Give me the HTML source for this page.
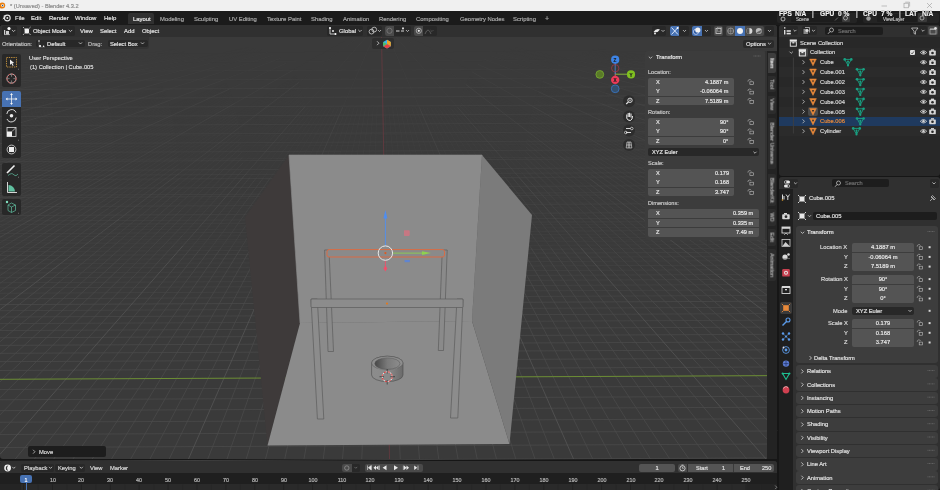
<!DOCTYPE html><html><head><meta charset="utf-8"><style>
html,body{margin:0;padding:0;width:940px;height:490px;overflow:hidden;background:#161616;font-family:"Liberation Sans",sans-serif;}
.t{position:absolute;white-space:nowrap;line-height:1.2;will-change:transform;-webkit-text-stroke:0.18px currentColor;}
.b{position:absolute;}
svg{position:absolute;left:0;top:0;}
</style></head><body>
<div class="b" style="left:0px;top:0px;width:940px;height:11px;background:#f0f0f0;border-radius:0px;"></div>
<svg width="12" height="11" style="left:0;top:0"><circle cx="2.2" cy="5.6" r="3" fill="#e87d0d"/><circle cx="2.6" cy="5.6" r="1.4" fill="#fff"/><circle cx="2.6" cy="5.6" r="0.8" fill="#265787"/></svg>
<div class="t" style="left:9.60px;top:3.39px;font-size:5.66px;color:#8a8a8a;">* (Unsaved) - Blender 4.3.2</div>
<svg width="60" height="11" style="left:880px;top:0"><line x1="1.5" y1="6" x2="7" y2="6" stroke="#9a9a9a" stroke-width="0.6"/><rect x="24" y="3.2" width="4.6" height="4.6" fill="none" stroke="#9a9a9a" stroke-width="0.6"/><path d="M25.2,2.2 H29.6 V6.6" fill="none" stroke="#9a9a9a" stroke-width="0.6"/><path d="M47,3 L52,8 M52,3 L47,8" stroke="#9a9a9a" stroke-width="0.6"/></svg>
<div class="b" style="left:0px;top:11px;width:940px;height:14px;background:#1b1b1b;border-radius:0px;"></div>
<svg width="10" height="10" style="left:2px;top:13px"><circle cx="5.3" cy="5" r="2.9" fill="none" stroke="#e0e0e0" stroke-width="1.1"/><circle cx="5.3" cy="5" r="1" fill="#e0e0e0"/><path d="M0.8,6.2 L3.2,3.6 M1.5,3.2 L4.2,2.4 M1.2,5 L3.4,4.4" stroke="#e0e0e0" stroke-width="0.9"/></svg>
<div class="t" style="left:14.50px;top:14.98px;font-size:6.0px;color:#e0e0e0;">File</div>
<div class="t" style="left:31.00px;top:14.98px;font-size:6.0px;color:#e0e0e0;">Edit</div>
<div class="t" style="left:49.00px;top:14.98px;font-size:6.0px;color:#e0e0e0;">Render</div>
<div class="t" style="left:75.00px;top:14.98px;font-size:6.0px;color:#e0e0e0;">Window</div>
<div class="t" style="left:104.00px;top:14.98px;font-size:6.0px;color:#e0e0e0;">Help</div>
<div class="b" style="left:128px;top:13px;width:26px;height:11px;background:#303030;border-radius:0px;border-radius:2px 2px 0 0;"></div>
<div class="t" style="left:133.00px;top:15.64px;font-size:5.9px;color:#e8e8e8;">Layout</div>
<div class="t" style="left:160.00px;top:15.64px;font-size:5.9px;color:#a8a8a8;">Modeling</div>
<div class="t" style="left:194.40px;top:15.64px;font-size:5.9px;color:#a8a8a8;">Sculpting</div>
<div class="t" style="left:228.80px;top:15.64px;font-size:5.9px;color:#a8a8a8;">UV Editing</div>
<div class="t" style="left:267.00px;top:15.64px;font-size:5.9px;color:#a8a8a8;">Texture Paint</div>
<div class="t" style="left:311.00px;top:15.64px;font-size:5.9px;color:#a8a8a8;">Shading</div>
<div class="t" style="left:342.50px;top:15.64px;font-size:5.9px;color:#a8a8a8;">Animation</div>
<div class="t" style="left:379.00px;top:15.64px;font-size:5.9px;color:#a8a8a8;">Rendering</div>
<div class="t" style="left:415.70px;top:15.64px;font-size:5.9px;color:#a8a8a8;">Compositing</div>
<div class="t" style="left:460.00px;top:15.64px;font-size:5.9px;color:#a8a8a8;">Geometry Nodes</div>
<div class="t" style="left:512.80px;top:15.64px;font-size:5.9px;color:#a8a8a8;">Scripting</div>
<div class="t" style="left:544.50px;top:14.66px;font-size:7px;color:#a8a8a8;">+</div>
<div class="b" style="left:0px;top:25px;width:777px;height:434px;background:#3a3a3a;border-radius:3px;"></div>
<svg width="940" height="490"><line x1="0" y1="461.39" x2="777" y2="457.89" stroke="#4a4a4a" stroke-opacity="1.00" stroke-width="0.8"/><line x1="0" y1="447.51" x2="777" y2="444.01" stroke="#4a4a4a" stroke-opacity="1.00" stroke-width="0.8"/><line x1="0" y1="434.48" x2="777" y2="430.98" stroke="#4a4a4a" stroke-opacity="1.00" stroke-width="0.8"/><line x1="0" y1="422.23" x2="777" y2="418.73" stroke="#4a4a4a" stroke-opacity="1.00" stroke-width="0.8"/><line x1="0" y1="410.68" x2="777" y2="407.18" stroke="#4a4a4a" stroke-opacity="1.00" stroke-width="0.8"/><line x1="0" y1="399.78" x2="777" y2="396.28" stroke="#4a4a4a" stroke-opacity="1.00" stroke-width="0.8"/><line x1="0" y1="389.47" x2="777" y2="385.98" stroke="#4a4a4a" stroke-opacity="1.00" stroke-width="0.8"/><line x1="0" y1="370.46" x2="777" y2="366.96" stroke="#4a4a4a" stroke-opacity="1.00" stroke-width="0.8"/><line x1="0" y1="361.67" x2="777" y2="358.18" stroke="#4a4a4a" stroke-opacity="1.00" stroke-width="0.8"/><line x1="0" y1="353.32" x2="777" y2="349.82" stroke="#4a4a4a" stroke-opacity="1.00" stroke-width="0.8"/><line x1="0" y1="345.36" x2="777" y2="341.86" stroke="#4a4a4a" stroke-opacity="1.00" stroke-width="0.8"/><line x1="0" y1="337.78" x2="777" y2="334.28" stroke="#4a4a4a" stroke-opacity="0.97" stroke-width="0.8"/><line x1="0" y1="330.54" x2="777" y2="327.05" stroke="#4a4a4a" stroke-opacity="0.91" stroke-width="0.8"/><line x1="0" y1="323.63" x2="777" y2="320.14" stroke="#4a4a4a" stroke-opacity="0.86" stroke-width="0.8"/><line x1="0" y1="317.02" x2="777" y2="313.53" stroke="#4a4a4a" stroke-opacity="0.81" stroke-width="0.8"/><line x1="0" y1="310.70" x2="777" y2="307.20" stroke="#4a4a4a" stroke-opacity="0.77" stroke-width="0.8"/><line x1="0" y1="304.64" x2="777" y2="301.14" stroke="#505050" stroke-opacity="0.72" stroke-width="0.8"/><line x1="0" y1="298.83" x2="777" y2="295.33" stroke="#4a4a4a" stroke-opacity="0.68" stroke-width="0.8"/><line x1="0" y1="293.25" x2="777" y2="289.75" stroke="#4a4a4a" stroke-opacity="0.64" stroke-width="0.8"/><line x1="0" y1="287.89" x2="777" y2="284.39" stroke="#4a4a4a" stroke-opacity="0.61" stroke-width="0.8"/><line x1="0" y1="282.74" x2="777" y2="279.24" stroke="#4a4a4a" stroke-opacity="0.58" stroke-width="0.8"/><line x1="0" y1="277.79" x2="777" y2="274.29" stroke="#4a4a4a" stroke-opacity="0.54" stroke-width="0.8"/><line x1="0" y1="273.02" x2="777" y2="269.52" stroke="#4a4a4a" stroke-opacity="0.51" stroke-width="0.8"/><line x1="0" y1="268.42" x2="777" y2="264.92" stroke="#4a4a4a" stroke-opacity="0.49" stroke-width="0.8"/><line x1="0" y1="263.99" x2="777" y2="260.49" stroke="#4a4a4a" stroke-opacity="0.46" stroke-width="0.8"/><line x1="0" y1="259.72" x2="777" y2="256.22" stroke="#4a4a4a" stroke-opacity="0.43" stroke-width="0.8"/><line x1="0" y1="255.59" x2="777" y2="252.09" stroke="#505050" stroke-opacity="0.41" stroke-width="0.8"/><line x1="0" y1="251.61" x2="777" y2="248.11" stroke="#4a4a4a" stroke-opacity="0.39" stroke-width="0.8"/><line x1="0" y1="247.75" x2="777" y2="244.26" stroke="#4a4a4a" stroke-opacity="0.36" stroke-width="0.8"/><line x1="0" y1="244.03" x2="777" y2="240.53" stroke="#4a4a4a" stroke-opacity="0.34" stroke-width="0.8"/><line x1="0" y1="240.42" x2="777" y2="236.93" stroke="#4a4a4a" stroke-opacity="0.32" stroke-width="0.8"/><line x1="0" y1="236.94" x2="777" y2="233.44" stroke="#4a4a4a" stroke-opacity="0.31" stroke-width="0.8"/><line x1="0" y1="233.56" x2="777" y2="230.06" stroke="#4a4a4a" stroke-opacity="0.29" stroke-width="0.8"/><line x1="0" y1="230.28" x2="777" y2="226.78" stroke="#4a4a4a" stroke-opacity="0.27" stroke-width="0.8"/><line x1="0" y1="227.11" x2="777" y2="223.61" stroke="#4a4a4a" stroke-opacity="0.25" stroke-width="0.8"/><line x1="0" y1="224.03" x2="777" y2="220.53" stroke="#4a4a4a" stroke-opacity="0.24" stroke-width="0.8"/><line x1="0" y1="221.04" x2="777" y2="217.54" stroke="#505050" stroke-opacity="0.40" stroke-width="0.8"/><line x1="0" y1="218.13" x2="777" y2="214.64" stroke="#4a4a4a" stroke-opacity="0.21" stroke-width="0.8"/><line x1="0" y1="215.32" x2="777" y2="211.82" stroke="#4a4a4a" stroke-opacity="0.20" stroke-width="0.8"/><line x1="0" y1="212.58" x2="777" y2="209.08" stroke="#4a4a4a" stroke-opacity="0.18" stroke-width="0.8"/><line x1="0" y1="209.91" x2="777" y2="206.42" stroke="#4a4a4a" stroke-opacity="0.17" stroke-width="0.8"/><line x1="0" y1="207.32" x2="777" y2="203.83" stroke="#4a4a4a" stroke-opacity="0.16" stroke-width="0.8"/><line x1="0" y1="204.81" x2="777" y2="201.31" stroke="#4a4a4a" stroke-opacity="0.15" stroke-width="0.8"/><line x1="0" y1="202.35" x2="777" y2="198.86" stroke="#4a4a4a" stroke-opacity="0.14" stroke-width="0.8"/><line x1="0" y1="199.97" x2="777" y2="196.47" stroke="#4a4a4a" stroke-opacity="0.13" stroke-width="0.8"/><line x1="0" y1="197.64" x2="777" y2="194.15" stroke="#4a4a4a" stroke-opacity="0.12" stroke-width="0.8"/><line x1="0" y1="195.38" x2="777" y2="191.88" stroke="#505050" stroke-opacity="0.40" stroke-width="0.8"/><line x1="0" y1="193.17" x2="777" y2="189.67" stroke="#4a4a4a" stroke-opacity="0.10" stroke-width="0.8"/><line x1="0" y1="191.02" x2="777" y2="187.52" stroke="#4a4a4a" stroke-opacity="0.09" stroke-width="0.8"/><line x1="0" y1="188.92" x2="777" y2="185.42" stroke="#4a4a4a" stroke-opacity="0.08" stroke-width="0.8"/><line x1="0" y1="186.87" x2="777" y2="183.38" stroke="#4a4a4a" stroke-opacity="0.07" stroke-width="0.8"/><line x1="0" y1="184.88" x2="777" y2="181.38" stroke="#4a4a4a" stroke-opacity="0.06" stroke-width="0.8"/><line x1="0" y1="182.93" x2="777" y2="179.43" stroke="#4a4a4a" stroke-opacity="0.05" stroke-width="0.8"/><line x1="0" y1="181.02" x2="777" y2="177.53" stroke="#4a4a4a" stroke-opacity="0.05" stroke-width="0.8"/><line x1="0" y1="179.16" x2="777" y2="175.67" stroke="#4a4a4a" stroke-opacity="0.04" stroke-width="0.8"/><line x1="0" y1="177.35" x2="777" y2="173.85" stroke="#4a4a4a" stroke-opacity="0.03" stroke-width="0.8"/><line x1="0" y1="175.57" x2="777" y2="172.08" stroke="#505050" stroke-opacity="0.33" stroke-width="0.8"/><line x1="0" y1="159.82" x2="777" y2="156.33" stroke="#505050" stroke-opacity="0.23" stroke-width="0.8"/><line x1="0" y1="147.00" x2="777" y2="143.50" stroke="#505050" stroke-opacity="0.16" stroke-width="0.8"/><line x1="0" y1="136.35" x2="777" y2="132.85" stroke="#505050" stroke-opacity="0.11" stroke-width="0.8"/><line x1="0" y1="127.37" x2="777" y2="123.88" stroke="#505050" stroke-opacity="0.07" stroke-width="0.8"/><line x1="0" y1="119.70" x2="777" y2="116.20" stroke="#505050" stroke-opacity="0.03" stroke-width="0.8"/><line x1="115.95" y1="50.22" x2="77.30" y2="54.63" stroke="#555555" stroke-opacity="0.02" stroke-width="0.8"/><line x1="77.30" y1="54.63" x2="38.65" y2="59.03" stroke="#555555" stroke-opacity="0.05" stroke-width="0.8"/><line x1="38.65" y1="59.03" x2="0.00" y2="63.44" stroke="#555555" stroke-opacity="0.08" stroke-width="0.8"/><line x1="119.67" y1="51.36" x2="79.78" y2="56.15" stroke="#555555" stroke-opacity="0.03" stroke-width="0.8"/><line x1="79.78" y1="56.15" x2="39.89" y2="60.94" stroke="#555555" stroke-opacity="0.06" stroke-width="0.8"/><line x1="39.89" y1="60.94" x2="0.00" y2="65.73" stroke="#555555" stroke-opacity="0.09" stroke-width="0.8"/><line x1="123.40" y1="52.63" x2="82.27" y2="57.84" stroke="#555555" stroke-opacity="0.04" stroke-width="0.8"/><line x1="82.27" y1="57.84" x2="41.13" y2="63.05" stroke="#555555" stroke-opacity="0.07" stroke-width="0.8"/><line x1="41.13" y1="63.05" x2="0.00" y2="68.27" stroke="#555555" stroke-opacity="0.11" stroke-width="0.8"/><line x1="127.13" y1="54.05" x2="84.75" y2="59.74" stroke="#555555" stroke-opacity="0.05" stroke-width="0.8"/><line x1="84.75" y1="59.74" x2="42.38" y2="65.42" stroke="#555555" stroke-opacity="0.09" stroke-width="0.8"/><line x1="42.38" y1="65.42" x2="0.00" y2="71.10" stroke="#555555" stroke-opacity="0.13" stroke-width="0.8"/><line x1="174.48" y1="49.43" x2="130.86" y2="55.65" stroke="#555555" stroke-opacity="0.02" stroke-width="0.8"/><line x1="130.86" y1="55.65" x2="87.24" y2="61.87" stroke="#555555" stroke-opacity="0.06" stroke-width="0.8"/><line x1="87.24" y1="61.87" x2="43.62" y2="68.08" stroke="#555555" stroke-opacity="0.11" stroke-width="0.8"/><line x1="43.62" y1="68.08" x2="0.00" y2="74.30" stroke="#555555" stroke-opacity="0.14" stroke-width="0.8"/><line x1="179.45" y1="50.64" x2="134.59" y2="57.46" stroke="#555555" stroke-opacity="0.03" stroke-width="0.8"/><line x1="134.59" y1="57.46" x2="89.72" y2="64.28" stroke="#555555" stroke-opacity="0.07" stroke-width="0.8"/><line x1="89.72" y1="64.28" x2="44.86" y2="71.10" stroke="#555555" stroke-opacity="0.12" stroke-width="0.8"/><line x1="44.86" y1="71.10" x2="0.00" y2="77.92" stroke="#555555" stroke-opacity="0.16" stroke-width="0.8"/><line x1="184.42" y1="52.02" x2="138.31" y2="59.53" stroke="#555555" stroke-opacity="0.04" stroke-width="0.8"/><line x1="138.31" y1="59.53" x2="92.21" y2="67.04" stroke="#555555" stroke-opacity="0.09" stroke-width="0.8"/><line x1="92.21" y1="67.04" x2="46.10" y2="74.55" stroke="#555555" stroke-opacity="0.14" stroke-width="0.8"/><line x1="46.10" y1="74.55" x2="0.00" y2="82.06" stroke="#555555" stroke-opacity="0.18" stroke-width="0.8"/><line x1="189.39" y1="53.61" x2="142.04" y2="61.91" stroke="#555555" stroke-opacity="0.05" stroke-width="0.8"/><line x1="142.04" y1="61.91" x2="94.69" y2="70.22" stroke="#555555" stroke-opacity="0.11" stroke-width="0.8"/><line x1="94.69" y1="70.22" x2="47.35" y2="78.52" stroke="#555555" stroke-opacity="0.16" stroke-width="0.8"/><line x1="47.35" y1="78.52" x2="0.00" y2="86.83" stroke="#555555" stroke-opacity="0.20" stroke-width="0.8"/><line x1="194.36" y1="55.47" x2="145.77" y2="64.70" stroke="#555555" stroke-opacity="0.07" stroke-width="0.8"/><line x1="145.77" y1="64.70" x2="97.18" y2="73.93" stroke="#555555" stroke-opacity="0.13" stroke-width="0.8"/><line x1="97.18" y1="73.93" x2="48.59" y2="83.17" stroke="#555555" stroke-opacity="0.18" stroke-width="0.8"/><line x1="48.59" y1="83.17" x2="-0.00" y2="92.40" stroke="#555555" stroke-opacity="0.23" stroke-width="0.8"/><line x1="249.16" y1="47.33" x2="199.33" y2="57.66" stroke="#555555" stroke-opacity="0.02" stroke-width="0.8"/><line x1="199.33" y1="57.66" x2="149.50" y2="67.99" stroke="#555555" stroke-opacity="0.09" stroke-width="0.8"/><line x1="149.50" y1="67.99" x2="99.66" y2="78.32" stroke="#555555" stroke-opacity="0.15" stroke-width="0.8"/><line x1="99.66" y1="78.32" x2="49.83" y2="88.65" stroke="#555555" stroke-opacity="0.21" stroke-width="0.8"/><line x1="49.83" y1="88.65" x2="0.00" y2="98.98" stroke="#555555" stroke-opacity="0.26" stroke-width="0.8"/><line x1="49.96" y1="89.25" x2="0.00" y2="99.70" stroke="#4a4a4a" stroke-opacity="0.02" stroke-width="0.8"/><line x1="50.08" y1="89.87" x2="0.00" y2="100.44" stroke="#4a4a4a" stroke-opacity="0.02" stroke-width="0.8"/><line x1="50.20" y1="90.50" x2="0.00" y2="101.19" stroke="#4a4a4a" stroke-opacity="0.03" stroke-width="0.8"/><line x1="50.33" y1="91.13" x2="0.00" y2="101.96" stroke="#4a4a4a" stroke-opacity="0.03" stroke-width="0.8"/><line x1="50.45" y1="91.78" x2="0.00" y2="102.74" stroke="#4a4a4a" stroke-opacity="0.03" stroke-width="0.8"/><line x1="50.58" y1="92.45" x2="0.00" y2="103.54" stroke="#4a4a4a" stroke-opacity="0.04" stroke-width="0.8"/><line x1="50.70" y1="93.12" x2="0.00" y2="104.35" stroke="#4a4a4a" stroke-opacity="0.04" stroke-width="0.8"/><line x1="50.83" y1="93.81" x2="0.00" y2="105.17" stroke="#4a4a4a" stroke-opacity="0.04" stroke-width="0.8"/><line x1="50.95" y1="94.51" x2="0.00" y2="106.02" stroke="#4a4a4a" stroke-opacity="0.05" stroke-width="0.8"/><line x1="255.37" y1="48.65" x2="204.30" y2="60.29" stroke="#555555" stroke-opacity="0.03" stroke-width="0.8"/><line x1="204.30" y1="60.29" x2="153.22" y2="71.94" stroke="#555555" stroke-opacity="0.11" stroke-width="0.8"/><line x1="153.22" y1="71.94" x2="102.15" y2="83.59" stroke="#555555" stroke-opacity="0.18" stroke-width="0.8"/><line x1="102.15" y1="83.59" x2="51.07" y2="95.23" stroke="#555555" stroke-opacity="0.24" stroke-width="0.8"/><line x1="51.07" y1="95.23" x2="0.00" y2="106.88" stroke="#555555" stroke-opacity="0.30" stroke-width="0.8"/><line x1="51.20" y1="95.96" x2="0.00" y2="107.76" stroke="#4a4a4a" stroke-opacity="0.05" stroke-width="0.8"/><line x1="51.32" y1="96.71" x2="0.00" y2="108.65" stroke="#4a4a4a" stroke-opacity="0.06" stroke-width="0.8"/><line x1="51.45" y1="97.47" x2="0.00" y2="109.56" stroke="#4a4a4a" stroke-opacity="0.06" stroke-width="0.8"/><line x1="51.57" y1="98.25" x2="0.00" y2="110.50" stroke="#4a4a4a" stroke-opacity="0.07" stroke-width="0.8"/><line x1="51.70" y1="99.04" x2="0.00" y2="111.45" stroke="#4a4a4a" stroke-opacity="0.07" stroke-width="0.8"/><line x1="51.82" y1="99.85" x2="0.00" y2="112.42" stroke="#4a4a4a" stroke-opacity="0.08" stroke-width="0.8"/><line x1="103.89" y1="87.94" x2="51.94" y2="100.68" stroke="#4a4a4a" stroke-opacity="0.02" stroke-width="0.8"/><line x1="51.94" y1="100.68" x2="0.00" y2="113.42" stroke="#4a4a4a" stroke-opacity="0.08" stroke-width="0.8"/><line x1="104.14" y1="88.62" x2="52.07" y2="101.53" stroke="#4a4a4a" stroke-opacity="0.02" stroke-width="0.8"/><line x1="52.07" y1="101.53" x2="0.00" y2="114.43" stroke="#4a4a4a" stroke-opacity="0.09" stroke-width="0.8"/><line x1="104.39" y1="89.31" x2="52.19" y2="102.39" stroke="#4a4a4a" stroke-opacity="0.03" stroke-width="0.8"/><line x1="52.19" y1="102.39" x2="0.00" y2="115.47" stroke="#4a4a4a" stroke-opacity="0.09" stroke-width="0.8"/><line x1="261.59" y1="50.26" x2="209.27" y2="63.51" stroke="#555555" stroke-opacity="0.05" stroke-width="0.8"/><line x1="209.27" y1="63.51" x2="156.95" y2="76.77" stroke="#555555" stroke-opacity="0.14" stroke-width="0.8"/><line x1="156.95" y1="76.77" x2="104.63" y2="90.02" stroke="#555555" stroke-opacity="0.21" stroke-width="0.8"/><line x1="104.63" y1="90.02" x2="52.32" y2="103.28" stroke="#555555" stroke-opacity="0.28" stroke-width="0.8"/><line x1="52.32" y1="103.28" x2="0.00" y2="116.53" stroke="#555555" stroke-opacity="0.35" stroke-width="0.8"/><line x1="104.88" y1="90.74" x2="52.44" y2="104.18" stroke="#4a4a4a" stroke-opacity="0.03" stroke-width="0.8"/><line x1="52.44" y1="104.18" x2="0.00" y2="117.62" stroke="#4a4a4a" stroke-opacity="0.10" stroke-width="0.8"/><line x1="105.13" y1="91.48" x2="52.57" y2="105.10" stroke="#4a4a4a" stroke-opacity="0.04" stroke-width="0.8"/><line x1="52.57" y1="105.10" x2="0.00" y2="118.72" stroke="#4a4a4a" stroke-opacity="0.11" stroke-width="0.8"/><line x1="105.38" y1="92.24" x2="52.69" y2="106.05" stroke="#4a4a4a" stroke-opacity="0.04" stroke-width="0.8"/><line x1="52.69" y1="106.05" x2="0.00" y2="119.86" stroke="#4a4a4a" stroke-opacity="0.12" stroke-width="0.8"/><line x1="105.63" y1="93.01" x2="52.81" y2="107.02" stroke="#4a4a4a" stroke-opacity="0.04" stroke-width="0.8"/><line x1="52.81" y1="107.02" x2="0.00" y2="121.02" stroke="#4a4a4a" stroke-opacity="0.12" stroke-width="0.8"/><line x1="105.88" y1="93.81" x2="52.94" y2="108.01" stroke="#4a4a4a" stroke-opacity="0.05" stroke-width="0.8"/><line x1="52.94" y1="108.01" x2="0.00" y2="122.21" stroke="#4a4a4a" stroke-opacity="0.13" stroke-width="0.8"/><line x1="106.13" y1="94.62" x2="53.06" y2="109.02" stroke="#4a4a4a" stroke-opacity="0.05" stroke-width="0.8"/><line x1="53.06" y1="109.02" x2="0.00" y2="123.43" stroke="#4a4a4a" stroke-opacity="0.14" stroke-width="0.8"/><line x1="106.37" y1="95.45" x2="53.19" y2="110.06" stroke="#4a4a4a" stroke-opacity="0.06" stroke-width="0.8"/><line x1="53.19" y1="110.06" x2="0.00" y2="124.67" stroke="#4a4a4a" stroke-opacity="0.14" stroke-width="0.8"/><line x1="106.62" y1="96.30" x2="53.31" y2="111.12" stroke="#4a4a4a" stroke-opacity="0.06" stroke-width="0.8"/><line x1="53.31" y1="111.12" x2="0.00" y2="125.95" stroke="#4a4a4a" stroke-opacity="0.15" stroke-width="0.8"/><line x1="106.87" y1="97.17" x2="53.44" y2="112.21" stroke="#4a4a4a" stroke-opacity="0.07" stroke-width="0.8"/><line x1="53.44" y1="112.21" x2="0.00" y2="127.26" stroke="#4a4a4a" stroke-opacity="0.15" stroke-width="0.8"/><line x1="267.80" y1="52.27" x2="214.24" y2="67.53" stroke="#555555" stroke-opacity="0.07" stroke-width="0.8"/><line x1="214.24" y1="67.53" x2="160.68" y2="82.80" stroke="#555555" stroke-opacity="0.16" stroke-width="0.8"/><line x1="160.68" y1="82.80" x2="107.12" y2="98.06" stroke="#555555" stroke-opacity="0.25" stroke-width="0.8"/><line x1="107.12" y1="98.06" x2="53.56" y2="113.33" stroke="#555555" stroke-opacity="0.33" stroke-width="0.8"/><line x1="53.56" y1="113.33" x2="0.00" y2="128.60" stroke="#555555" stroke-opacity="0.38" stroke-width="0.8"/><line x1="107.37" y1="98.98" x2="53.68" y2="114.48" stroke="#4a4a4a" stroke-opacity="0.08" stroke-width="0.8"/><line x1="53.68" y1="114.48" x2="-0.00" y2="129.97" stroke="#4a4a4a" stroke-opacity="0.16" stroke-width="0.8"/><line x1="107.62" y1="99.92" x2="53.81" y2="115.65" stroke="#4a4a4a" stroke-opacity="0.08" stroke-width="0.8"/><line x1="53.81" y1="115.65" x2="0.00" y2="131.38" stroke="#4a4a4a" stroke-opacity="0.17" stroke-width="0.8"/><line x1="107.86" y1="100.89" x2="53.93" y2="116.86" stroke="#4a4a4a" stroke-opacity="0.09" stroke-width="0.8"/><line x1="53.93" y1="116.86" x2="-0.00" y2="132.83" stroke="#4a4a4a" stroke-opacity="0.18" stroke-width="0.8"/><line x1="108.11" y1="101.88" x2="54.06" y2="118.09" stroke="#4a4a4a" stroke-opacity="0.10" stroke-width="0.8"/><line x1="54.06" y1="118.09" x2="-0.00" y2="134.31" stroke="#4a4a4a" stroke-opacity="0.18" stroke-width="0.8"/><line x1="162.54" y1="86.42" x2="108.36" y2="102.89" stroke="#4a4a4a" stroke-opacity="0.02" stroke-width="0.8"/><line x1="108.36" y1="102.89" x2="54.18" y2="119.36" stroke="#4a4a4a" stroke-opacity="0.10" stroke-width="0.8"/><line x1="54.18" y1="119.36" x2="-0.00" y2="135.84" stroke="#4a4a4a" stroke-opacity="0.19" stroke-width="0.8"/><line x1="162.92" y1="87.20" x2="108.61" y2="103.93" stroke="#4a4a4a" stroke-opacity="0.03" stroke-width="0.8"/><line x1="108.61" y1="103.93" x2="54.31" y2="120.67" stroke="#4a4a4a" stroke-opacity="0.11" stroke-width="0.8"/><line x1="54.31" y1="120.67" x2="0.00" y2="137.40" stroke="#4a4a4a" stroke-opacity="0.20" stroke-width="0.8"/><line x1="163.29" y1="88.01" x2="108.86" y2="105.01" stroke="#4a4a4a" stroke-opacity="0.03" stroke-width="0.8"/><line x1="108.86" y1="105.01" x2="54.43" y2="122.01" stroke="#4a4a4a" stroke-opacity="0.12" stroke-width="0.8"/><line x1="54.43" y1="122.01" x2="0.00" y2="139.01" stroke="#4a4a4a" stroke-opacity="0.21" stroke-width="0.8"/><line x1="163.66" y1="88.83" x2="109.11" y2="106.11" stroke="#4a4a4a" stroke-opacity="0.03" stroke-width="0.8"/><line x1="109.11" y1="106.11" x2="54.55" y2="123.39" stroke="#4a4a4a" stroke-opacity="0.13" stroke-width="0.8"/><line x1="54.55" y1="123.39" x2="0.00" y2="140.66" stroke="#4a4a4a" stroke-opacity="0.21" stroke-width="0.8"/><line x1="164.03" y1="89.68" x2="109.36" y2="107.24" stroke="#4a4a4a" stroke-opacity="0.04" stroke-width="0.8"/><line x1="109.36" y1="107.24" x2="54.68" y2="124.80" stroke="#4a4a4a" stroke-opacity="0.13" stroke-width="0.8"/><line x1="54.68" y1="124.80" x2="0.00" y2="142.36" stroke="#4a4a4a" stroke-opacity="0.22" stroke-width="0.8"/><line x1="274.01" y1="54.85" x2="219.21" y2="72.70" stroke="#555555" stroke-opacity="0.10" stroke-width="0.8"/><line x1="219.21" y1="72.70" x2="164.41" y2="90.56" stroke="#555555" stroke-opacity="0.20" stroke-width="0.8"/><line x1="164.41" y1="90.56" x2="109.60" y2="108.41" stroke="#555555" stroke-opacity="0.30" stroke-width="0.8"/><line x1="109.60" y1="108.41" x2="54.80" y2="126.26" stroke="#555555" stroke-opacity="0.38" stroke-width="0.8"/><line x1="54.80" y1="126.26" x2="0.00" y2="144.11" stroke="#555555" stroke-opacity="0.38" stroke-width="0.8"/><line x1="164.78" y1="91.45" x2="109.85" y2="109.61" stroke="#4a4a4a" stroke-opacity="0.05" stroke-width="0.8"/><line x1="109.85" y1="109.61" x2="54.93" y2="127.76" stroke="#4a4a4a" stroke-opacity="0.15" stroke-width="0.8"/><line x1="54.93" y1="127.76" x2="0.00" y2="145.91" stroke="#4a4a4a" stroke-opacity="0.24" stroke-width="0.8"/><line x1="165.15" y1="92.38" x2="110.10" y2="110.84" stroke="#4a4a4a" stroke-opacity="0.05" stroke-width="0.8"/><line x1="110.10" y1="110.84" x2="55.05" y2="129.30" stroke="#4a4a4a" stroke-opacity="0.15" stroke-width="0.8"/><line x1="55.05" y1="129.30" x2="-0.00" y2="147.76" stroke="#4a4a4a" stroke-opacity="0.24" stroke-width="0.8"/><line x1="165.52" y1="93.33" x2="110.35" y2="112.11" stroke="#4a4a4a" stroke-opacity="0.06" stroke-width="0.8"/><line x1="110.35" y1="112.11" x2="55.17" y2="130.89" stroke="#4a4a4a" stroke-opacity="0.16" stroke-width="0.8"/><line x1="55.17" y1="130.89" x2="-0.00" y2="149.67" stroke="#4a4a4a" stroke-opacity="0.25" stroke-width="0.8"/><line x1="165.90" y1="94.32" x2="110.60" y2="113.42" stroke="#4a4a4a" stroke-opacity="0.06" stroke-width="0.8"/><line x1="110.60" y1="113.42" x2="55.30" y2="132.53" stroke="#4a4a4a" stroke-opacity="0.17" stroke-width="0.8"/><line x1="55.30" y1="132.53" x2="0.00" y2="151.63" stroke="#4a4a4a" stroke-opacity="0.26" stroke-width="0.8"/><line x1="166.27" y1="95.33" x2="110.85" y2="114.77" stroke="#4a4a4a" stroke-opacity="0.07" stroke-width="0.8"/><line x1="110.85" y1="114.77" x2="55.42" y2="134.22" stroke="#4a4a4a" stroke-opacity="0.18" stroke-width="0.8"/><line x1="55.42" y1="134.22" x2="0.00" y2="153.66" stroke="#4a4a4a" stroke-opacity="0.27" stroke-width="0.8"/><line x1="166.64" y1="96.37" x2="111.10" y2="116.16" stroke="#4a4a4a" stroke-opacity="0.08" stroke-width="0.8"/><line x1="111.10" y1="116.16" x2="55.55" y2="135.96" stroke="#4a4a4a" stroke-opacity="0.18" stroke-width="0.8"/><line x1="55.55" y1="135.96" x2="0.00" y2="155.75" stroke="#4a4a4a" stroke-opacity="0.28" stroke-width="0.8"/><line x1="167.02" y1="97.45" x2="111.34" y2="117.60" stroke="#4a4a4a" stroke-opacity="0.08" stroke-width="0.8"/><line x1="111.34" y1="117.60" x2="55.67" y2="137.75" stroke="#4a4a4a" stroke-opacity="0.19" stroke-width="0.8"/><line x1="55.67" y1="137.75" x2="0.00" y2="157.90" stroke="#4a4a4a" stroke-opacity="0.29" stroke-width="0.8"/><line x1="167.39" y1="98.56" x2="111.59" y2="119.08" stroke="#4a4a4a" stroke-opacity="0.09" stroke-width="0.8"/><line x1="111.59" y1="119.08" x2="55.80" y2="139.60" stroke="#4a4a4a" stroke-opacity="0.20" stroke-width="0.8"/><line x1="55.80" y1="139.60" x2="-0.00" y2="160.13" stroke="#4a4a4a" stroke-opacity="0.30" stroke-width="0.8"/><line x1="167.76" y1="99.71" x2="111.84" y2="120.61" stroke="#4a4a4a" stroke-opacity="0.10" stroke-width="0.8"/><line x1="111.84" y1="120.61" x2="55.92" y2="141.52" stroke="#4a4a4a" stroke-opacity="0.21" stroke-width="0.8"/><line x1="55.92" y1="141.52" x2="0.00" y2="162.42" stroke="#4a4a4a" stroke-opacity="0.31" stroke-width="0.8"/><line x1="280.22" y1="58.30" x2="224.18" y2="79.60" stroke="#555555" stroke-opacity="0.13" stroke-width="0.8"/><line x1="224.18" y1="79.60" x2="168.13" y2="100.90" stroke="#555555" stroke-opacity="0.25" stroke-width="0.8"/><line x1="168.13" y1="100.90" x2="112.09" y2="122.20" stroke="#555555" stroke-opacity="0.36" stroke-width="0.8"/><line x1="112.09" y1="122.20" x2="56.04" y2="143.50" stroke="#555555" stroke-opacity="0.38" stroke-width="0.8"/><line x1="56.04" y1="143.50" x2="-0.00" y2="164.80" stroke="#555555" stroke-opacity="0.38" stroke-width="0.8"/><line x1="168.51" y1="102.13" x2="112.34" y2="123.83" stroke="#4a4a4a" stroke-opacity="0.12" stroke-width="0.8"/><line x1="112.34" y1="123.83" x2="56.17" y2="145.54" stroke="#4a4a4a" stroke-opacity="0.23" stroke-width="0.8"/><line x1="56.17" y1="145.54" x2="0.00" y2="167.25" stroke="#4a4a4a" stroke-opacity="0.33" stroke-width="0.8"/><line x1="168.88" y1="103.39" x2="112.59" y2="125.53" stroke="#4a4a4a" stroke-opacity="0.13" stroke-width="0.8"/><line x1="112.59" y1="125.53" x2="56.29" y2="147.66" stroke="#4a4a4a" stroke-opacity="0.23" stroke-width="0.8"/><line x1="56.29" y1="147.66" x2="0.00" y2="169.79" stroke="#4a4a4a" stroke-opacity="0.34" stroke-width="0.8"/><line x1="169.25" y1="104.71" x2="112.83" y2="127.28" stroke="#4a4a4a" stroke-opacity="0.13" stroke-width="0.8"/><line x1="112.83" y1="127.28" x2="56.42" y2="149.85" stroke="#4a4a4a" stroke-opacity="0.24" stroke-width="0.8"/><line x1="56.42" y1="149.85" x2="0.00" y2="172.42" stroke="#4a4a4a" stroke-opacity="0.35" stroke-width="0.8"/><line x1="226.17" y1="83.05" x2="169.63" y2="106.07" stroke="#4a4a4a" stroke-opacity="0.02" stroke-width="0.8"/><line x1="169.63" y1="106.07" x2="113.08" y2="129.09" stroke="#4a4a4a" stroke-opacity="0.14" stroke-width="0.8"/><line x1="113.08" y1="129.09" x2="56.54" y2="152.12" stroke="#4a4a4a" stroke-opacity="0.25" stroke-width="0.8"/><line x1="56.54" y1="152.12" x2="0.00" y2="175.14" stroke="#4a4a4a" stroke-opacity="0.37" stroke-width="0.8"/><line x1="226.66" y1="83.99" x2="170.00" y2="107.48" stroke="#4a4a4a" stroke-opacity="0.03" stroke-width="0.8"/><line x1="170.00" y1="107.48" x2="113.33" y2="130.97" stroke="#4a4a4a" stroke-opacity="0.15" stroke-width="0.8"/><line x1="113.33" y1="130.97" x2="56.67" y2="154.47" stroke="#4a4a4a" stroke-opacity="0.26" stroke-width="0.8"/><line x1="56.67" y1="154.47" x2="0.00" y2="177.96" stroke="#4a4a4a" stroke-opacity="0.38" stroke-width="0.8"/><line x1="227.16" y1="84.96" x2="170.37" y2="108.94" stroke="#4a4a4a" stroke-opacity="0.03" stroke-width="0.8"/><line x1="170.37" y1="108.94" x2="113.58" y2="132.92" stroke="#4a4a4a" stroke-opacity="0.16" stroke-width="0.8"/><line x1="113.58" y1="132.92" x2="56.79" y2="156.90" stroke="#4a4a4a" stroke-opacity="0.28" stroke-width="0.8"/><line x1="56.79" y1="156.90" x2="0.00" y2="180.88" stroke="#4a4a4a" stroke-opacity="0.39" stroke-width="0.8"/><line x1="227.66" y1="85.97" x2="170.74" y2="110.46" stroke="#4a4a4a" stroke-opacity="0.04" stroke-width="0.8"/><line x1="170.74" y1="110.46" x2="113.83" y2="134.95" stroke="#4a4a4a" stroke-opacity="0.17" stroke-width="0.8"/><line x1="113.83" y1="134.95" x2="56.91" y2="159.43" stroke="#4a4a4a" stroke-opacity="0.29" stroke-width="0.8"/><line x1="56.91" y1="159.43" x2="0.00" y2="183.92" stroke="#4a4a4a" stroke-opacity="0.41" stroke-width="0.8"/><line x1="228.15" y1="87.02" x2="171.12" y2="112.04" stroke="#4a4a4a" stroke-opacity="0.04" stroke-width="0.8"/><line x1="171.12" y1="112.04" x2="114.08" y2="137.05" stroke="#4a4a4a" stroke-opacity="0.18" stroke-width="0.8"/><line x1="114.08" y1="137.05" x2="57.04" y2="162.06" stroke="#4a4a4a" stroke-opacity="0.30" stroke-width="0.8"/><line x1="57.04" y1="162.06" x2="0.00" y2="187.07" stroke="#4a4a4a" stroke-opacity="0.42" stroke-width="0.8"/><line x1="228.65" y1="88.12" x2="171.49" y2="113.67" stroke="#4a4a4a" stroke-opacity="0.05" stroke-width="0.8"/><line x1="171.49" y1="113.67" x2="114.33" y2="139.23" stroke="#4a4a4a" stroke-opacity="0.19" stroke-width="0.8"/><line x1="114.33" y1="139.23" x2="57.16" y2="164.79" stroke="#4a4a4a" stroke-opacity="0.31" stroke-width="0.8"/><line x1="57.16" y1="164.79" x2="0.00" y2="190.35" stroke="#4a4a4a" stroke-opacity="0.43" stroke-width="0.8"/><line x1="286.44" y1="63.13" x2="229.15" y2="89.25" stroke="#555555" stroke-opacity="0.17" stroke-width="0.8"/><line x1="229.15" y1="89.25" x2="171.86" y2="115.38" stroke="#555555" stroke-opacity="0.31" stroke-width="0.8"/><line x1="171.86" y1="115.38" x2="114.57" y2="141.50" stroke="#555555" stroke-opacity="0.38" stroke-width="0.8"/><line x1="114.57" y1="141.50" x2="57.29" y2="167.63" stroke="#555555" stroke-opacity="0.38" stroke-width="0.8"/><line x1="57.29" y1="167.63" x2="0.00" y2="193.76" stroke="#555555" stroke-opacity="0.45" stroke-width="0.8"/><line x1="229.65" y1="90.43" x2="172.23" y2="117.15" stroke="#4a4a4a" stroke-opacity="0.06" stroke-width="0.8"/><line x1="172.23" y1="117.15" x2="114.82" y2="143.87" stroke="#4a4a4a" stroke-opacity="0.21" stroke-width="0.8"/><line x1="114.82" y1="143.87" x2="57.41" y2="170.58" stroke="#4a4a4a" stroke-opacity="0.34" stroke-width="0.8"/><line x1="57.41" y1="170.58" x2="0.00" y2="197.30" stroke="#4a4a4a" stroke-opacity="0.47" stroke-width="0.8"/><line x1="230.14" y1="91.67" x2="172.61" y2="119.00" stroke="#4a4a4a" stroke-opacity="0.07" stroke-width="0.8"/><line x1="172.61" y1="119.00" x2="115.07" y2="146.33" stroke="#4a4a4a" stroke-opacity="0.22" stroke-width="0.8"/><line x1="115.07" y1="146.33" x2="57.54" y2="173.66" stroke="#4a4a4a" stroke-opacity="0.35" stroke-width="0.8"/><line x1="57.54" y1="173.66" x2="0.00" y2="201.00" stroke="#4a4a4a" stroke-opacity="0.48" stroke-width="0.8"/><line x1="230.64" y1="92.95" x2="172.98" y2="120.92" stroke="#4a4a4a" stroke-opacity="0.08" stroke-width="0.8"/><line x1="172.98" y1="120.92" x2="115.32" y2="148.90" stroke="#4a4a4a" stroke-opacity="0.23" stroke-width="0.8"/><line x1="115.32" y1="148.90" x2="57.66" y2="176.87" stroke="#4a4a4a" stroke-opacity="0.36" stroke-width="0.8"/><line x1="57.66" y1="176.87" x2="0.00" y2="204.85" stroke="#4a4a4a" stroke-opacity="0.50" stroke-width="0.8"/><line x1="231.14" y1="94.29" x2="173.35" y2="122.93" stroke="#4a4a4a" stroke-opacity="0.09" stroke-width="0.8"/><line x1="173.35" y1="122.93" x2="115.57" y2="151.58" stroke="#4a4a4a" stroke-opacity="0.24" stroke-width="0.8"/><line x1="115.57" y1="151.58" x2="57.78" y2="180.22" stroke="#4a4a4a" stroke-opacity="0.38" stroke-width="0.8"/><line x1="57.78" y1="180.22" x2="0.00" y2="208.86" stroke="#4a4a4a" stroke-opacity="0.52" stroke-width="0.8"/><line x1="231.63" y1="95.69" x2="173.73" y2="125.03" stroke="#4a4a4a" stroke-opacity="0.10" stroke-width="0.8"/><line x1="173.73" y1="125.03" x2="115.82" y2="154.37" stroke="#4a4a4a" stroke-opacity="0.25" stroke-width="0.8"/><line x1="115.82" y1="154.37" x2="57.91" y2="183.72" stroke="#4a4a4a" stroke-opacity="0.39" stroke-width="0.8"/><line x1="57.91" y1="183.72" x2="-0.00" y2="213.06" stroke="#4a4a4a" stroke-opacity="0.54" stroke-width="0.8"/><line x1="232.13" y1="97.15" x2="174.10" y2="127.22" stroke="#4a4a4a" stroke-opacity="0.11" stroke-width="0.8"/><line x1="174.10" y1="127.22" x2="116.07" y2="157.30" stroke="#4a4a4a" stroke-opacity="0.26" stroke-width="0.8"/><line x1="116.07" y1="157.30" x2="58.03" y2="187.37" stroke="#4a4a4a" stroke-opacity="0.41" stroke-width="0.8"/><line x1="58.03" y1="187.37" x2="0.00" y2="217.45" stroke="#4a4a4a" stroke-opacity="0.56" stroke-width="0.8"/><line x1="232.63" y1="98.68" x2="174.47" y2="129.52" stroke="#4a4a4a" stroke-opacity="0.12" stroke-width="0.8"/><line x1="174.47" y1="129.52" x2="116.31" y2="160.36" stroke="#4a4a4a" stroke-opacity="0.28" stroke-width="0.8"/><line x1="116.31" y1="160.36" x2="58.16" y2="191.20" stroke="#4a4a4a" stroke-opacity="0.43" stroke-width="0.8"/><line x1="58.16" y1="191.20" x2="0.00" y2="222.04" stroke="#4a4a4a" stroke-opacity="0.58" stroke-width="0.8"/><line x1="233.13" y1="100.28" x2="174.84" y2="131.93" stroke="#4a4a4a" stroke-opacity="0.13" stroke-width="0.8"/><line x1="174.84" y1="131.93" x2="116.56" y2="163.57" stroke="#4a4a4a" stroke-opacity="0.29" stroke-width="0.8"/><line x1="116.56" y1="163.57" x2="58.28" y2="195.21" stroke="#4a4a4a" stroke-opacity="0.44" stroke-width="0.8"/><line x1="58.28" y1="195.21" x2="0.00" y2="226.85" stroke="#4a4a4a" stroke-opacity="0.60" stroke-width="0.8"/><line x1="233.62" y1="101.97" x2="175.22" y2="134.45" stroke="#4a4a4a" stroke-opacity="0.15" stroke-width="0.8"/><line x1="175.22" y1="134.45" x2="116.81" y2="166.93" stroke="#4a4a4a" stroke-opacity="0.30" stroke-width="0.8"/><line x1="116.81" y1="166.93" x2="58.41" y2="199.41" stroke="#4a4a4a" stroke-opacity="0.46" stroke-width="0.8"/><line x1="58.41" y1="199.41" x2="0.00" y2="231.90" stroke="#4a4a4a" stroke-opacity="0.62" stroke-width="0.8"/><line x1="351.18" y1="37.00" x2="292.65" y2="70.37" stroke="#555555" stroke-opacity="0.03" stroke-width="0.8"/><line x1="292.65" y1="70.37" x2="234.12" y2="103.73" stroke="#555555" stroke-opacity="0.23" stroke-width="0.8"/><line x1="234.12" y1="103.73" x2="175.59" y2="137.10" stroke="#555555" stroke-opacity="0.38" stroke-width="0.8"/><line x1="175.59" y1="137.10" x2="117.06" y2="170.46" stroke="#555555" stroke-opacity="0.38" stroke-width="0.8"/><line x1="117.06" y1="170.46" x2="58.53" y2="203.83" stroke="#555555" stroke-opacity="0.48" stroke-width="0.8"/><line x1="58.53" y1="203.83" x2="0.00" y2="237.19" stroke="#555555" stroke-opacity="0.64" stroke-width="0.8"/><line x1="234.62" y1="105.59" x2="175.96" y2="139.88" stroke="#4a4a4a" stroke-opacity="0.17" stroke-width="0.8"/><line x1="175.96" y1="139.88" x2="117.31" y2="174.18" stroke="#4a4a4a" stroke-opacity="0.33" stroke-width="0.8"/><line x1="117.31" y1="174.18" x2="58.65" y2="208.47" stroke="#4a4a4a" stroke-opacity="0.50" stroke-width="0.8"/><line x1="58.65" y1="208.47" x2="0.00" y2="242.76" stroke="#4a4a4a" stroke-opacity="0.67" stroke-width="0.8"/><line x1="235.11" y1="107.54" x2="176.33" y2="142.81" stroke="#4a4a4a" stroke-opacity="0.18" stroke-width="0.8"/><line x1="176.33" y1="142.81" x2="117.56" y2="178.08" stroke="#4a4a4a" stroke-opacity="0.35" stroke-width="0.8"/><line x1="117.56" y1="178.08" x2="58.78" y2="213.35" stroke="#4a4a4a" stroke-opacity="0.52" stroke-width="0.8"/><line x1="58.78" y1="213.35" x2="0.00" y2="248.63" stroke="#4a4a4a" stroke-opacity="0.69" stroke-width="0.8"/><line x1="235.61" y1="109.60" x2="176.71" y2="145.90" stroke="#4a4a4a" stroke-opacity="0.19" stroke-width="0.8"/><line x1="176.71" y1="145.90" x2="117.81" y2="182.20" stroke="#4a4a4a" stroke-opacity="0.37" stroke-width="0.8"/><line x1="117.81" y1="182.20" x2="58.90" y2="218.50" stroke="#4a4a4a" stroke-opacity="0.55" stroke-width="0.8"/><line x1="58.90" y1="218.50" x2="0.00" y2="254.80" stroke="#4a4a4a" stroke-opacity="0.72" stroke-width="0.8"/><line x1="236.11" y1="111.78" x2="177.08" y2="149.16" stroke="#4a4a4a" stroke-opacity="0.20" stroke-width="0.8"/><line x1="177.08" y1="149.16" x2="118.05" y2="186.55" stroke="#4a4a4a" stroke-opacity="0.39" stroke-width="0.8"/><line x1="118.05" y1="186.55" x2="59.03" y2="223.94" stroke="#4a4a4a" stroke-opacity="0.57" stroke-width="0.8"/><line x1="59.03" y1="223.94" x2="0.00" y2="261.33" stroke="#4a4a4a" stroke-opacity="0.75" stroke-width="0.8"/><line x1="295.76" y1="75.54" x2="236.60" y2="114.07" stroke="#4a4a4a" stroke-opacity="0.02" stroke-width="0.8"/><line x1="236.60" y1="114.07" x2="177.45" y2="152.61" stroke="#4a4a4a" stroke-opacity="0.22" stroke-width="0.8"/><line x1="177.45" y1="152.61" x2="118.30" y2="191.15" stroke="#4a4a4a" stroke-opacity="0.41" stroke-width="0.8"/><line x1="118.30" y1="191.15" x2="59.15" y2="229.69" stroke="#4a4a4a" stroke-opacity="0.59" stroke-width="0.8"/><line x1="59.15" y1="229.69" x2="0.00" y2="268.22" stroke="#4a4a4a" stroke-opacity="0.78" stroke-width="0.8"/><line x1="296.38" y1="76.75" x2="237.10" y2="116.51" stroke="#4a4a4a" stroke-opacity="0.03" stroke-width="0.8"/><line x1="237.10" y1="116.51" x2="177.83" y2="156.26" stroke="#4a4a4a" stroke-opacity="0.23" stroke-width="0.8"/><line x1="177.83" y1="156.26" x2="118.55" y2="196.02" stroke="#4a4a4a" stroke-opacity="0.43" stroke-width="0.8"/><line x1="118.55" y1="196.02" x2="59.28" y2="235.77" stroke="#4a4a4a" stroke-opacity="0.62" stroke-width="0.8"/><line x1="59.28" y1="235.77" x2="-0.00" y2="275.52" stroke="#4a4a4a" stroke-opacity="0.81" stroke-width="0.8"/><line x1="297.00" y1="78.04" x2="237.60" y2="119.09" stroke="#4a4a4a" stroke-opacity="0.04" stroke-width="0.8"/><line x1="237.60" y1="119.09" x2="178.20" y2="160.13" stroke="#4a4a4a" stroke-opacity="0.25" stroke-width="0.8"/><line x1="178.20" y1="160.13" x2="118.80" y2="201.18" stroke="#4a4a4a" stroke-opacity="0.45" stroke-width="0.8"/><line x1="118.80" y1="201.18" x2="59.40" y2="242.22" stroke="#4a4a4a" stroke-opacity="0.65" stroke-width="0.8"/><line x1="59.40" y1="242.22" x2="0.00" y2="283.27" stroke="#4a4a4a" stroke-opacity="0.85" stroke-width="0.8"/><line x1="297.62" y1="79.42" x2="238.10" y2="121.83" stroke="#4a4a4a" stroke-opacity="0.05" stroke-width="0.8"/><line x1="238.10" y1="121.83" x2="178.57" y2="164.25" stroke="#4a4a4a" stroke-opacity="0.27" stroke-width="0.8"/><line x1="178.57" y1="164.25" x2="119.05" y2="206.66" stroke="#4a4a4a" stroke-opacity="0.47" stroke-width="0.8"/><line x1="119.05" y1="206.66" x2="59.52" y2="249.08" stroke="#4a4a4a" stroke-opacity="0.68" stroke-width="0.8"/><line x1="59.52" y1="249.08" x2="0.00" y2="291.49" stroke="#4a4a4a" stroke-opacity="0.89" stroke-width="0.8"/><line x1="298.24" y1="80.88" x2="238.59" y2="124.75" stroke="#4a4a4a" stroke-opacity="0.06" stroke-width="0.8"/><line x1="238.59" y1="124.75" x2="178.94" y2="168.63" stroke="#4a4a4a" stroke-opacity="0.28" stroke-width="0.8"/><line x1="178.94" y1="168.63" x2="119.30" y2="212.50" stroke="#4a4a4a" stroke-opacity="0.50" stroke-width="0.8"/><line x1="119.30" y1="212.50" x2="59.65" y2="256.38" stroke="#4a4a4a" stroke-opacity="0.71" stroke-width="0.8"/><line x1="59.65" y1="256.38" x2="0.00" y2="300.25" stroke="#4a4a4a" stroke-opacity="0.93" stroke-width="0.8"/><line x1="358.63" y1="37.00" x2="298.86" y2="82.43" stroke="#555555" stroke-opacity="0.07" stroke-width="0.8"/><line x1="298.86" y1="82.43" x2="239.09" y2="127.86" stroke="#555555" stroke-opacity="0.33" stroke-width="0.8"/><line x1="239.09" y1="127.86" x2="179.32" y2="173.30" stroke="#555555" stroke-opacity="0.38" stroke-width="0.8"/><line x1="179.32" y1="173.30" x2="119.54" y2="218.73" stroke="#555555" stroke-opacity="0.52" stroke-width="0.8"/><line x1="119.54" y1="218.73" x2="59.77" y2="264.16" stroke="#555555" stroke-opacity="0.75" stroke-width="0.8"/><line x1="59.77" y1="264.16" x2="0.00" y2="309.59" stroke="#555555" stroke-opacity="0.97" stroke-width="0.8"/><line x1="299.48" y1="84.10" x2="239.59" y2="131.19" stroke="#4a4a4a" stroke-opacity="0.08" stroke-width="0.8"/><line x1="239.59" y1="131.19" x2="179.69" y2="178.29" stroke="#4a4a4a" stroke-opacity="0.32" stroke-width="0.8"/><line x1="179.69" y1="178.29" x2="119.79" y2="225.39" stroke="#4a4a4a" stroke-opacity="0.55" stroke-width="0.8"/><line x1="119.79" y1="225.39" x2="59.90" y2="272.48" stroke="#4a4a4a" stroke-opacity="0.78" stroke-width="0.8"/><line x1="59.90" y1="272.48" x2="0.00" y2="319.58" stroke="#4a4a4a" stroke-opacity="1.00" stroke-width="0.8"/><line x1="300.10" y1="85.88" x2="240.08" y2="134.76" stroke="#4a4a4a" stroke-opacity="0.10" stroke-width="0.8"/><line x1="240.08" y1="134.76" x2="180.06" y2="183.64" stroke="#4a4a4a" stroke-opacity="0.34" stroke-width="0.8"/><line x1="180.06" y1="183.64" x2="120.04" y2="232.52" stroke="#4a4a4a" stroke-opacity="0.58" stroke-width="0.8"/><line x1="120.04" y1="232.52" x2="60.02" y2="281.40" stroke="#4a4a4a" stroke-opacity="0.82" stroke-width="0.8"/><line x1="60.02" y1="281.40" x2="0.00" y2="330.28" stroke="#4a4a4a" stroke-opacity="1.00" stroke-width="0.8"/><line x1="300.73" y1="87.79" x2="240.58" y2="138.59" stroke="#4a4a4a" stroke-opacity="0.12" stroke-width="0.8"/><line x1="240.58" y1="138.59" x2="180.44" y2="189.38" stroke="#4a4a4a" stroke-opacity="0.37" stroke-width="0.8"/><line x1="180.44" y1="189.38" x2="120.29" y2="240.18" stroke="#4a4a4a" stroke-opacity="0.62" stroke-width="0.8"/><line x1="120.29" y1="240.18" x2="60.15" y2="290.97" stroke="#4a4a4a" stroke-opacity="0.86" stroke-width="0.8"/><line x1="60.15" y1="290.97" x2="0.00" y2="341.77" stroke="#4a4a4a" stroke-opacity="1.00" stroke-width="0.8"/><line x1="301.35" y1="89.86" x2="241.08" y2="142.72" stroke="#4a4a4a" stroke-opacity="0.14" stroke-width="0.8"/><line x1="241.08" y1="142.72" x2="180.81" y2="195.57" stroke="#4a4a4a" stroke-opacity="0.39" stroke-width="0.8"/><line x1="180.81" y1="195.57" x2="120.54" y2="248.43" stroke="#4a4a4a" stroke-opacity="0.65" stroke-width="0.8"/><line x1="120.54" y1="248.43" x2="60.27" y2="301.29" stroke="#4a4a4a" stroke-opacity="0.91" stroke-width="0.8"/><line x1="60.27" y1="301.29" x2="0.00" y2="354.15" stroke="#4a4a4a" stroke-opacity="1.00" stroke-width="0.8"/><line x1="301.97" y1="92.09" x2="241.57" y2="147.17" stroke="#4a4a4a" stroke-opacity="0.15" stroke-width="0.8"/><line x1="241.57" y1="147.17" x2="181.18" y2="202.26" stroke="#4a4a4a" stroke-opacity="0.42" stroke-width="0.8"/><line x1="181.18" y1="202.26" x2="120.79" y2="257.34" stroke="#4a4a4a" stroke-opacity="0.69" stroke-width="0.8"/><line x1="120.79" y1="257.34" x2="60.39" y2="312.43" stroke="#4a4a4a" stroke-opacity="0.96" stroke-width="0.8"/><line x1="60.39" y1="312.43" x2="0.00" y2="367.51" stroke="#4a4a4a" stroke-opacity="1.00" stroke-width="0.8"/><line x1="302.59" y1="94.50" x2="242.07" y2="152.00" stroke="#4a4a4a" stroke-opacity="0.17" stroke-width="0.8"/><line x1="242.07" y1="152.00" x2="181.55" y2="209.50" stroke="#4a4a4a" stroke-opacity="0.45" stroke-width="0.8"/><line x1="181.55" y1="209.50" x2="121.04" y2="266.99" stroke="#4a4a4a" stroke-opacity="0.73" stroke-width="0.8"/><line x1="121.04" y1="266.99" x2="60.52" y2="324.49" stroke="#4a4a4a" stroke-opacity="1.00" stroke-width="0.8"/><line x1="60.52" y1="324.49" x2="0.00" y2="381.99" stroke="#4a4a4a" stroke-opacity="1.00" stroke-width="0.8"/><line x1="303.21" y1="97.12" x2="242.57" y2="157.24" stroke="#4a4a4a" stroke-opacity="0.19" stroke-width="0.8"/><line x1="242.57" y1="157.24" x2="181.93" y2="217.36" stroke="#4a4a4a" stroke-opacity="0.48" stroke-width="0.8"/><line x1="181.93" y1="217.36" x2="121.28" y2="277.49" stroke="#4a4a4a" stroke-opacity="0.77" stroke-width="0.8"/><line x1="121.28" y1="277.49" x2="60.64" y2="337.61" stroke="#4a4a4a" stroke-opacity="1.00" stroke-width="0.8"/><line x1="60.64" y1="337.61" x2="0.00" y2="397.73" stroke="#4a4a4a" stroke-opacity="1.00" stroke-width="0.8"/><line x1="303.83" y1="99.98" x2="243.07" y2="162.97" stroke="#4a4a4a" stroke-opacity="0.21" stroke-width="0.8"/><line x1="243.07" y1="162.97" x2="182.30" y2="225.95" stroke="#4a4a4a" stroke-opacity="0.52" stroke-width="0.8"/><line x1="182.30" y1="225.95" x2="121.53" y2="288.93" stroke="#4a4a4a" stroke-opacity="0.82" stroke-width="0.8"/><line x1="121.53" y1="288.93" x2="60.77" y2="351.92" stroke="#4a4a4a" stroke-opacity="1.00" stroke-width="0.8"/><line x1="60.77" y1="351.92" x2="0.00" y2="414.90" stroke="#4a4a4a" stroke-opacity="1.00" stroke-width="0.8"/><line x1="304.45" y1="103.12" x2="243.56" y2="169.23" stroke="#4a4a4a" stroke-opacity="0.23" stroke-width="0.8"/><line x1="243.56" y1="169.23" x2="182.67" y2="235.35" stroke="#4a4a4a" stroke-opacity="0.55" stroke-width="0.8"/><line x1="182.67" y1="235.35" x2="121.78" y2="301.47" stroke="#4a4a4a" stroke-opacity="0.88" stroke-width="0.8"/><line x1="121.78" y1="301.47" x2="60.89" y2="367.59" stroke="#4a4a4a" stroke-opacity="1.00" stroke-width="0.8"/><line x1="60.89" y1="367.59" x2="0.00" y2="433.70" stroke="#4a4a4a" stroke-opacity="1.00" stroke-width="0.8"/><line x1="366.09" y1="37.00" x2="305.07" y2="106.56" stroke="#555555" stroke-opacity="0.15" stroke-width="0.8"/><line x1="305.07" y1="106.56" x2="244.06" y2="176.13" stroke="#555555" stroke-opacity="0.38" stroke-width="0.8"/><line x1="244.06" y1="176.13" x2="183.04" y2="245.69" stroke="#555555" stroke-opacity="0.60" stroke-width="0.8"/><line x1="183.04" y1="245.69" x2="122.03" y2="315.26" stroke="#555555" stroke-opacity="0.94" stroke-width="0.8"/><line x1="122.03" y1="315.26" x2="61.01" y2="384.82" stroke="#555555" stroke-opacity="1.00" stroke-width="0.8"/><line x1="61.01" y1="384.82" x2="0.00" y2="454.39" stroke="#555555" stroke-opacity="1.00" stroke-width="0.8"/><line x1="308.23" y1="107.33" x2="249.63" y2="177.67" stroke="#4a4a4a" stroke-opacity="0.26" stroke-width="0.8"/><line x1="249.63" y1="177.67" x2="191.02" y2="248.00" stroke="#4a4a4a" stroke-opacity="0.61" stroke-width="0.8"/><line x1="191.02" y1="248.00" x2="132.42" y2="318.33" stroke="#4a4a4a" stroke-opacity="0.95" stroke-width="0.8"/><line x1="132.42" y1="318.33" x2="73.81" y2="388.67" stroke="#4a4a4a" stroke-opacity="1.00" stroke-width="0.8"/><line x1="73.81" y1="388.67" x2="15.21" y2="459.00" stroke="#4a4a4a" stroke-opacity="1.00" stroke-width="0.8"/><line x1="312.06" y1="107.33" x2="256.54" y2="177.67" stroke="#4a4a4a" stroke-opacity="0.26" stroke-width="0.8"/><line x1="256.54" y1="177.67" x2="201.02" y2="248.00" stroke="#4a4a4a" stroke-opacity="0.61" stroke-width="0.8"/><line x1="201.02" y1="248.00" x2="145.50" y2="318.33" stroke="#4a4a4a" stroke-opacity="0.95" stroke-width="0.8"/><line x1="145.50" y1="318.33" x2="89.98" y2="388.67" stroke="#4a4a4a" stroke-opacity="1.00" stroke-width="0.8"/><line x1="89.98" y1="388.67" x2="34.46" y2="459.00" stroke="#4a4a4a" stroke-opacity="1.00" stroke-width="0.8"/><line x1="315.89" y1="107.33" x2="263.45" y2="177.67" stroke="#4a4a4a" stroke-opacity="0.26" stroke-width="0.8"/><line x1="263.45" y1="177.67" x2="211.02" y2="248.00" stroke="#4a4a4a" stroke-opacity="0.61" stroke-width="0.8"/><line x1="211.02" y1="248.00" x2="158.58" y2="318.33" stroke="#4a4a4a" stroke-opacity="0.95" stroke-width="0.8"/><line x1="158.58" y1="318.33" x2="106.15" y2="388.67" stroke="#4a4a4a" stroke-opacity="1.00" stroke-width="0.8"/><line x1="106.15" y1="388.67" x2="53.71" y2="459.00" stroke="#4a4a4a" stroke-opacity="1.00" stroke-width="0.8"/><line x1="319.72" y1="107.33" x2="270.37" y2="177.67" stroke="#4a4a4a" stroke-opacity="0.26" stroke-width="0.8"/><line x1="270.37" y1="177.67" x2="221.02" y2="248.00" stroke="#4a4a4a" stroke-opacity="0.61" stroke-width="0.8"/><line x1="221.02" y1="248.00" x2="171.67" y2="318.33" stroke="#4a4a4a" stroke-opacity="0.95" stroke-width="0.8"/><line x1="171.67" y1="318.33" x2="122.32" y2="388.67" stroke="#4a4a4a" stroke-opacity="1.00" stroke-width="0.8"/><line x1="122.32" y1="388.67" x2="72.96" y2="459.00" stroke="#4a4a4a" stroke-opacity="1.00" stroke-width="0.8"/><line x1="323.55" y1="107.33" x2="277.28" y2="177.67" stroke="#4a4a4a" stroke-opacity="0.26" stroke-width="0.8"/><line x1="277.28" y1="177.67" x2="231.02" y2="248.00" stroke="#4a4a4a" stroke-opacity="0.61" stroke-width="0.8"/><line x1="231.02" y1="248.00" x2="184.75" y2="318.33" stroke="#4a4a4a" stroke-opacity="0.95" stroke-width="0.8"/><line x1="184.75" y1="318.33" x2="138.48" y2="388.67" stroke="#4a4a4a" stroke-opacity="1.00" stroke-width="0.8"/><line x1="138.48" y1="388.67" x2="92.22" y2="459.00" stroke="#4a4a4a" stroke-opacity="1.00" stroke-width="0.8"/><line x1="327.38" y1="107.33" x2="284.20" y2="177.67" stroke="#4a4a4a" stroke-opacity="0.26" stroke-width="0.8"/><line x1="284.20" y1="177.67" x2="241.02" y2="248.00" stroke="#4a4a4a" stroke-opacity="0.61" stroke-width="0.8"/><line x1="241.02" y1="248.00" x2="197.83" y2="318.33" stroke="#4a4a4a" stroke-opacity="0.95" stroke-width="0.8"/><line x1="197.83" y1="318.33" x2="154.65" y2="388.67" stroke="#4a4a4a" stroke-opacity="1.00" stroke-width="0.8"/><line x1="154.65" y1="388.67" x2="111.47" y2="459.00" stroke="#4a4a4a" stroke-opacity="1.00" stroke-width="0.8"/><line x1="331.21" y1="107.33" x2="291.11" y2="177.67" stroke="#4a4a4a" stroke-opacity="0.26" stroke-width="0.8"/><line x1="291.11" y1="177.67" x2="251.01" y2="248.00" stroke="#4a4a4a" stroke-opacity="0.61" stroke-width="0.8"/><line x1="251.01" y1="248.00" x2="210.92" y2="318.33" stroke="#4a4a4a" stroke-opacity="0.95" stroke-width="0.8"/><line x1="210.92" y1="318.33" x2="170.82" y2="388.67" stroke="#4a4a4a" stroke-opacity="1.00" stroke-width="0.8"/><line x1="170.82" y1="388.67" x2="130.72" y2="459.00" stroke="#4a4a4a" stroke-opacity="1.00" stroke-width="0.8"/><line x1="335.04" y1="107.33" x2="298.03" y2="177.67" stroke="#4a4a4a" stroke-opacity="0.26" stroke-width="0.8"/><line x1="298.03" y1="177.67" x2="261.01" y2="248.00" stroke="#4a4a4a" stroke-opacity="0.61" stroke-width="0.8"/><line x1="261.01" y1="248.00" x2="224.00" y2="318.33" stroke="#4a4a4a" stroke-opacity="0.95" stroke-width="0.8"/><line x1="224.00" y1="318.33" x2="186.99" y2="388.67" stroke="#4a4a4a" stroke-opacity="1.00" stroke-width="0.8"/><line x1="186.99" y1="388.67" x2="149.97" y2="459.00" stroke="#4a4a4a" stroke-opacity="1.00" stroke-width="0.8"/><line x1="338.87" y1="107.33" x2="304.94" y2="177.67" stroke="#4a4a4a" stroke-opacity="0.26" stroke-width="0.8"/><line x1="304.94" y1="177.67" x2="271.01" y2="248.00" stroke="#4a4a4a" stroke-opacity="0.61" stroke-width="0.8"/><line x1="271.01" y1="248.00" x2="237.08" y2="318.33" stroke="#4a4a4a" stroke-opacity="0.95" stroke-width="0.8"/><line x1="237.08" y1="318.33" x2="203.15" y2="388.67" stroke="#4a4a4a" stroke-opacity="1.00" stroke-width="0.8"/><line x1="203.15" y1="388.67" x2="169.23" y2="459.00" stroke="#4a4a4a" stroke-opacity="1.00" stroke-width="0.8"/><line x1="373.54" y1="37.00" x2="342.70" y2="107.33" stroke="#555555" stroke-opacity="0.15" stroke-width="0.8"/><line x1="342.70" y1="107.33" x2="311.86" y2="177.67" stroke="#555555" stroke-opacity="0.38" stroke-width="0.8"/><line x1="311.86" y1="177.67" x2="281.01" y2="248.00" stroke="#555555" stroke-opacity="0.61" stroke-width="0.8"/><line x1="281.01" y1="248.00" x2="250.17" y2="318.33" stroke="#555555" stroke-opacity="0.95" stroke-width="0.8"/><line x1="250.17" y1="318.33" x2="219.32" y2="388.67" stroke="#555555" stroke-opacity="1.00" stroke-width="0.8"/><line x1="219.32" y1="388.67" x2="188.48" y2="459.00" stroke="#555555" stroke-opacity="1.00" stroke-width="0.8"/><line x1="346.53" y1="107.33" x2="318.77" y2="177.67" stroke="#4a4a4a" stroke-opacity="0.26" stroke-width="0.8"/><line x1="318.77" y1="177.67" x2="291.01" y2="248.00" stroke="#4a4a4a" stroke-opacity="0.61" stroke-width="0.8"/><line x1="291.01" y1="248.00" x2="263.25" y2="318.33" stroke="#4a4a4a" stroke-opacity="0.95" stroke-width="0.8"/><line x1="263.25" y1="318.33" x2="235.49" y2="388.67" stroke="#4a4a4a" stroke-opacity="1.00" stroke-width="0.8"/><line x1="235.49" y1="388.67" x2="207.73" y2="459.00" stroke="#4a4a4a" stroke-opacity="1.00" stroke-width="0.8"/><line x1="350.36" y1="107.33" x2="325.68" y2="177.67" stroke="#4a4a4a" stroke-opacity="0.26" stroke-width="0.8"/><line x1="325.68" y1="177.67" x2="301.01" y2="248.00" stroke="#4a4a4a" stroke-opacity="0.61" stroke-width="0.8"/><line x1="301.01" y1="248.00" x2="276.33" y2="318.33" stroke="#4a4a4a" stroke-opacity="0.95" stroke-width="0.8"/><line x1="276.33" y1="318.33" x2="251.66" y2="388.67" stroke="#4a4a4a" stroke-opacity="1.00" stroke-width="0.8"/><line x1="251.66" y1="388.67" x2="226.98" y2="459.00" stroke="#4a4a4a" stroke-opacity="1.00" stroke-width="0.8"/><line x1="354.19" y1="107.33" x2="332.60" y2="177.67" stroke="#4a4a4a" stroke-opacity="0.26" stroke-width="0.8"/><line x1="332.60" y1="177.67" x2="311.01" y2="248.00" stroke="#4a4a4a" stroke-opacity="0.61" stroke-width="0.8"/><line x1="311.01" y1="248.00" x2="289.42" y2="318.33" stroke="#4a4a4a" stroke-opacity="0.95" stroke-width="0.8"/><line x1="289.42" y1="318.33" x2="267.83" y2="388.67" stroke="#4a4a4a" stroke-opacity="1.00" stroke-width="0.8"/><line x1="267.83" y1="388.67" x2="246.23" y2="459.00" stroke="#4a4a4a" stroke-opacity="1.00" stroke-width="0.8"/><line x1="358.02" y1="107.33" x2="339.51" y2="177.67" stroke="#4a4a4a" stroke-opacity="0.26" stroke-width="0.8"/><line x1="339.51" y1="177.67" x2="321.01" y2="248.00" stroke="#4a4a4a" stroke-opacity="0.61" stroke-width="0.8"/><line x1="321.01" y1="248.00" x2="302.50" y2="318.33" stroke="#4a4a4a" stroke-opacity="0.95" stroke-width="0.8"/><line x1="302.50" y1="318.33" x2="283.99" y2="388.67" stroke="#4a4a4a" stroke-opacity="1.00" stroke-width="0.8"/><line x1="283.99" y1="388.67" x2="265.49" y2="459.00" stroke="#4a4a4a" stroke-opacity="1.00" stroke-width="0.8"/><line x1="361.85" y1="107.33" x2="346.43" y2="177.67" stroke="#4a4a4a" stroke-opacity="0.26" stroke-width="0.8"/><line x1="346.43" y1="177.67" x2="331.01" y2="248.00" stroke="#4a4a4a" stroke-opacity="0.61" stroke-width="0.8"/><line x1="331.01" y1="248.00" x2="315.58" y2="318.33" stroke="#4a4a4a" stroke-opacity="0.95" stroke-width="0.8"/><line x1="315.58" y1="318.33" x2="300.16" y2="388.67" stroke="#4a4a4a" stroke-opacity="1.00" stroke-width="0.8"/><line x1="300.16" y1="388.67" x2="284.74" y2="459.00" stroke="#4a4a4a" stroke-opacity="1.00" stroke-width="0.8"/><line x1="365.68" y1="107.33" x2="353.34" y2="177.67" stroke="#4a4a4a" stroke-opacity="0.26" stroke-width="0.8"/><line x1="353.34" y1="177.67" x2="341.00" y2="248.00" stroke="#4a4a4a" stroke-opacity="0.61" stroke-width="0.8"/><line x1="341.00" y1="248.00" x2="328.67" y2="318.33" stroke="#4a4a4a" stroke-opacity="0.95" stroke-width="0.8"/><line x1="328.67" y1="318.33" x2="316.33" y2="388.67" stroke="#4a4a4a" stroke-opacity="1.00" stroke-width="0.8"/><line x1="316.33" y1="388.67" x2="303.99" y2="459.00" stroke="#4a4a4a" stroke-opacity="1.00" stroke-width="0.8"/><line x1="369.51" y1="107.33" x2="360.26" y2="177.67" stroke="#4a4a4a" stroke-opacity="0.26" stroke-width="0.8"/><line x1="360.26" y1="177.67" x2="351.00" y2="248.00" stroke="#4a4a4a" stroke-opacity="0.61" stroke-width="0.8"/><line x1="351.00" y1="248.00" x2="341.75" y2="318.33" stroke="#4a4a4a" stroke-opacity="0.95" stroke-width="0.8"/><line x1="341.75" y1="318.33" x2="332.50" y2="388.67" stroke="#4a4a4a" stroke-opacity="1.00" stroke-width="0.8"/><line x1="332.50" y1="388.67" x2="323.24" y2="459.00" stroke="#4a4a4a" stroke-opacity="1.00" stroke-width="0.8"/><line x1="373.34" y1="107.33" x2="367.17" y2="177.67" stroke="#4a4a4a" stroke-opacity="0.26" stroke-width="0.8"/><line x1="367.17" y1="177.67" x2="361.00" y2="248.00" stroke="#4a4a4a" stroke-opacity="0.61" stroke-width="0.8"/><line x1="361.00" y1="248.00" x2="354.83" y2="318.33" stroke="#4a4a4a" stroke-opacity="0.95" stroke-width="0.8"/><line x1="354.83" y1="318.33" x2="348.66" y2="388.67" stroke="#4a4a4a" stroke-opacity="1.00" stroke-width="0.8"/><line x1="348.66" y1="388.67" x2="342.50" y2="459.00" stroke="#4a4a4a" stroke-opacity="1.00" stroke-width="0.8"/><line x1="377.17" y1="107.33" x2="374.09" y2="177.67" stroke="#4a4a4a" stroke-opacity="0.26" stroke-width="0.8"/><line x1="374.09" y1="177.67" x2="371.00" y2="248.00" stroke="#4a4a4a" stroke-opacity="0.61" stroke-width="0.8"/><line x1="371.00" y1="248.00" x2="367.92" y2="318.33" stroke="#4a4a4a" stroke-opacity="0.95" stroke-width="0.8"/><line x1="367.92" y1="318.33" x2="364.83" y2="388.67" stroke="#4a4a4a" stroke-opacity="1.00" stroke-width="0.8"/><line x1="364.83" y1="388.67" x2="361.75" y2="459.00" stroke="#4a4a4a" stroke-opacity="1.00" stroke-width="0.8"/><line x1="384.83" y1="107.33" x2="387.91" y2="177.67" stroke="#4a4a4a" stroke-opacity="0.26" stroke-width="0.8"/><line x1="387.91" y1="177.67" x2="391.00" y2="248.00" stroke="#4a4a4a" stroke-opacity="0.61" stroke-width="0.8"/><line x1="391.00" y1="248.00" x2="394.08" y2="318.33" stroke="#4a4a4a" stroke-opacity="0.95" stroke-width="0.8"/><line x1="394.08" y1="318.33" x2="397.17" y2="388.67" stroke="#4a4a4a" stroke-opacity="1.00" stroke-width="0.8"/><line x1="397.17" y1="388.67" x2="400.25" y2="459.00" stroke="#4a4a4a" stroke-opacity="1.00" stroke-width="0.8"/><line x1="388.66" y1="107.33" x2="394.83" y2="177.67" stroke="#4a4a4a" stroke-opacity="0.26" stroke-width="0.8"/><line x1="394.83" y1="177.67" x2="401.00" y2="248.00" stroke="#4a4a4a" stroke-opacity="0.61" stroke-width="0.8"/><line x1="401.00" y1="248.00" x2="407.17" y2="318.33" stroke="#4a4a4a" stroke-opacity="0.95" stroke-width="0.8"/><line x1="407.17" y1="318.33" x2="413.34" y2="388.67" stroke="#4a4a4a" stroke-opacity="1.00" stroke-width="0.8"/><line x1="413.34" y1="388.67" x2="419.50" y2="459.00" stroke="#4a4a4a" stroke-opacity="1.00" stroke-width="0.8"/><line x1="392.49" y1="107.33" x2="401.74" y2="177.67" stroke="#4a4a4a" stroke-opacity="0.26" stroke-width="0.8"/><line x1="401.74" y1="177.67" x2="411.00" y2="248.00" stroke="#4a4a4a" stroke-opacity="0.61" stroke-width="0.8"/><line x1="411.00" y1="248.00" x2="420.25" y2="318.33" stroke="#4a4a4a" stroke-opacity="0.95" stroke-width="0.8"/><line x1="420.25" y1="318.33" x2="429.50" y2="388.67" stroke="#4a4a4a" stroke-opacity="1.00" stroke-width="0.8"/><line x1="429.50" y1="388.67" x2="438.76" y2="459.00" stroke="#4a4a4a" stroke-opacity="1.00" stroke-width="0.8"/><line x1="396.32" y1="107.33" x2="408.66" y2="177.67" stroke="#4a4a4a" stroke-opacity="0.26" stroke-width="0.8"/><line x1="408.66" y1="177.67" x2="421.00" y2="248.00" stroke="#4a4a4a" stroke-opacity="0.61" stroke-width="0.8"/><line x1="421.00" y1="248.00" x2="433.33" y2="318.33" stroke="#4a4a4a" stroke-opacity="0.95" stroke-width="0.8"/><line x1="433.33" y1="318.33" x2="445.67" y2="388.67" stroke="#4a4a4a" stroke-opacity="1.00" stroke-width="0.8"/><line x1="445.67" y1="388.67" x2="458.01" y2="459.00" stroke="#4a4a4a" stroke-opacity="1.00" stroke-width="0.8"/><line x1="400.15" y1="107.33" x2="415.57" y2="177.67" stroke="#4a4a4a" stroke-opacity="0.26" stroke-width="0.8"/><line x1="415.57" y1="177.67" x2="430.99" y2="248.00" stroke="#4a4a4a" stroke-opacity="0.61" stroke-width="0.8"/><line x1="430.99" y1="248.00" x2="446.42" y2="318.33" stroke="#4a4a4a" stroke-opacity="0.95" stroke-width="0.8"/><line x1="446.42" y1="318.33" x2="461.84" y2="388.67" stroke="#4a4a4a" stroke-opacity="1.00" stroke-width="0.8"/><line x1="461.84" y1="388.67" x2="477.26" y2="459.00" stroke="#4a4a4a" stroke-opacity="1.00" stroke-width="0.8"/><line x1="403.98" y1="107.33" x2="422.49" y2="177.67" stroke="#4a4a4a" stroke-opacity="0.26" stroke-width="0.8"/><line x1="422.49" y1="177.67" x2="440.99" y2="248.00" stroke="#4a4a4a" stroke-opacity="0.61" stroke-width="0.8"/><line x1="440.99" y1="248.00" x2="459.50" y2="318.33" stroke="#4a4a4a" stroke-opacity="0.95" stroke-width="0.8"/><line x1="459.50" y1="318.33" x2="478.01" y2="388.67" stroke="#4a4a4a" stroke-opacity="1.00" stroke-width="0.8"/><line x1="478.01" y1="388.67" x2="496.51" y2="459.00" stroke="#4a4a4a" stroke-opacity="1.00" stroke-width="0.8"/><line x1="407.81" y1="107.33" x2="429.40" y2="177.67" stroke="#4a4a4a" stroke-opacity="0.26" stroke-width="0.8"/><line x1="429.40" y1="177.67" x2="450.99" y2="248.00" stroke="#4a4a4a" stroke-opacity="0.61" stroke-width="0.8"/><line x1="450.99" y1="248.00" x2="472.58" y2="318.33" stroke="#4a4a4a" stroke-opacity="0.95" stroke-width="0.8"/><line x1="472.58" y1="318.33" x2="494.17" y2="388.67" stroke="#4a4a4a" stroke-opacity="1.00" stroke-width="0.8"/><line x1="494.17" y1="388.67" x2="515.77" y2="459.00" stroke="#4a4a4a" stroke-opacity="1.00" stroke-width="0.8"/><line x1="411.64" y1="107.33" x2="436.32" y2="177.67" stroke="#4a4a4a" stroke-opacity="0.26" stroke-width="0.8"/><line x1="436.32" y1="177.67" x2="460.99" y2="248.00" stroke="#4a4a4a" stroke-opacity="0.61" stroke-width="0.8"/><line x1="460.99" y1="248.00" x2="485.67" y2="318.33" stroke="#4a4a4a" stroke-opacity="0.95" stroke-width="0.8"/><line x1="485.67" y1="318.33" x2="510.34" y2="388.67" stroke="#4a4a4a" stroke-opacity="1.00" stroke-width="0.8"/><line x1="510.34" y1="388.67" x2="535.02" y2="459.00" stroke="#4a4a4a" stroke-opacity="1.00" stroke-width="0.8"/><line x1="415.47" y1="107.33" x2="443.23" y2="177.67" stroke="#4a4a4a" stroke-opacity="0.26" stroke-width="0.8"/><line x1="443.23" y1="177.67" x2="470.99" y2="248.00" stroke="#4a4a4a" stroke-opacity="0.61" stroke-width="0.8"/><line x1="470.99" y1="248.00" x2="498.75" y2="318.33" stroke="#4a4a4a" stroke-opacity="0.95" stroke-width="0.8"/><line x1="498.75" y1="318.33" x2="526.51" y2="388.67" stroke="#4a4a4a" stroke-opacity="1.00" stroke-width="0.8"/><line x1="526.51" y1="388.67" x2="554.27" y2="459.00" stroke="#4a4a4a" stroke-opacity="1.00" stroke-width="0.8"/><line x1="388.46" y1="37.00" x2="419.30" y2="107.33" stroke="#555555" stroke-opacity="0.15" stroke-width="0.8"/><line x1="419.30" y1="107.33" x2="450.14" y2="177.67" stroke="#555555" stroke-opacity="0.38" stroke-width="0.8"/><line x1="450.14" y1="177.67" x2="480.99" y2="248.00" stroke="#555555" stroke-opacity="0.61" stroke-width="0.8"/><line x1="480.99" y1="248.00" x2="511.83" y2="318.33" stroke="#555555" stroke-opacity="0.95" stroke-width="0.8"/><line x1="511.83" y1="318.33" x2="542.68" y2="388.67" stroke="#555555" stroke-opacity="1.00" stroke-width="0.8"/><line x1="542.68" y1="388.67" x2="573.52" y2="459.00" stroke="#555555" stroke-opacity="1.00" stroke-width="0.8"/><line x1="423.13" y1="107.33" x2="457.06" y2="177.67" stroke="#4a4a4a" stroke-opacity="0.26" stroke-width="0.8"/><line x1="457.06" y1="177.67" x2="490.99" y2="248.00" stroke="#4a4a4a" stroke-opacity="0.61" stroke-width="0.8"/><line x1="490.99" y1="248.00" x2="524.92" y2="318.33" stroke="#4a4a4a" stroke-opacity="0.95" stroke-width="0.8"/><line x1="524.92" y1="318.33" x2="558.85" y2="388.67" stroke="#4a4a4a" stroke-opacity="1.00" stroke-width="0.8"/><line x1="558.85" y1="388.67" x2="592.77" y2="459.00" stroke="#4a4a4a" stroke-opacity="1.00" stroke-width="0.8"/><line x1="426.96" y1="107.33" x2="463.97" y2="177.67" stroke="#4a4a4a" stroke-opacity="0.26" stroke-width="0.8"/><line x1="463.97" y1="177.67" x2="500.99" y2="248.00" stroke="#4a4a4a" stroke-opacity="0.61" stroke-width="0.8"/><line x1="500.99" y1="248.00" x2="538.00" y2="318.33" stroke="#4a4a4a" stroke-opacity="0.95" stroke-width="0.8"/><line x1="538.00" y1="318.33" x2="575.01" y2="388.67" stroke="#4a4a4a" stroke-opacity="1.00" stroke-width="0.8"/><line x1="575.01" y1="388.67" x2="612.03" y2="459.00" stroke="#4a4a4a" stroke-opacity="1.00" stroke-width="0.8"/><line x1="430.79" y1="107.33" x2="470.89" y2="177.67" stroke="#4a4a4a" stroke-opacity="0.26" stroke-width="0.8"/><line x1="470.89" y1="177.67" x2="510.99" y2="248.00" stroke="#4a4a4a" stroke-opacity="0.61" stroke-width="0.8"/><line x1="510.99" y1="248.00" x2="551.08" y2="318.33" stroke="#4a4a4a" stroke-opacity="0.95" stroke-width="0.8"/><line x1="551.08" y1="318.33" x2="591.18" y2="388.67" stroke="#4a4a4a" stroke-opacity="1.00" stroke-width="0.8"/><line x1="591.18" y1="388.67" x2="631.28" y2="459.00" stroke="#4a4a4a" stroke-opacity="1.00" stroke-width="0.8"/><line x1="434.62" y1="107.33" x2="477.80" y2="177.67" stroke="#4a4a4a" stroke-opacity="0.26" stroke-width="0.8"/><line x1="477.80" y1="177.67" x2="520.98" y2="248.00" stroke="#4a4a4a" stroke-opacity="0.61" stroke-width="0.8"/><line x1="520.98" y1="248.00" x2="564.17" y2="318.33" stroke="#4a4a4a" stroke-opacity="0.95" stroke-width="0.8"/><line x1="564.17" y1="318.33" x2="607.35" y2="388.67" stroke="#4a4a4a" stroke-opacity="1.00" stroke-width="0.8"/><line x1="607.35" y1="388.67" x2="650.53" y2="459.00" stroke="#4a4a4a" stroke-opacity="1.00" stroke-width="0.8"/><line x1="438.45" y1="107.33" x2="484.72" y2="177.67" stroke="#4a4a4a" stroke-opacity="0.26" stroke-width="0.8"/><line x1="484.72" y1="177.67" x2="530.98" y2="248.00" stroke="#4a4a4a" stroke-opacity="0.61" stroke-width="0.8"/><line x1="530.98" y1="248.00" x2="577.25" y2="318.33" stroke="#4a4a4a" stroke-opacity="0.95" stroke-width="0.8"/><line x1="577.25" y1="318.33" x2="623.52" y2="388.67" stroke="#4a4a4a" stroke-opacity="1.00" stroke-width="0.8"/><line x1="623.52" y1="388.67" x2="669.78" y2="459.00" stroke="#4a4a4a" stroke-opacity="1.00" stroke-width="0.8"/><line x1="442.28" y1="107.33" x2="491.63" y2="177.67" stroke="#4a4a4a" stroke-opacity="0.26" stroke-width="0.8"/><line x1="491.63" y1="177.67" x2="540.98" y2="248.00" stroke="#4a4a4a" stroke-opacity="0.61" stroke-width="0.8"/><line x1="540.98" y1="248.00" x2="590.33" y2="318.33" stroke="#4a4a4a" stroke-opacity="0.95" stroke-width="0.8"/><line x1="590.33" y1="318.33" x2="639.68" y2="388.67" stroke="#4a4a4a" stroke-opacity="1.00" stroke-width="0.8"/><line x1="639.68" y1="388.67" x2="689.04" y2="459.00" stroke="#4a4a4a" stroke-opacity="1.00" stroke-width="0.8"/><line x1="446.11" y1="107.33" x2="498.55" y2="177.67" stroke="#4a4a4a" stroke-opacity="0.26" stroke-width="0.8"/><line x1="498.55" y1="177.67" x2="550.98" y2="248.00" stroke="#4a4a4a" stroke-opacity="0.61" stroke-width="0.8"/><line x1="550.98" y1="248.00" x2="603.42" y2="318.33" stroke="#4a4a4a" stroke-opacity="0.95" stroke-width="0.8"/><line x1="603.42" y1="318.33" x2="655.85" y2="388.67" stroke="#4a4a4a" stroke-opacity="1.00" stroke-width="0.8"/><line x1="655.85" y1="388.67" x2="708.29" y2="459.00" stroke="#4a4a4a" stroke-opacity="1.00" stroke-width="0.8"/><line x1="449.94" y1="107.33" x2="505.46" y2="177.67" stroke="#4a4a4a" stroke-opacity="0.26" stroke-width="0.8"/><line x1="505.46" y1="177.67" x2="560.98" y2="248.00" stroke="#4a4a4a" stroke-opacity="0.61" stroke-width="0.8"/><line x1="560.98" y1="248.00" x2="616.50" y2="318.33" stroke="#4a4a4a" stroke-opacity="0.95" stroke-width="0.8"/><line x1="616.50" y1="318.33" x2="672.02" y2="388.67" stroke="#4a4a4a" stroke-opacity="1.00" stroke-width="0.8"/><line x1="672.02" y1="388.67" x2="727.54" y2="459.00" stroke="#4a4a4a" stroke-opacity="1.00" stroke-width="0.8"/><line x1="453.77" y1="107.33" x2="512.37" y2="177.67" stroke="#4a4a4a" stroke-opacity="0.26" stroke-width="0.8"/><line x1="512.37" y1="177.67" x2="570.98" y2="248.00" stroke="#4a4a4a" stroke-opacity="0.61" stroke-width="0.8"/><line x1="570.98" y1="248.00" x2="629.58" y2="318.33" stroke="#4a4a4a" stroke-opacity="0.95" stroke-width="0.8"/><line x1="629.58" y1="318.33" x2="688.19" y2="388.67" stroke="#4a4a4a" stroke-opacity="1.00" stroke-width="0.8"/><line x1="688.19" y1="388.67" x2="746.79" y2="459.00" stroke="#4a4a4a" stroke-opacity="1.00" stroke-width="0.8"/><line x1="395.91" y1="37.00" x2="457.60" y2="107.33" stroke="#555555" stroke-opacity="0.15" stroke-width="0.8"/><line x1="457.60" y1="107.33" x2="519.29" y2="177.67" stroke="#555555" stroke-opacity="0.38" stroke-width="0.8"/><line x1="519.29" y1="177.67" x2="580.98" y2="248.00" stroke="#555555" stroke-opacity="0.61" stroke-width="0.8"/><line x1="580.98" y1="248.00" x2="642.67" y2="318.33" stroke="#555555" stroke-opacity="0.95" stroke-width="0.8"/><line x1="642.67" y1="318.33" x2="704.36" y2="388.67" stroke="#555555" stroke-opacity="1.00" stroke-width="0.8"/><line x1="704.36" y1="388.67" x2="766.04" y2="459.00" stroke="#555555" stroke-opacity="1.00" stroke-width="0.8"/><line x1="460.05" y1="105.83" x2="523.44" y2="174.66" stroke="#4a4a4a" stroke-opacity="0.25" stroke-width="0.8"/><line x1="523.44" y1="174.66" x2="586.83" y2="243.50" stroke="#4a4a4a" stroke-opacity="0.59" stroke-width="0.8"/><line x1="586.83" y1="243.50" x2="650.22" y2="312.33" stroke="#4a4a4a" stroke-opacity="0.92" stroke-width="0.8"/><line x1="650.22" y1="312.33" x2="713.61" y2="381.16" stroke="#4a4a4a" stroke-opacity="1.00" stroke-width="0.8"/><line x1="713.61" y1="381.16" x2="777.00" y2="449.99" stroke="#4a4a4a" stroke-opacity="1.00" stroke-width="0.8"/><line x1="460.67" y1="102.57" x2="523.93" y2="168.15" stroke="#4a4a4a" stroke-opacity="0.23" stroke-width="0.8"/><line x1="523.93" y1="168.15" x2="587.20" y2="233.72" stroke="#4a4a4a" stroke-opacity="0.55" stroke-width="0.8"/><line x1="587.20" y1="233.72" x2="650.47" y2="299.30" stroke="#4a4a4a" stroke-opacity="0.87" stroke-width="0.8"/><line x1="650.47" y1="299.30" x2="713.73" y2="364.87" stroke="#4a4a4a" stroke-opacity="1.00" stroke-width="0.8"/><line x1="713.73" y1="364.87" x2="777.00" y2="430.45" stroke="#4a4a4a" stroke-opacity="1.00" stroke-width="0.8"/><line x1="461.29" y1="99.60" x2="524.43" y2="162.20" stroke="#4a4a4a" stroke-opacity="0.21" stroke-width="0.8"/><line x1="524.43" y1="162.20" x2="587.57" y2="224.80" stroke="#4a4a4a" stroke-opacity="0.51" stroke-width="0.8"/><line x1="587.57" y1="224.80" x2="650.72" y2="287.40" stroke="#4a4a4a" stroke-opacity="0.82" stroke-width="0.8"/><line x1="650.72" y1="287.40" x2="713.86" y2="350.00" stroke="#4a4a4a" stroke-opacity="1.00" stroke-width="0.8"/><line x1="713.86" y1="350.00" x2="777.00" y2="412.60" stroke="#4a4a4a" stroke-opacity="1.00" stroke-width="0.8"/><line x1="461.91" y1="96.87" x2="524.93" y2="156.75" stroke="#4a4a4a" stroke-opacity="0.19" stroke-width="0.8"/><line x1="524.93" y1="156.75" x2="587.95" y2="216.62" stroke="#4a4a4a" stroke-opacity="0.48" stroke-width="0.8"/><line x1="587.95" y1="216.62" x2="650.96" y2="276.49" stroke="#4a4a4a" stroke-opacity="0.77" stroke-width="0.8"/><line x1="650.96" y1="276.49" x2="713.98" y2="336.37" stroke="#4a4a4a" stroke-opacity="1.00" stroke-width="0.8"/><line x1="713.98" y1="336.37" x2="777.00" y2="396.24" stroke="#4a4a4a" stroke-opacity="1.00" stroke-width="0.8"/><line x1="462.53" y1="94.37" x2="525.43" y2="151.73" stroke="#4a4a4a" stroke-opacity="0.17" stroke-width="0.8"/><line x1="525.43" y1="151.73" x2="588.32" y2="209.10" stroke="#4a4a4a" stroke-opacity="0.45" stroke-width="0.8"/><line x1="588.32" y1="209.10" x2="651.21" y2="266.46" stroke="#4a4a4a" stroke-opacity="0.73" stroke-width="0.8"/><line x1="651.21" y1="266.46" x2="714.11" y2="323.83" stroke="#4a4a4a" stroke-opacity="1.00" stroke-width="0.8"/><line x1="714.11" y1="323.83" x2="777.00" y2="381.19" stroke="#4a4a4a" stroke-opacity="1.00" stroke-width="0.8"/><line x1="463.15" y1="92.05" x2="525.92" y2="147.10" stroke="#4a4a4a" stroke-opacity="0.15" stroke-width="0.8"/><line x1="525.92" y1="147.10" x2="588.69" y2="202.15" stroke="#4a4a4a" stroke-opacity="0.42" stroke-width="0.8"/><line x1="588.69" y1="202.15" x2="651.46" y2="257.20" stroke="#4a4a4a" stroke-opacity="0.69" stroke-width="0.8"/><line x1="651.46" y1="257.20" x2="714.23" y2="312.25" stroke="#4a4a4a" stroke-opacity="0.96" stroke-width="0.8"/><line x1="714.23" y1="312.25" x2="777.00" y2="367.30" stroke="#4a4a4a" stroke-opacity="1.00" stroke-width="0.8"/><line x1="463.77" y1="89.91" x2="526.42" y2="142.81" stroke="#4a4a4a" stroke-opacity="0.14" stroke-width="0.8"/><line x1="526.42" y1="142.81" x2="589.06" y2="195.72" stroke="#4a4a4a" stroke-opacity="0.39" stroke-width="0.8"/><line x1="589.06" y1="195.72" x2="651.71" y2="248.62" stroke="#4a4a4a" stroke-opacity="0.65" stroke-width="0.8"/><line x1="651.71" y1="248.62" x2="714.35" y2="301.53" stroke="#4a4a4a" stroke-opacity="0.91" stroke-width="0.8"/><line x1="714.35" y1="301.53" x2="777.00" y2="354.44" stroke="#4a4a4a" stroke-opacity="1.00" stroke-width="0.8"/><line x1="464.40" y1="87.92" x2="526.92" y2="138.83" stroke="#4a4a4a" stroke-opacity="0.12" stroke-width="0.8"/><line x1="526.92" y1="138.83" x2="589.44" y2="189.75" stroke="#4a4a4a" stroke-opacity="0.37" stroke-width="0.8"/><line x1="589.44" y1="189.75" x2="651.96" y2="240.66" stroke="#4a4a4a" stroke-opacity="0.62" stroke-width="0.8"/><line x1="651.96" y1="240.66" x2="714.48" y2="291.58" stroke="#4a4a4a" stroke-opacity="0.87" stroke-width="0.8"/><line x1="714.48" y1="291.58" x2="777.00" y2="342.49" stroke="#4a4a4a" stroke-opacity="1.00" stroke-width="0.8"/><line x1="465.02" y1="86.06" x2="527.41" y2="135.12" stroke="#4a4a4a" stroke-opacity="0.10" stroke-width="0.8"/><line x1="527.41" y1="135.12" x2="589.81" y2="184.19" stroke="#4a4a4a" stroke-opacity="0.35" stroke-width="0.8"/><line x1="589.81" y1="184.19" x2="652.21" y2="233.25" stroke="#4a4a4a" stroke-opacity="0.59" stroke-width="0.8"/><line x1="652.21" y1="233.25" x2="714.60" y2="282.31" stroke="#4a4a4a" stroke-opacity="0.83" stroke-width="0.8"/><line x1="714.60" y1="282.31" x2="777.00" y2="331.37" stroke="#4a4a4a" stroke-opacity="1.00" stroke-width="0.8"/><line x1="403.37" y1="37.00" x2="465.64" y2="84.33" stroke="#555555" stroke-opacity="0.07" stroke-width="0.8"/><line x1="465.64" y1="84.33" x2="527.91" y2="131.66" stroke="#555555" stroke-opacity="0.34" stroke-width="0.8"/><line x1="527.91" y1="131.66" x2="590.18" y2="179.00" stroke="#555555" stroke-opacity="0.38" stroke-width="0.8"/><line x1="590.18" y1="179.00" x2="652.46" y2="226.33" stroke="#555555" stroke-opacity="0.56" stroke-width="0.8"/><line x1="652.46" y1="226.33" x2="714.73" y2="273.66" stroke="#555555" stroke-opacity="0.79" stroke-width="0.8"/><line x1="714.73" y1="273.66" x2="777.00" y2="320.99" stroke="#555555" stroke-opacity="1.00" stroke-width="0.8"/><line x1="466.26" y1="82.71" x2="528.41" y2="128.43" stroke="#4a4a4a" stroke-opacity="0.07" stroke-width="0.8"/><line x1="528.41" y1="128.43" x2="590.56" y2="174.14" stroke="#4a4a4a" stroke-opacity="0.31" stroke-width="0.8"/><line x1="590.56" y1="174.14" x2="652.70" y2="219.86" stroke="#4a4a4a" stroke-opacity="0.53" stroke-width="0.8"/><line x1="652.70" y1="219.86" x2="714.85" y2="265.57" stroke="#4a4a4a" stroke-opacity="0.75" stroke-width="0.8"/><line x1="714.85" y1="265.57" x2="777.00" y2="311.28" stroke="#4a4a4a" stroke-opacity="0.97" stroke-width="0.8"/><line x1="466.88" y1="81.20" x2="528.90" y2="125.39" stroke="#4a4a4a" stroke-opacity="0.06" stroke-width="0.8"/><line x1="528.90" y1="125.39" x2="590.93" y2="169.59" stroke="#4a4a4a" stroke-opacity="0.29" stroke-width="0.8"/><line x1="590.93" y1="169.59" x2="652.95" y2="213.79" stroke="#4a4a4a" stroke-opacity="0.50" stroke-width="0.8"/><line x1="652.95" y1="213.79" x2="714.98" y2="257.98" stroke="#4a4a4a" stroke-opacity="0.72" stroke-width="0.8"/><line x1="714.98" y1="257.98" x2="777.00" y2="302.18" stroke="#4a4a4a" stroke-opacity="0.93" stroke-width="0.8"/><line x1="467.50" y1="79.77" x2="529.40" y2="122.54" stroke="#4a4a4a" stroke-opacity="0.05" stroke-width="0.8"/><line x1="529.40" y1="122.54" x2="591.30" y2="165.32" stroke="#4a4a4a" stroke-opacity="0.27" stroke-width="0.8"/><line x1="591.30" y1="165.32" x2="653.20" y2="208.09" stroke="#4a4a4a" stroke-opacity="0.48" stroke-width="0.8"/><line x1="653.20" y1="208.09" x2="715.10" y2="250.86" stroke="#4a4a4a" stroke-opacity="0.69" stroke-width="0.8"/><line x1="715.10" y1="250.86" x2="777.00" y2="293.63" stroke="#4a4a4a" stroke-opacity="0.90" stroke-width="0.8"/><line x1="468.12" y1="78.43" x2="529.90" y2="119.86" stroke="#4a4a4a" stroke-opacity="0.04" stroke-width="0.8"/><line x1="529.90" y1="119.86" x2="591.67" y2="161.29" stroke="#4a4a4a" stroke-opacity="0.25" stroke-width="0.8"/><line x1="591.67" y1="161.29" x2="653.45" y2="202.72" stroke="#4a4a4a" stroke-opacity="0.46" stroke-width="0.8"/><line x1="653.45" y1="202.72" x2="715.22" y2="244.15" stroke="#4a4a4a" stroke-opacity="0.66" stroke-width="0.8"/><line x1="715.22" y1="244.15" x2="777.00" y2="285.58" stroke="#4a4a4a" stroke-opacity="0.86" stroke-width="0.8"/><line x1="468.74" y1="77.17" x2="530.40" y2="117.33" stroke="#4a4a4a" stroke-opacity="0.03" stroke-width="0.8"/><line x1="530.40" y1="117.33" x2="592.05" y2="157.50" stroke="#4a4a4a" stroke-opacity="0.24" stroke-width="0.8"/><line x1="592.05" y1="157.50" x2="653.70" y2="197.66" stroke="#4a4a4a" stroke-opacity="0.43" stroke-width="0.8"/><line x1="653.70" y1="197.66" x2="715.35" y2="237.83" stroke="#4a4a4a" stroke-opacity="0.63" stroke-width="0.8"/><line x1="715.35" y1="237.83" x2="777.00" y2="277.99" stroke="#4a4a4a" stroke-opacity="0.83" stroke-width="0.8"/><line x1="469.37" y1="75.97" x2="530.89" y2="114.94" stroke="#4a4a4a" stroke-opacity="0.02" stroke-width="0.8"/><line x1="530.89" y1="114.94" x2="592.42" y2="153.91" stroke="#4a4a4a" stroke-opacity="0.22" stroke-width="0.8"/><line x1="592.42" y1="153.91" x2="653.95" y2="192.89" stroke="#4a4a4a" stroke-opacity="0.41" stroke-width="0.8"/><line x1="653.95" y1="192.89" x2="715.47" y2="231.86" stroke="#4a4a4a" stroke-opacity="0.60" stroke-width="0.8"/><line x1="715.47" y1="231.86" x2="777.00" y2="270.83" stroke="#4a4a4a" stroke-opacity="0.79" stroke-width="0.8"/><line x1="531.39" y1="112.68" x2="592.79" y2="150.52" stroke="#4a4a4a" stroke-opacity="0.21" stroke-width="0.8"/><line x1="592.79" y1="150.52" x2="654.19" y2="188.37" stroke="#4a4a4a" stroke-opacity="0.39" stroke-width="0.8"/><line x1="654.19" y1="188.37" x2="715.60" y2="226.21" stroke="#4a4a4a" stroke-opacity="0.58" stroke-width="0.8"/><line x1="715.60" y1="226.21" x2="777.00" y2="264.05" stroke="#4a4a4a" stroke-opacity="0.76" stroke-width="0.8"/><line x1="531.89" y1="110.54" x2="593.17" y2="147.31" stroke="#4a4a4a" stroke-opacity="0.20" stroke-width="0.8"/><line x1="593.17" y1="147.31" x2="654.44" y2="184.08" stroke="#4a4a4a" stroke-opacity="0.38" stroke-width="0.8"/><line x1="654.44" y1="184.08" x2="715.72" y2="220.86" stroke="#4a4a4a" stroke-opacity="0.56" stroke-width="0.8"/><line x1="715.72" y1="220.86" x2="777.00" y2="257.63" stroke="#4a4a4a" stroke-opacity="0.73" stroke-width="0.8"/><line x1="532.38" y1="108.51" x2="593.54" y2="144.27" stroke="#4a4a4a" stroke-opacity="0.19" stroke-width="0.8"/><line x1="593.54" y1="144.27" x2="654.69" y2="180.02" stroke="#4a4a4a" stroke-opacity="0.36" stroke-width="0.8"/><line x1="654.69" y1="180.02" x2="715.85" y2="215.78" stroke="#4a4a4a" stroke-opacity="0.53" stroke-width="0.8"/><line x1="715.85" y1="215.78" x2="777.00" y2="251.53" stroke="#4a4a4a" stroke-opacity="0.71" stroke-width="0.8"/><line x1="410.82" y1="37.00" x2="471.85" y2="71.79" stroke="#555555" stroke-opacity="0.03" stroke-width="0.8"/><line x1="471.85" y1="71.79" x2="532.88" y2="106.58" stroke="#555555" stroke-opacity="0.24" stroke-width="0.8"/><line x1="532.88" y1="106.58" x2="593.91" y2="141.37" stroke="#555555" stroke-opacity="0.38" stroke-width="0.8"/><line x1="593.91" y1="141.37" x2="654.94" y2="176.16" stroke="#555555" stroke-opacity="0.38" stroke-width="0.8"/><line x1="654.94" y1="176.16" x2="715.97" y2="210.95" stroke="#555555" stroke-opacity="0.51" stroke-width="0.8"/><line x1="715.97" y1="210.95" x2="777.00" y2="245.75" stroke="#555555" stroke-opacity="0.68" stroke-width="0.8"/><line x1="533.38" y1="104.75" x2="594.28" y2="138.62" stroke="#4a4a4a" stroke-opacity="0.16" stroke-width="0.8"/><line x1="594.28" y1="138.62" x2="655.19" y2="172.49" stroke="#4a4a4a" stroke-opacity="0.33" stroke-width="0.8"/><line x1="655.19" y1="172.49" x2="716.09" y2="206.37" stroke="#4a4a4a" stroke-opacity="0.49" stroke-width="0.8"/><line x1="716.09" y1="206.37" x2="777.00" y2="240.24" stroke="#4a4a4a" stroke-opacity="0.66" stroke-width="0.8"/><line x1="533.87" y1="103.00" x2="594.66" y2="136.00" stroke="#4a4a4a" stroke-opacity="0.15" stroke-width="0.8"/><line x1="594.66" y1="136.00" x2="655.44" y2="169.00" stroke="#4a4a4a" stroke-opacity="0.31" stroke-width="0.8"/><line x1="655.44" y1="169.00" x2="716.22" y2="202.00" stroke="#4a4a4a" stroke-opacity="0.47" stroke-width="0.8"/><line x1="716.22" y1="202.00" x2="777.00" y2="235.00" stroke="#4a4a4a" stroke-opacity="0.63" stroke-width="0.8"/><line x1="534.37" y1="101.33" x2="595.03" y2="133.50" stroke="#4a4a4a" stroke-opacity="0.14" stroke-width="0.8"/><line x1="595.03" y1="133.50" x2="655.69" y2="165.66" stroke="#4a4a4a" stroke-opacity="0.30" stroke-width="0.8"/><line x1="655.69" y1="165.66" x2="716.34" y2="197.83" stroke="#4a4a4a" stroke-opacity="0.45" stroke-width="0.8"/><line x1="716.34" y1="197.83" x2="777.00" y2="230.00" stroke="#4a4a4a" stroke-opacity="0.61" stroke-width="0.8"/><line x1="534.87" y1="99.74" x2="595.40" y2="131.11" stroke="#4a4a4a" stroke-opacity="0.13" stroke-width="0.8"/><line x1="595.40" y1="131.11" x2="655.93" y2="162.48" stroke="#4a4a4a" stroke-opacity="0.28" stroke-width="0.8"/><line x1="655.93" y1="162.48" x2="716.47" y2="193.85" stroke="#4a4a4a" stroke-opacity="0.44" stroke-width="0.8"/><line x1="716.47" y1="193.85" x2="777.00" y2="225.22" stroke="#4a4a4a" stroke-opacity="0.59" stroke-width="0.8"/><line x1="535.37" y1="98.22" x2="595.77" y2="128.83" stroke="#4a4a4a" stroke-opacity="0.12" stroke-width="0.8"/><line x1="595.77" y1="128.83" x2="656.18" y2="159.44" stroke="#4a4a4a" stroke-opacity="0.27" stroke-width="0.8"/><line x1="656.18" y1="159.44" x2="716.59" y2="190.05" stroke="#4a4a4a" stroke-opacity="0.42" stroke-width="0.8"/><line x1="716.59" y1="190.05" x2="777.00" y2="220.66" stroke="#4a4a4a" stroke-opacity="0.57" stroke-width="0.8"/><line x1="535.86" y1="96.77" x2="596.15" y2="126.65" stroke="#4a4a4a" stroke-opacity="0.11" stroke-width="0.8"/><line x1="596.15" y1="126.65" x2="656.43" y2="156.53" stroke="#4a4a4a" stroke-opacity="0.26" stroke-width="0.8"/><line x1="656.43" y1="156.53" x2="716.72" y2="186.42" stroke="#4a4a4a" stroke-opacity="0.40" stroke-width="0.8"/><line x1="716.72" y1="186.42" x2="777.00" y2="216.30" stroke="#4a4a4a" stroke-opacity="0.55" stroke-width="0.8"/><line x1="536.36" y1="95.37" x2="596.52" y2="124.56" stroke="#4a4a4a" stroke-opacity="0.10" stroke-width="0.8"/><line x1="596.52" y1="124.56" x2="656.68" y2="153.75" stroke="#4a4a4a" stroke-opacity="0.25" stroke-width="0.8"/><line x1="656.68" y1="153.75" x2="716.84" y2="182.94" stroke="#4a4a4a" stroke-opacity="0.39" stroke-width="0.8"/><line x1="716.84" y1="182.94" x2="777.00" y2="212.12" stroke="#4a4a4a" stroke-opacity="0.53" stroke-width="0.8"/><line x1="536.86" y1="94.04" x2="596.89" y2="122.56" stroke="#4a4a4a" stroke-opacity="0.09" stroke-width="0.8"/><line x1="596.89" y1="122.56" x2="656.93" y2="151.08" stroke="#4a4a4a" stroke-opacity="0.24" stroke-width="0.8"/><line x1="656.93" y1="151.08" x2="716.96" y2="179.60" stroke="#4a4a4a" stroke-opacity="0.37" stroke-width="0.8"/><line x1="716.96" y1="179.60" x2="777.00" y2="208.12" stroke="#4a4a4a" stroke-opacity="0.51" stroke-width="0.8"/><line x1="537.35" y1="92.76" x2="597.27" y2="120.64" stroke="#4a4a4a" stroke-opacity="0.08" stroke-width="0.8"/><line x1="597.27" y1="120.64" x2="657.18" y2="148.52" stroke="#4a4a4a" stroke-opacity="0.22" stroke-width="0.8"/><line x1="657.18" y1="148.52" x2="717.09" y2="176.40" stroke="#4a4a4a" stroke-opacity="0.36" stroke-width="0.8"/><line x1="717.09" y1="176.40" x2="777.00" y2="204.28" stroke="#4a4a4a" stroke-opacity="0.50" stroke-width="0.8"/><line x1="478.06" y1="64.27" x2="537.85" y2="91.53" stroke="#555555" stroke-opacity="0.18" stroke-width="0.8"/><line x1="537.85" y1="91.53" x2="597.64" y2="118.80" stroke="#555555" stroke-opacity="0.33" stroke-width="0.8"/><line x1="597.64" y1="118.80" x2="657.43" y2="146.06" stroke="#555555" stroke-opacity="0.38" stroke-width="0.8"/><line x1="657.43" y1="146.06" x2="717.21" y2="173.33" stroke="#555555" stroke-opacity="0.38" stroke-width="0.8"/><line x1="717.21" y1="173.33" x2="777.00" y2="200.60" stroke="#555555" stroke-opacity="0.48" stroke-width="0.8"/><line x1="538.35" y1="90.35" x2="598.01" y2="117.03" stroke="#4a4a4a" stroke-opacity="0.06" stroke-width="0.8"/><line x1="598.01" y1="117.03" x2="657.67" y2="143.70" stroke="#4a4a4a" stroke-opacity="0.20" stroke-width="0.8"/><line x1="657.67" y1="143.70" x2="717.34" y2="170.38" stroke="#4a4a4a" stroke-opacity="0.33" stroke-width="0.8"/><line x1="717.34" y1="170.38" x2="777.00" y2="197.06" stroke="#4a4a4a" stroke-opacity="0.46" stroke-width="0.8"/><line x1="538.85" y1="89.22" x2="598.38" y2="115.33" stroke="#4a4a4a" stroke-opacity="0.06" stroke-width="0.8"/><line x1="598.38" y1="115.33" x2="657.92" y2="141.43" stroke="#4a4a4a" stroke-opacity="0.19" stroke-width="0.8"/><line x1="657.92" y1="141.43" x2="717.46" y2="167.54" stroke="#4a4a4a" stroke-opacity="0.32" stroke-width="0.8"/><line x1="717.46" y1="167.54" x2="777.00" y2="193.65" stroke="#4a4a4a" stroke-opacity="0.45" stroke-width="0.8"/><line x1="539.34" y1="88.12" x2="598.76" y2="113.69" stroke="#4a4a4a" stroke-opacity="0.05" stroke-width="0.8"/><line x1="598.76" y1="113.69" x2="658.17" y2="139.25" stroke="#4a4a4a" stroke-opacity="0.19" stroke-width="0.8"/><line x1="658.17" y1="139.25" x2="717.59" y2="164.81" stroke="#4a4a4a" stroke-opacity="0.31" stroke-width="0.8"/><line x1="717.59" y1="164.81" x2="777.00" y2="190.37" stroke="#4a4a4a" stroke-opacity="0.43" stroke-width="0.8"/><line x1="539.84" y1="87.07" x2="599.13" y2="112.11" stroke="#4a4a4a" stroke-opacity="0.04" stroke-width="0.8"/><line x1="599.13" y1="112.11" x2="658.42" y2="137.15" stroke="#4a4a4a" stroke-opacity="0.18" stroke-width="0.8"/><line x1="658.42" y1="137.15" x2="717.71" y2="162.18" stroke="#4a4a4a" stroke-opacity="0.30" stroke-width="0.8"/><line x1="717.71" y1="162.18" x2="777.00" y2="187.22" stroke="#4a4a4a" stroke-opacity="0.42" stroke-width="0.8"/><line x1="540.34" y1="86.06" x2="599.50" y2="110.59" stroke="#4a4a4a" stroke-opacity="0.04" stroke-width="0.8"/><line x1="599.50" y1="110.59" x2="658.67" y2="135.12" stroke="#4a4a4a" stroke-opacity="0.17" stroke-width="0.8"/><line x1="658.67" y1="135.12" x2="717.83" y2="159.65" stroke="#4a4a4a" stroke-opacity="0.29" stroke-width="0.8"/><line x1="717.83" y1="159.65" x2="777.00" y2="184.18" stroke="#4a4a4a" stroke-opacity="0.41" stroke-width="0.8"/><line x1="540.83" y1="85.08" x2="599.87" y2="109.12" stroke="#4a4a4a" stroke-opacity="0.03" stroke-width="0.8"/><line x1="599.87" y1="109.12" x2="658.92" y2="133.16" stroke="#4a4a4a" stroke-opacity="0.16" stroke-width="0.8"/><line x1="658.92" y1="133.16" x2="717.96" y2="157.21" stroke="#4a4a4a" stroke-opacity="0.28" stroke-width="0.8"/><line x1="717.96" y1="157.21" x2="777.00" y2="181.25" stroke="#4a4a4a" stroke-opacity="0.39" stroke-width="0.8"/><line x1="541.33" y1="84.14" x2="600.25" y2="107.71" stroke="#4a4a4a" stroke-opacity="0.03" stroke-width="0.8"/><line x1="600.25" y1="107.71" x2="659.17" y2="131.28" stroke="#4a4a4a" stroke-opacity="0.15" stroke-width="0.8"/><line x1="659.17" y1="131.28" x2="718.08" y2="154.85" stroke="#4a4a4a" stroke-opacity="0.27" stroke-width="0.8"/><line x1="718.08" y1="154.85" x2="777.00" y2="178.42" stroke="#4a4a4a" stroke-opacity="0.38" stroke-width="0.8"/><line x1="541.83" y1="83.23" x2="600.62" y2="106.34" stroke="#4a4a4a" stroke-opacity="0.02" stroke-width="0.8"/><line x1="600.62" y1="106.34" x2="659.41" y2="129.46" stroke="#4a4a4a" stroke-opacity="0.14" stroke-width="0.8"/><line x1="659.41" y1="129.46" x2="718.21" y2="152.57" stroke="#4a4a4a" stroke-opacity="0.26" stroke-width="0.8"/><line x1="718.21" y1="152.57" x2="777.00" y2="175.69" stroke="#4a4a4a" stroke-opacity="0.37" stroke-width="0.8"/><line x1="600.99" y1="105.02" x2="659.66" y2="127.70" stroke="#4a4a4a" stroke-opacity="0.14" stroke-width="0.8"/><line x1="659.66" y1="127.70" x2="718.33" y2="150.37" stroke="#4a4a4a" stroke-opacity="0.25" stroke-width="0.8"/><line x1="718.33" y1="150.37" x2="777.00" y2="173.05" stroke="#4a4a4a" stroke-opacity="0.36" stroke-width="0.8"/><line x1="484.28" y1="59.25" x2="542.82" y2="81.50" stroke="#555555" stroke-opacity="0.14" stroke-width="0.8"/><line x1="542.82" y1="81.50" x2="601.37" y2="103.75" stroke="#555555" stroke-opacity="0.26" stroke-width="0.8"/><line x1="601.37" y1="103.75" x2="659.91" y2="126.00" stroke="#555555" stroke-opacity="0.38" stroke-width="0.8"/><line x1="659.91" y1="126.00" x2="718.46" y2="148.25" stroke="#555555" stroke-opacity="0.38" stroke-width="0.8"/><line x1="718.46" y1="148.25" x2="777.00" y2="170.50" stroke="#555555" stroke-opacity="0.38" stroke-width="0.8"/><line x1="601.74" y1="102.51" x2="660.16" y2="124.35" stroke="#4a4a4a" stroke-opacity="0.12" stroke-width="0.8"/><line x1="660.16" y1="124.35" x2="718.58" y2="146.19" stroke="#4a4a4a" stroke-opacity="0.23" stroke-width="0.8"/><line x1="718.58" y1="146.19" x2="777.00" y2="168.03" stroke="#4a4a4a" stroke-opacity="0.33" stroke-width="0.8"/><line x1="602.11" y1="101.32" x2="660.41" y2="122.76" stroke="#4a4a4a" stroke-opacity="0.11" stroke-width="0.8"/><line x1="660.41" y1="122.76" x2="718.70" y2="144.20" stroke="#4a4a4a" stroke-opacity="0.22" stroke-width="0.8"/><line x1="718.70" y1="144.20" x2="777.00" y2="165.64" stroke="#4a4a4a" stroke-opacity="0.32" stroke-width="0.8"/><line x1="602.48" y1="100.17" x2="660.66" y2="121.22" stroke="#4a4a4a" stroke-opacity="0.10" stroke-width="0.8"/><line x1="660.66" y1="121.22" x2="718.83" y2="142.28" stroke="#4a4a4a" stroke-opacity="0.21" stroke-width="0.8"/><line x1="718.83" y1="142.28" x2="777.00" y2="163.33" stroke="#4a4a4a" stroke-opacity="0.31" stroke-width="0.8"/><line x1="602.86" y1="99.05" x2="660.90" y2="119.73" stroke="#4a4a4a" stroke-opacity="0.09" stroke-width="0.8"/><line x1="660.90" y1="119.73" x2="718.95" y2="140.41" stroke="#4a4a4a" stroke-opacity="0.20" stroke-width="0.8"/><line x1="718.95" y1="140.41" x2="777.00" y2="161.09" stroke="#4a4a4a" stroke-opacity="0.30" stroke-width="0.8"/><line x1="603.23" y1="97.96" x2="661.15" y2="118.28" stroke="#4a4a4a" stroke-opacity="0.09" stroke-width="0.8"/><line x1="661.15" y1="118.28" x2="719.08" y2="138.60" stroke="#4a4a4a" stroke-opacity="0.20" stroke-width="0.8"/><line x1="719.08" y1="138.60" x2="777.00" y2="158.92" stroke="#4a4a4a" stroke-opacity="0.29" stroke-width="0.8"/><line x1="603.60" y1="96.91" x2="661.40" y2="116.88" stroke="#4a4a4a" stroke-opacity="0.08" stroke-width="0.8"/><line x1="661.40" y1="116.88" x2="719.20" y2="136.85" stroke="#4a4a4a" stroke-opacity="0.19" stroke-width="0.8"/><line x1="719.20" y1="136.85" x2="777.00" y2="156.82" stroke="#4a4a4a" stroke-opacity="0.28" stroke-width="0.8"/><line x1="603.98" y1="95.89" x2="661.65" y2="115.52" stroke="#4a4a4a" stroke-opacity="0.07" stroke-width="0.8"/><line x1="661.65" y1="115.52" x2="719.33" y2="135.14" stroke="#4a4a4a" stroke-opacity="0.18" stroke-width="0.8"/><line x1="719.33" y1="135.14" x2="777.00" y2="154.77" stroke="#4a4a4a" stroke-opacity="0.28" stroke-width="0.8"/><line x1="604.35" y1="94.90" x2="661.90" y2="114.19" stroke="#4a4a4a" stroke-opacity="0.07" stroke-width="0.8"/><line x1="661.90" y1="114.19" x2="719.45" y2="133.49" stroke="#4a4a4a" stroke-opacity="0.17" stroke-width="0.8"/><line x1="719.45" y1="133.49" x2="777.00" y2="152.79" stroke="#4a4a4a" stroke-opacity="0.27" stroke-width="0.8"/><line x1="604.72" y1="93.93" x2="662.15" y2="112.91" stroke="#4a4a4a" stroke-opacity="0.06" stroke-width="0.8"/><line x1="662.15" y1="112.91" x2="719.57" y2="131.89" stroke="#4a4a4a" stroke-opacity="0.17" stroke-width="0.8"/><line x1="719.57" y1="131.89" x2="777.00" y2="150.87" stroke="#4a4a4a" stroke-opacity="0.26" stroke-width="0.8"/><line x1="490.49" y1="55.67" x2="547.79" y2="74.33" stroke="#555555" stroke-opacity="0.11" stroke-width="0.8"/><line x1="547.79" y1="74.33" x2="605.09" y2="93.00" stroke="#555555" stroke-opacity="0.21" stroke-width="0.8"/><line x1="605.09" y1="93.00" x2="662.40" y2="111.66" stroke="#555555" stroke-opacity="0.31" stroke-width="0.8"/><line x1="662.40" y1="111.66" x2="719.70" y2="130.33" stroke="#555555" stroke-opacity="0.38" stroke-width="0.8"/><line x1="719.70" y1="130.33" x2="777.00" y2="149.00" stroke="#555555" stroke-opacity="0.38" stroke-width="0.8"/><line x1="605.47" y1="92.09" x2="662.64" y2="110.45" stroke="#4a4a4a" stroke-opacity="0.05" stroke-width="0.8"/><line x1="662.64" y1="110.45" x2="719.82" y2="128.82" stroke="#4a4a4a" stroke-opacity="0.15" stroke-width="0.8"/><line x1="719.82" y1="128.82" x2="777.00" y2="147.18" stroke="#4a4a4a" stroke-opacity="0.24" stroke-width="0.8"/><line x1="605.84" y1="91.21" x2="662.89" y2="109.28" stroke="#4a4a4a" stroke-opacity="0.05" stroke-width="0.8"/><line x1="662.89" y1="109.28" x2="719.95" y2="127.35" stroke="#4a4a4a" stroke-opacity="0.15" stroke-width="0.8"/><line x1="719.95" y1="127.35" x2="777.00" y2="145.41" stroke="#4a4a4a" stroke-opacity="0.23" stroke-width="0.8"/><line x1="606.21" y1="90.35" x2="663.14" y2="108.13" stroke="#4a4a4a" stroke-opacity="0.04" stroke-width="0.8"/><line x1="663.14" y1="108.13" x2="720.07" y2="125.91" stroke="#4a4a4a" stroke-opacity="0.14" stroke-width="0.8"/><line x1="720.07" y1="125.91" x2="777.00" y2="143.70" stroke="#4a4a4a" stroke-opacity="0.23" stroke-width="0.8"/><line x1="606.58" y1="89.51" x2="663.39" y2="107.02" stroke="#4a4a4a" stroke-opacity="0.04" stroke-width="0.8"/><line x1="663.39" y1="107.02" x2="720.19" y2="124.52" stroke="#4a4a4a" stroke-opacity="0.13" stroke-width="0.8"/><line x1="720.19" y1="124.52" x2="777.00" y2="142.02" stroke="#4a4a4a" stroke-opacity="0.22" stroke-width="0.8"/><line x1="606.96" y1="88.70" x2="663.64" y2="105.93" stroke="#4a4a4a" stroke-opacity="0.03" stroke-width="0.8"/><line x1="663.64" y1="105.93" x2="720.32" y2="123.16" stroke="#4a4a4a" stroke-opacity="0.13" stroke-width="0.8"/><line x1="720.32" y1="123.16" x2="777.00" y2="140.40" stroke="#4a4a4a" stroke-opacity="0.21" stroke-width="0.8"/><line x1="607.33" y1="87.91" x2="663.89" y2="104.88" stroke="#4a4a4a" stroke-opacity="0.03" stroke-width="0.8"/><line x1="663.89" y1="104.88" x2="720.44" y2="121.84" stroke="#4a4a4a" stroke-opacity="0.12" stroke-width="0.8"/><line x1="720.44" y1="121.84" x2="777.00" y2="138.81" stroke="#4a4a4a" stroke-opacity="0.20" stroke-width="0.8"/><line x1="607.70" y1="87.14" x2="664.14" y2="103.85" stroke="#4a4a4a" stroke-opacity="0.02" stroke-width="0.8"/><line x1="664.14" y1="103.85" x2="720.57" y2="120.56" stroke="#4a4a4a" stroke-opacity="0.11" stroke-width="0.8"/><line x1="720.57" y1="120.56" x2="777.00" y2="137.27" stroke="#4a4a4a" stroke-opacity="0.20" stroke-width="0.8"/><line x1="608.08" y1="86.38" x2="664.38" y2="102.84" stroke="#4a4a4a" stroke-opacity="0.02" stroke-width="0.8"/><line x1="664.38" y1="102.84" x2="720.69" y2="119.31" stroke="#4a4a4a" stroke-opacity="0.10" stroke-width="0.8"/><line x1="720.69" y1="119.31" x2="777.00" y2="135.77" stroke="#4a4a4a" stroke-opacity="0.19" stroke-width="0.8"/><line x1="664.63" y1="101.87" x2="720.82" y2="118.08" stroke="#4a4a4a" stroke-opacity="0.10" stroke-width="0.8"/><line x1="720.82" y1="118.08" x2="777.00" y2="134.30" stroke="#4a4a4a" stroke-opacity="0.18" stroke-width="0.8"/><line x1="496.70" y1="52.98" x2="552.76" y2="68.96" stroke="#555555" stroke-opacity="0.07" stroke-width="0.8"/><line x1="552.76" y1="68.96" x2="608.82" y2="84.94" stroke="#555555" stroke-opacity="0.17" stroke-width="0.8"/><line x1="608.82" y1="84.94" x2="664.88" y2="100.92" stroke="#555555" stroke-opacity="0.26" stroke-width="0.8"/><line x1="664.88" y1="100.92" x2="720.94" y2="116.89" stroke="#555555" stroke-opacity="0.35" stroke-width="0.8"/><line x1="720.94" y1="116.89" x2="777.00" y2="132.87" stroke="#555555" stroke-opacity="0.38" stroke-width="0.8"/><line x1="665.13" y1="99.99" x2="721.06" y2="115.73" stroke="#4a4a4a" stroke-opacity="0.09" stroke-width="0.8"/><line x1="721.06" y1="115.73" x2="777.00" y2="131.48" stroke="#4a4a4a" stroke-opacity="0.17" stroke-width="0.8"/><line x1="665.38" y1="99.08" x2="721.19" y2="114.60" stroke="#4a4a4a" stroke-opacity="0.08" stroke-width="0.8"/><line x1="721.19" y1="114.60" x2="777.00" y2="130.12" stroke="#4a4a4a" stroke-opacity="0.17" stroke-width="0.8"/><line x1="665.63" y1="98.20" x2="721.31" y2="113.49" stroke="#4a4a4a" stroke-opacity="0.07" stroke-width="0.8"/><line x1="721.31" y1="113.49" x2="777.00" y2="128.79" stroke="#4a4a4a" stroke-opacity="0.16" stroke-width="0.8"/><line x1="665.87" y1="97.33" x2="721.44" y2="112.41" stroke="#4a4a4a" stroke-opacity="0.07" stroke-width="0.8"/><line x1="721.44" y1="112.41" x2="777.00" y2="127.50" stroke="#4a4a4a" stroke-opacity="0.15" stroke-width="0.8"/><line x1="666.12" y1="96.49" x2="721.56" y2="111.36" stroke="#4a4a4a" stroke-opacity="0.06" stroke-width="0.8"/><line x1="721.56" y1="111.36" x2="777.00" y2="126.23" stroke="#4a4a4a" stroke-opacity="0.15" stroke-width="0.8"/><line x1="666.37" y1="95.67" x2="721.69" y2="110.33" stroke="#4a4a4a" stroke-opacity="0.06" stroke-width="0.8"/><line x1="721.69" y1="110.33" x2="777.00" y2="125.00" stroke="#4a4a4a" stroke-opacity="0.14" stroke-width="0.8"/><line x1="666.62" y1="94.86" x2="721.81" y2="109.33" stroke="#4a4a4a" stroke-opacity="0.05" stroke-width="0.8"/><line x1="721.81" y1="109.33" x2="777.00" y2="123.79" stroke="#4a4a4a" stroke-opacity="0.14" stroke-width="0.8"/><line x1="666.87" y1="94.07" x2="721.93" y2="108.34" stroke="#4a4a4a" stroke-opacity="0.05" stroke-width="0.8"/><line x1="721.93" y1="108.34" x2="777.00" y2="122.61" stroke="#4a4a4a" stroke-opacity="0.13" stroke-width="0.8"/><line x1="667.12" y1="93.31" x2="722.06" y2="107.38" stroke="#4a4a4a" stroke-opacity="0.05" stroke-width="0.8"/><line x1="722.06" y1="107.38" x2="777.00" y2="121.46" stroke="#4a4a4a" stroke-opacity="0.13" stroke-width="0.8"/><line x1="502.91" y1="50.89" x2="557.73" y2="64.78" stroke="#555555" stroke-opacity="0.05" stroke-width="0.8"/><line x1="557.73" y1="64.78" x2="612.55" y2="78.67" stroke="#555555" stroke-opacity="0.15" stroke-width="0.8"/><line x1="612.55" y1="78.67" x2="667.37" y2="92.55" stroke="#555555" stroke-opacity="0.22" stroke-width="0.8"/><line x1="667.37" y1="92.55" x2="722.18" y2="106.44" stroke="#555555" stroke-opacity="0.30" stroke-width="0.8"/><line x1="722.18" y1="106.44" x2="777.00" y2="120.33" stroke="#555555" stroke-opacity="0.37" stroke-width="0.8"/><line x1="667.61" y1="91.82" x2="722.31" y2="105.52" stroke="#4a4a4a" stroke-opacity="0.04" stroke-width="0.8"/><line x1="722.31" y1="105.52" x2="777.00" y2="119.23" stroke="#4a4a4a" stroke-opacity="0.11" stroke-width="0.8"/><line x1="667.86" y1="91.10" x2="722.43" y2="104.63" stroke="#4a4a4a" stroke-opacity="0.03" stroke-width="0.8"/><line x1="722.43" y1="104.63" x2="777.00" y2="118.15" stroke="#4a4a4a" stroke-opacity="0.11" stroke-width="0.8"/><line x1="668.11" y1="90.40" x2="722.56" y2="103.75" stroke="#4a4a4a" stroke-opacity="0.03" stroke-width="0.8"/><line x1="722.56" y1="103.75" x2="777.00" y2="117.09" stroke="#4a4a4a" stroke-opacity="0.10" stroke-width="0.8"/><line x1="668.36" y1="89.71" x2="722.68" y2="102.88" stroke="#4a4a4a" stroke-opacity="0.03" stroke-width="0.8"/><line x1="722.68" y1="102.88" x2="777.00" y2="116.06" stroke="#4a4a4a" stroke-opacity="0.09" stroke-width="0.8"/><line x1="668.61" y1="89.03" x2="722.80" y2="102.04" stroke="#4a4a4a" stroke-opacity="0.03" stroke-width="0.8"/><line x1="722.80" y1="102.04" x2="777.00" y2="115.05" stroke="#4a4a4a" stroke-opacity="0.09" stroke-width="0.8"/><line x1="668.86" y1="88.37" x2="722.93" y2="101.22" stroke="#4a4a4a" stroke-opacity="0.02" stroke-width="0.8"/><line x1="722.93" y1="101.22" x2="777.00" y2="114.06" stroke="#4a4a4a" stroke-opacity="0.08" stroke-width="0.8"/><line x1="723.05" y1="100.41" x2="777.00" y2="113.09" stroke="#4a4a4a" stroke-opacity="0.08" stroke-width="0.8"/><line x1="723.18" y1="99.62" x2="777.00" y2="112.14" stroke="#4a4a4a" stroke-opacity="0.07" stroke-width="0.8"/><line x1="723.30" y1="98.84" x2="777.00" y2="111.21" stroke="#4a4a4a" stroke-opacity="0.07" stroke-width="0.8"/><line x1="509.13" y1="49.22" x2="562.70" y2="61.43" stroke="#555555" stroke-opacity="0.04" stroke-width="0.8"/><line x1="562.70" y1="61.43" x2="616.28" y2="73.65" stroke="#555555" stroke-opacity="0.12" stroke-width="0.8"/><line x1="616.28" y1="73.65" x2="669.85" y2="85.87" stroke="#555555" stroke-opacity="0.19" stroke-width="0.8"/><line x1="669.85" y1="85.87" x2="723.43" y2="98.08" stroke="#555555" stroke-opacity="0.25" stroke-width="0.8"/><line x1="723.43" y1="98.08" x2="777.00" y2="110.30" stroke="#555555" stroke-opacity="0.32" stroke-width="0.8"/><line x1="723.55" y1="97.34" x2="777.00" y2="109.40" stroke="#4a4a4a" stroke-opacity="0.06" stroke-width="0.8"/><line x1="723.67" y1="96.61" x2="777.00" y2="108.53" stroke="#4a4a4a" stroke-opacity="0.06" stroke-width="0.8"/><line x1="723.80" y1="95.89" x2="777.00" y2="107.67" stroke="#4a4a4a" stroke-opacity="0.05" stroke-width="0.8"/><line x1="723.92" y1="95.19" x2="777.00" y2="106.83" stroke="#4a4a4a" stroke-opacity="0.05" stroke-width="0.8"/><line x1="724.05" y1="94.50" x2="777.00" y2="106.00" stroke="#4a4a4a" stroke-opacity="0.05" stroke-width="0.8"/><line x1="724.17" y1="93.82" x2="777.00" y2="105.19" stroke="#4a4a4a" stroke-opacity="0.04" stroke-width="0.8"/><line x1="724.30" y1="93.16" x2="777.00" y2="104.39" stroke="#4a4a4a" stroke-opacity="0.04" stroke-width="0.8"/><line x1="724.42" y1="92.51" x2="777.00" y2="103.61" stroke="#4a4a4a" stroke-opacity="0.04" stroke-width="0.8"/><line x1="724.54" y1="91.87" x2="777.00" y2="102.84" stroke="#4a4a4a" stroke-opacity="0.03" stroke-width="0.8"/><line x1="515.34" y1="47.85" x2="567.67" y2="58.70" stroke="#555555" stroke-opacity="0.03" stroke-width="0.8"/><line x1="567.67" y1="58.70" x2="620.00" y2="69.54" stroke="#555555" stroke-opacity="0.10" stroke-width="0.8"/><line x1="620.00" y1="69.54" x2="672.34" y2="80.39" stroke="#555555" stroke-opacity="0.16" stroke-width="0.8"/><line x1="672.34" y1="80.39" x2="724.67" y2="91.24" stroke="#555555" stroke-opacity="0.22" stroke-width="0.8"/><line x1="724.67" y1="91.24" x2="777.00" y2="102.09" stroke="#555555" stroke-opacity="0.28" stroke-width="0.8"/><line x1="724.79" y1="90.62" x2="777.00" y2="101.35" stroke="#4a4a4a" stroke-opacity="0.03" stroke-width="0.8"/><line x1="724.92" y1="90.02" x2="777.00" y2="100.62" stroke="#4a4a4a" stroke-opacity="0.02" stroke-width="0.8"/><line x1="725.04" y1="89.42" x2="777.00" y2="99.91" stroke="#4a4a4a" stroke-opacity="0.02" stroke-width="0.8"/><line x1="572.64" y1="56.42" x2="623.73" y2="66.12" stroke="#555555" stroke-opacity="0.08" stroke-width="0.8"/><line x1="623.73" y1="66.12" x2="674.82" y2="75.83" stroke="#555555" stroke-opacity="0.14" stroke-width="0.8"/><line x1="674.82" y1="75.83" x2="725.91" y2="85.54" stroke="#555555" stroke-opacity="0.19" stroke-width="0.8"/><line x1="725.91" y1="85.54" x2="777.00" y2="95.25" stroke="#555555" stroke-opacity="0.25" stroke-width="0.8"/><line x1="577.61" y1="54.49" x2="627.46" y2="63.23" stroke="#555555" stroke-opacity="0.06" stroke-width="0.8"/><line x1="627.46" y1="63.23" x2="677.31" y2="71.97" stroke="#555555" stroke-opacity="0.12" stroke-width="0.8"/><line x1="677.31" y1="71.97" x2="727.15" y2="80.72" stroke="#555555" stroke-opacity="0.17" stroke-width="0.8"/><line x1="727.15" y1="80.72" x2="777.00" y2="89.46" stroke="#555555" stroke-opacity="0.22" stroke-width="0.8"/><line x1="582.58" y1="52.83" x2="631.19" y2="60.75" stroke="#555555" stroke-opacity="0.05" stroke-width="0.8"/><line x1="631.19" y1="60.75" x2="679.79" y2="68.67" stroke="#555555" stroke-opacity="0.10" stroke-width="0.8"/><line x1="679.79" y1="68.67" x2="728.40" y2="76.58" stroke="#555555" stroke-opacity="0.15" stroke-width="0.8"/><line x1="728.40" y1="76.58" x2="777.00" y2="84.50" stroke="#555555" stroke-opacity="0.19" stroke-width="0.8"/><line x1="587.55" y1="51.40" x2="634.91" y2="58.60" stroke="#555555" stroke-opacity="0.04" stroke-width="0.8"/><line x1="634.91" y1="58.60" x2="682.28" y2="65.80" stroke="#555555" stroke-opacity="0.08" stroke-width="0.8"/><line x1="682.28" y1="65.80" x2="729.64" y2="73.00" stroke="#555555" stroke-opacity="0.13" stroke-width="0.8"/><line x1="729.64" y1="73.00" x2="777.00" y2="80.20" stroke="#555555" stroke-opacity="0.17" stroke-width="0.8"/><line x1="592.52" y1="50.15" x2="638.64" y2="56.72" stroke="#555555" stroke-opacity="0.03" stroke-width="0.8"/><line x1="638.64" y1="56.72" x2="684.76" y2="63.29" stroke="#555555" stroke-opacity="0.07" stroke-width="0.8"/><line x1="684.76" y1="63.29" x2="730.88" y2="69.86" stroke="#555555" stroke-opacity="0.12" stroke-width="0.8"/><line x1="730.88" y1="69.86" x2="777.00" y2="76.44" stroke="#555555" stroke-opacity="0.15" stroke-width="0.8"/><line x1="597.49" y1="49.04" x2="642.37" y2="55.06" stroke="#555555" stroke-opacity="0.02" stroke-width="0.8"/><line x1="642.37" y1="55.06" x2="687.25" y2="61.08" stroke="#555555" stroke-opacity="0.05" stroke-width="0.8"/><line x1="687.25" y1="61.08" x2="732.12" y2="67.10" stroke="#555555" stroke-opacity="0.10" stroke-width="0.8"/><line x1="732.12" y1="67.10" x2="777.00" y2="73.12" stroke="#555555" stroke-opacity="0.14" stroke-width="0.8"/><line x1="646.10" y1="53.58" x2="689.73" y2="59.11" stroke="#555555" stroke-opacity="0.04" stroke-width="0.8"/><line x1="689.73" y1="59.11" x2="733.37" y2="64.64" stroke="#555555" stroke-opacity="0.08" stroke-width="0.8"/><line x1="733.37" y1="64.64" x2="777.00" y2="70.17" stroke="#555555" stroke-opacity="0.12" stroke-width="0.8"/><line x1="649.83" y1="52.26" x2="692.22" y2="57.35" stroke="#555555" stroke-opacity="0.04" stroke-width="0.8"/><line x1="692.22" y1="57.35" x2="734.61" y2="62.44" stroke="#555555" stroke-opacity="0.07" stroke-width="0.8"/><line x1="734.61" y1="62.44" x2="777.00" y2="67.53" stroke="#555555" stroke-opacity="0.11" stroke-width="0.8"/><line x1="653.55" y1="51.07" x2="694.70" y2="55.77" stroke="#555555" stroke-opacity="0.03" stroke-width="0.8"/><line x1="694.70" y1="55.77" x2="735.85" y2="60.46" stroke="#555555" stroke-opacity="0.05" stroke-width="0.8"/><line x1="735.85" y1="60.46" x2="777.00" y2="65.15" stroke="#555555" stroke-opacity="0.09" stroke-width="0.8"/><line x1="0" y1="53.71" x2="777" y2="50.22" stroke="#4a4a4a" stroke-opacity="0.03" stroke-width="0.8"/><line x1="0" y1="62.71" x2="777" y2="59.22" stroke="#4a4a4a" stroke-opacity="0.14" stroke-width="0.8"/><line x1="0" y1="71.71" x2="777" y2="68.22" stroke="#4a4a4a" stroke-opacity="0.25" stroke-width="0.8"/><line x1="0" y1="80.71" x2="777" y2="77.22" stroke="#4a4a4a" stroke-opacity="0.36" stroke-width="0.8"/><line x1="0" y1="89.71" x2="777" y2="86.22" stroke="#4a4a4a" stroke-opacity="0.47" stroke-width="0.8"/><line x1="0" y1="98.71" x2="777" y2="95.22" stroke="#4a4a4a" stroke-opacity="0.50" stroke-width="0.8"/><line x1="0" y1="107.71" x2="777" y2="104.22" stroke="#4a4a4a" stroke-opacity="0.50" stroke-width="0.8"/><line x1="0" y1="116.71" x2="777" y2="113.22" stroke="#4a4a4a" stroke-opacity="0.50" stroke-width="0.8"/><line x1="0" y1="125.71" x2="777" y2="122.22" stroke="#4a4a4a" stroke-opacity="0.50" stroke-width="0.8"/><line x1="0" y1="134.71" x2="777" y2="131.22" stroke="#4a4a4a" stroke-opacity="0.50" stroke-width="0.8"/><line x1="0" y1="143.71" x2="777" y2="140.22" stroke="#4a4a4a" stroke-opacity="0.50" stroke-width="0.8"/><line x1="0" y1="152.71" x2="777" y2="149.22" stroke="#4a4a4a" stroke-opacity="0.50" stroke-width="0.8"/><line x1="0" y1="161.71" x2="777" y2="158.22" stroke="#4a4a4a" stroke-opacity="0.50" stroke-width="0.8"/><line x1="0" y1="170.71" x2="777" y2="167.22" stroke="#4a4a4a" stroke-opacity="0.50" stroke-width="0.8"/><line x1="0" y1="179.71" x2="777" y2="176.22" stroke="#4a4a4a" stroke-opacity="0.50" stroke-width="0.8"/><line x1="0" y1="188.71" x2="777" y2="185.22" stroke="#4a4a4a" stroke-opacity="0.50" stroke-width="0.8"/><line x1="0" y1="197.71" x2="777" y2="194.22" stroke="#4a4a4a" stroke-opacity="0.50" stroke-width="0.8"/><line x1="0" y1="206.71" x2="777" y2="203.22" stroke="#4a4a4a" stroke-opacity="0.50" stroke-width="0.8"/><line x1="0" y1="215.71" x2="777" y2="212.22" stroke="#4a4a4a" stroke-opacity="0.47" stroke-width="0.8"/><line x1="0" y1="224.71" x2="777" y2="221.22" stroke="#4a4a4a" stroke-opacity="0.41" stroke-width="0.8"/><line x1="0" y1="233.71" x2="777" y2="230.22" stroke="#4a4a4a" stroke-opacity="0.34" stroke-width="0.8"/><line x1="0" y1="242.71" x2="777" y2="239.22" stroke="#4a4a4a" stroke-opacity="0.28" stroke-width="0.8"/><line x1="0" y1="251.71" x2="777" y2="248.22" stroke="#4a4a4a" stroke-opacity="0.21" stroke-width="0.8"/><line x1="0" y1="260.71" x2="777" y2="257.22" stroke="#4a4a4a" stroke-opacity="0.15" stroke-width="0.8"/><line x1="0" y1="269.71" x2="777" y2="266.22" stroke="#4a4a4a" stroke-opacity="0.09" stroke-width="0.8"/><line x1="0" y1="379.3" x2="777" y2="375.6" stroke="#6d8f35" stroke-width="1"/><line x1="381.5" y1="37" x2="389.5" y2="459" stroke="#803a44" stroke-opacity="0.75" stroke-width="0.7"/><polygon points="289,155 245,217 267.5,445.5 300,323" fill="#3e3a3a"/><polygon points="289,155 482,155 472,321 300,323" fill="#8b8b8b" stroke="#8b8b8b" stroke-width="0.6"/><polygon points="482,155 532,215 509.5,444 472,321" fill="#7b7b7b"/><polygon points="300,323 472,321 509.5,444 267.5,445.5" fill="#8b8b8b"/><polygon points="324.6,250 329,250 333.5,351.5 328,351.5" fill="#8a8a8a" stroke="#5c5c5c" stroke-width="0.7"/><polygon points="442.3,250 447.2,250 443.5,350.5 438.3,350.5" fill="#8a8a8a" stroke="#5c5c5c" stroke-width="0.7"/><rect x="327" y="249.6" width="117.5" height="7.4" rx="2" fill="#8a8a8a" stroke="#e2683c" stroke-width="0.9"/><polygon points="311,299 317.3,299 323.8,419 317.4,419" fill="#8c8c8c" stroke="#5c5c5c" stroke-width="0.7"/><polygon points="457,299 463,299 457.8,418 450.5,418" fill="#8c8c8c" stroke="#5c5c5c" stroke-width="0.7"/><rect x="311" y="299" width="152" height="8.5" rx="1" fill="#8c8c8c" stroke="#5c5c5c" stroke-width="0.7"/><circle cx="387" cy="303.6" r="1.1" fill="#e07a20"/><defs><linearGradient id="cylg" x1="0" x2="1" y1="0" y2="0"><stop offset="0" stop-color="#8c8c8c"/><stop offset="0.55" stop-color="#8a8a8a"/><stop offset="1" stop-color="#6a6a6a"/></linearGradient><linearGradient id="holeg" x1="0" x2="1" y1="0" y2="0"><stop offset="0" stop-color="#474747"/><stop offset="0.5" stop-color="#7a7a7a"/><stop offset="1" stop-color="#8c8c8c"/></linearGradient></defs><path d="M371.6,363 A15.7,6.8 0 0 1 403,363 L403,375 A15.7,6.6 0 0 1 371.6,375 Z" fill="url(#cylg)" stroke="#4a4a4a" stroke-width="0.6"/><ellipse cx="387.3" cy="363" rx="15.7" ry="6.8" fill="#8e8e8e" stroke="#555" stroke-width="0.5"/><ellipse cx="387.4" cy="363.6" rx="12.6" ry="5.7" fill="url(#holeg)" stroke="#555" stroke-width="0.5"/><path d="M377,367.5 A10,2.6 0 0 0 398,367.5 A12.6,5.7 0 0 1 377,367.5Z" fill="#8a8a8a"/><circle cx="387.2" cy="376.7" r="5" fill="none" stroke="#f4f4f4" stroke-width="1"/><circle cx="387.2" cy="376.7" r="5" fill="none" stroke="#e03030" stroke-width="1" stroke-dasharray="2.2,1.7"/><path d="M387.2,369 V373.5 M387.2,380 V384.5 M379.5,376.7 H384 M390.4,376.7 H395" stroke="#222" stroke-width="0.6"/><line x1="385.4" y1="246.1" x2="385.4" y2="218" stroke="#4f8ef0" stroke-width="0.9"/><polygon points="383.4,218.5 385.4,210 387.4,218.5" fill="#4f8ef0"/><line x1="392.9" y1="253.1" x2="423" y2="253.1" stroke="#8fd14f" stroke-width="0.9"/><polygon points="422,251.29999999999998 431,253.1 422,254.9" fill="#8fd14f"/><line x1="385.4" y1="260.6" x2="385.4" y2="267" stroke="#f04f6a" stroke-width="0.9"/><polygon points="383.5,268.4 385.4,265.5 387.29999999999995,268.4 385.4,271.5" fill="#f04f6a"/><circle cx="385.4" cy="253.1" r="7.2" fill="none" stroke="#e8e8e8" stroke-width="1"/><circle cx="385.4" cy="253.1" r="1.1" fill="#e05a20"/><rect x="404.4" y="230.8" width="4.8" height="4.8" fill="#e07080" fill-opacity="0.7" stroke="#e07080" stroke-width="0.5"/><rect x="404.6" y="260" width="5.2" height="2.2" fill="#5b84d8" fill-opacity="0.9"/></svg>
<div class="b" style="left:0px;top:25px;width:777px;height:12px;background:#303030;border-radius:0px;border-radius:3px 3px 0 0;"></div>
<div class="b" style="left:0px;top:37px;width:149px;height:12px;background:#333333;border-radius:0px;border-radius:0 0 3px 0;"></div>
<div class="b" style="left:777px;top:12.5px;width:80px;height:10.5px;background:#242424;border-radius:2px;"></div>
<div class="b" style="left:791px;top:13.5px;width:52px;height:8.5px;background:#1d1d1d;border-radius:1px;"></div>
<div class="b" style="left:841.5px;top:13.3px;width:8px;height:8.8px;background:#3a3a3a;border-radius:1px;"></div>
<div class="t" style="left:796.00px;top:16.65px;font-size:4.6px;color:#bdbdbd;">Scene</div>
<div class="b" style="left:863px;top:12.5px;width:76px;height:10.5px;background:#242424;border-radius:2px;"></div>
<div class="b" style="left:877px;top:13.5px;width:40px;height:8.5px;background:#1d1d1d;border-radius:1px;"></div>
<div class="b" style="left:917.5px;top:13.3px;width:9px;height:8.8px;background:#3a3a3a;border-radius:1px;"></div>
<div class="t" style="left:883.00px;top:16.65px;font-size:4.6px;color:#bdbdbd;">ViewLayer</div>
<svg width="940" height="490"><circle cx="783" cy="19" r="2" fill="none" stroke="#cfcfcf" stroke-width="0.8"/><circle cx="868.5" cy="18.5" r="2.2" fill="#9a9a9a"/><path d="M835,20.5 L838,17.5" stroke="#999" stroke-width="0.6"/><circle cx="845.5" cy="18" r="2" fill="none" stroke="#ccc" stroke-width="0.7"/><circle cx="922" cy="18" r="2" fill="none" stroke="#ccc" stroke-width="0.7"/></svg>
<div class="t" style="left:779.00px;top:9.91px;font-size:6.6px;color:#f4f4f4;font-weight:bold;text-shadow:0 0 1px #000,0 0 1px #000;">FPS</div>
<div class="t" style="left:795.00px;top:9.91px;font-size:6.6px;color:#f4f4f4;font-weight:bold;text-shadow:0 0 1px #000,0 0 1px #000;">N/A</div>
<div class="t" style="left:811.50px;top:9.91px;font-size:6.6px;color:#f4f4f4;text-shadow:0 0 1px #000,0 0 1px #000;">|</div>
<div class="t" style="left:820.00px;top:9.91px;font-size:6.6px;color:#f4f4f4;font-weight:bold;text-shadow:0 0 1px #000,0 0 1px #000;">GPU</div>
<div class="t" style="left:838.00px;top:9.91px;font-size:6.6px;color:#f4f4f4;font-weight:bold;text-shadow:0 0 1px #000,0 0 1px #000;">0 %</div>
<div class="t" style="left:855.50px;top:9.91px;font-size:6.6px;color:#f4f4f4;text-shadow:0 0 1px #000,0 0 1px #000;">|</div>
<div class="t" style="left:863.00px;top:9.91px;font-size:6.6px;color:#f4f4f4;font-weight:bold;text-shadow:0 0 1px #000,0 0 1px #000;">CPU</div>
<div class="t" style="left:881.00px;top:9.91px;font-size:6.6px;color:#f4f4f4;font-weight:bold;text-shadow:0 0 1px #000,0 0 1px #000;">7 %</div>
<div class="t" style="left:898.50px;top:9.91px;font-size:6.6px;color:#f4f4f4;text-shadow:0 0 1px #000,0 0 1px #000;">|</div>
<div class="t" style="left:905.00px;top:9.91px;font-size:6.6px;color:#f4f4f4;font-weight:bold;text-shadow:0 0 1px #000,0 0 1px #000;">LAT</div>
<div class="t" style="left:922.00px;top:9.91px;font-size:6.6px;color:#f4f4f4;font-weight:bold;text-shadow:0 0 1px #000,0 0 1px #000;">N/A</div>
<div class="b" style="left:2px;top:25.5px;width:15px;height:10px;background:#282828;border-radius:2px;"></div>
<svg width="12" height="10" style="left:3px;top:26px"><rect x="1" y="4" width="1.2" height="4.5" fill="#cfcfcf"/><rect x="3" y="5" width="3" height="3.5" fill="#cfcfcf"/><circle cx="6" cy="2.5" r="1.6" fill="#fff"/><path d="M1,8.6 H7" stroke="#cfcfcf" stroke-width="0.7"/></svg>
<div class="b" style="left:20.5px;top:25.5px;width:54px;height:10px;background:#282828;border-radius:2px;"></div>
<svg width="10" height="10" style="left:22px;top:26px"><rect x="2.6" y="2.4" width="4.4" height="5" rx="0.8" fill="#f0f0f0"/><path d="M1,1 L2.4,2.4 M8.6,1 L7.2,2.4 M1,9 L2.4,7.4 M8.6,9 L7.2,7.4" stroke="#cfcfcf" stroke-width="0.8"/></svg>
<div class="t" style="left:32.80px;top:28.04px;font-size:5.9px;color:#e0e0e0;">Object Mode</div>
<div class="t" style="left:80.00px;top:28.04px;font-size:5.9px;color:#e0e0e0;">View</div>
<div class="t" style="left:100.00px;top:28.04px;font-size:5.9px;color:#e0e0e0;">Select</div>
<div class="t" style="left:124.00px;top:28.04px;font-size:5.9px;color:#e0e0e0;">Add</div>
<div class="t" style="left:142.00px;top:28.04px;font-size:5.9px;color:#e0e0e0;">Object</div>
<div class="b" style="left:327px;top:25.5px;width:36px;height:10px;background:#282828;border-radius:2px;"></div>
<svg width="10" height="10" style="left:328px;top:26px"><path d="M2,1.5 V8 H8" fill="none" stroke="#d0d0d0" stroke-width="0.9"/><circle cx="2" cy="2" r="1" fill="#fff"/><circle cx="7.5" cy="8" r="1" fill="#fff"/><circle cx="5" cy="5" r="0.9" fill="#fff"/></svg>
<div class="t" style="left:339.00px;top:28.04px;font-size:5.9px;color:#e0e0e0;">Global</div>
<div class="b" style="left:367px;top:25.5px;width:15px;height:10px;background:#282828;border-radius:2px;"></div>
<svg width="10" height="10" style="left:368px;top:26px"><circle cx="3.5" cy="5.6" r="2.4" fill="none" stroke="#d0d0d0" stroke-width="0.8"/><circle cx="6.2" cy="3.6" r="2.4" fill="none" stroke="#d0d0d0" stroke-width="0.8"/></svg>
<div class="b" style="left:385px;top:25.5px;width:26px;height:10px;background:#282828;border-radius:2px;"></div>
<div class="b" style="left:385px;top:25.5px;width:9px;height:10px;background:#4a4a4a;border-radius:0px;border-radius:2px 0 0 2px;"></div>
<svg width="26" height="10" style="left:385px;top:26px"><circle cx="4.5" cy="4.8" r="2.6" fill="none" stroke="#777" stroke-width="0.9"/><path d="M11,5 H14.5 M16,5 H19" stroke="#d8d8d8" stroke-width="1.2"/><rect x="17.2" y="1.5" width="1.6" height="1.8" fill="#fff"/></svg>
<div class="b" style="left:413.5px;top:25.5px;width:23px;height:10px;background:#282828;border-radius:2px;"></div>
<div class="b" style="left:413.5px;top:25.5px;width:9.5px;height:10px;background:#4a4a4a;border-radius:0px;border-radius:2px 0 0 2px;"></div>
<svg width="24" height="10" style="left:413.5px;top:26px"><circle cx="4.8" cy="4.8" r="2.6" fill="none" stroke="#bbb" stroke-width="0.8"/><circle cx="4.8" cy="4.8" r="1.1" fill="#eee"/><path d="M11,8 Q14,0 17,8" fill="none" stroke="#666" stroke-width="0.8"/></svg>
<div class="b" style="left:652px;top:25.5px;width:14px;height:10px;background:#282828;border-radius:2px;"></div>
<svg width="10" height="10" style="left:652px;top:26px"><path d="M1.5,6 Q4,2 8,3.5 Q6,7 1.5,6Z" fill="#e8e8e8"/><circle cx="3" cy="7.6" r="1" fill="#e8e8e8"/></svg>
<div class="b" style="left:669.5px;top:25.5px;width:19px;height:10px;background:#282828;border-radius:2px;"></div>
<div class="b" style="left:669.5px;top:25.5px;width:9.5px;height:10px;background:#4772b3;border-radius:0px;border-radius:2px 0 0 2px;"></div>
<svg width="10" height="10" style="left:669.5px;top:26px"><path d="M1.5,1.5 L8,8.5 M8,1.5 L1.5,8.5" stroke="#e8f0ff" stroke-width="0.9"/><circle cx="7.6" cy="2" r="1" fill="#fff"/></svg>
<div class="b" style="left:692px;top:25.5px;width:19px;height:10px;background:#282828;border-radius:2px;"></div>
<div class="b" style="left:692px;top:25.5px;width:9.5px;height:10px;background:#4772b3;border-radius:0px;border-radius:2px 0 0 2px;"></div>
<svg width="10" height="10" style="left:692px;top:26px"><circle cx="4" cy="5.8" r="2.6" fill="#2c58a0" stroke="#dfe8ff" stroke-width="0.7"/><circle cx="5.8" cy="4" r="2.6" fill="#f2f2f2"/></svg>
<div class="b" style="left:714px;top:25.5px;width:9px;height:10px;background:#4a4a4a;border-radius:2px;"></div>
<svg width="10" height="10" style="left:714px;top:26px"><rect x="2" y="2.5" width="5" height="5" fill="none" stroke="#cfcfcf" stroke-width="0.8"/><rect x="3.5" y="1.2" width="4" height="4" fill="none" stroke="#999" stroke-width="0.6"/></svg>
<div class="b" style="left:726px;top:25.5px;width:38px;height:10px;background:#4a4a4a;border-radius:2px;"></div>
<div class="b" style="left:735.2px;top:25.5px;width:9.4px;height:10px;background:#4772b3;border-radius:0px;"></div>
<svg width="40" height="10" style="left:726px;top:26px"><circle cx="4.7" cy="5" r="3" fill="none" stroke="#aaa" stroke-width="0.7"/><path d="M1.7,5 H7.7 M4.7,2 V8" stroke="#aaa" stroke-width="0.5"/><circle cx="14" cy="5" r="3" fill="#f4f4f4"/><circle cx="23.4" cy="5" r="3" fill="#d8d8d8"/><path d="M23.4,2 A3,3 0 0 0 23.4,8 Z" fill="#555"/><circle cx="32.8" cy="5" r="3" fill="#bbb"/><path d="M30.4,6.5 A3,3 0 0 0 35.5,3.8" fill="#666"/></svg>
<div class="b" style="left:765px;top:25.5px;width:9px;height:10px;background:#282828;border-radius:2px;"></div>
<div class="t" style="left:2.00px;top:40.50px;font-size:5.8px;color:#c8c8c8;">Orientation:</div>
<div class="b" style="left:36px;top:39.5px;width:49px;height:7.5px;background:#282828;border-radius:2px;"></div>
<svg width="10" height="10" style="left:37px;top:38.5px"><path d="M2,1.5 V8 H8" fill="none" stroke="#bbb" stroke-width="0.6" stroke-dasharray="1,1"/><circle cx="3" cy="7" r="1.1" fill="#fff"/><circle cx="6.6" cy="7.2" r="0.7" fill="#fff"/><circle cx="2" cy="2" r="0.7" fill="#fff"/></svg>
<div class="t" style="left:47.00px;top:40.50px;font-size:5.8px;color:#e0e0e0;">Default</div>
<div class="t" style="left:88.00px;top:40.50px;font-size:5.8px;color:#b8b8b8;">Drag:</div>
<div class="b" style="left:107.5px;top:39.5px;width:40.5px;height:7.5px;background:#282828;border-radius:2px;"></div>
<div class="t" style="left:110.00px;top:40.50px;font-size:5.8px;color:#e0e0e0;">Select Box</div>
<div class="b" style="left:371.5px;top:38px;width:22px;height:11px;background:#2e2e2e;border-radius:2px;"></div>
<svg width="10" height="10" style="left:382px;top:38.5px"><path d="M5,0.8 L8.8,3 V7.2 L5,9.4 L1.2,7.2 V3 Z" fill="#3fb0e8"/><path d="M5,0.8 L8.8,3 V7.2 L5,5 Z" fill="#f0a020"/><path d="M5,5 L8.8,7.2 L5,9.4 L1.2,7.2Z" fill="#e84040"/><path d="M1.2,3 L5,5 L1.2,7.2Z" fill="#50c060"/></svg>
<div class="b" style="left:742.5px;top:40px;width:31px;height:7.8px;background:#2a2a2a;border-radius:2px;"></div>
<div class="t" style="left:746.00px;top:40.80px;font-size:5.8px;color:#e0e0e0;">Options</div>
<div class="t" style="left:29.40px;top:54.94px;font-size:5.75px;color:#e8e8e8;-webkit-text-stroke:0.1px #e8e8e8;">User Perspective</div>
<div class="t" style="left:29.50px;top:63.93px;font-size:5.75px;color:#e8e8e8;-webkit-text-stroke:0.1px #e8e8e8;">(1) Collection | Cube.005</div>
<div class="b" style="left:2px;top:54px;width:19px;height:33.2px;background:#282828;border-radius:2px;"></div>
<div class="b" style="left:2px;top:90.8px;width:19px;height:16.2px;background:#4772b3;border-radius:2px 2px 0 0;"></div>
<div class="b" style="left:2px;top:107px;width:19px;height:51px;background:#282828;border-radius:0 0 2px 2px;"></div>
<div class="b" style="left:2px;top:162.5px;width:19px;height:33px;background:#282828;border-radius:2px;"></div>
<div class="b" style="left:2px;top:199.2px;width:19px;height:16px;background:#282828;border-radius:2px;"></div>
<svg width="940" height="490"><rect x="6.5" y="57.5" width="10" height="9.5" fill="none" stroke="#d8a040" stroke-width="0.8" stroke-dasharray="1.4,0.9"/><path d="M10,59.5 V65 L11.4,63.6 L12.8,66 L13.6,65.5 L12.4,63.2 L14.2,63 Z" fill="#f0f0f0"/><path d="M19,68.5 L19,69.5 L18,69.5Z" fill="#bbb"/><circle cx="11.5" cy="78.6" r="4.6" fill="none" stroke="#f0f0f0" stroke-width="0.8"/><circle cx="11.5" cy="78.6" r="4.6" fill="none" stroke="#d03030" stroke-width="0.8" stroke-dasharray="1.6,1.4"/><path d="M11.5,74.5 V76.8 M11.5,80.4 V82.7 M7.4,78.6 H9.7 M13.3,78.6 H15.6" stroke="#bbb" stroke-width="0.5"/><path d="M11.5,93.5 V104.5 M6,99 H17" stroke="#f4f4f4" stroke-width="0.8"/><path d="M10,95 L11.5,93.2 L13,95 Z M10,103 L11.5,104.8 L13,103 Z M7.5,97.5 L5.7,99 L7.5,100.5 Z M15.5,97.5 L17.3,99 L15.5,100.5 Z" fill="#f4f4f4"/><path d="M6.8,114 A4.8,4.8 0 0 1 16,112.5 M16.2,117.5 A4.8,4.8 0 0 1 7,119" fill="none" stroke="#eaeaea" stroke-width="0.9"/><circle cx="11.5" cy="115.8" r="1.8" fill="#eaeaea"/><rect x="7" y="127.5" width="9" height="9" fill="none" stroke="#dcdcdc" stroke-width="0.8"/><rect x="7" y="131.5" width="5" height="5" fill="#f0f0f0"/><path d="M12,131.5 L15.5,128" stroke="#dcdcdc" stroke-width="0.7"/><path d="M19,139.5 L19,140.5 L18,140.5Z" fill="#bbb"/><circle cx="11.5" cy="149.5" r="4.4" fill="none" stroke="#e0e0e0" stroke-width="0.8"/><rect x="9" y="147" width="5" height="5" fill="#f0f0f0"/><path d="M7,173 L14.5,165.5" stroke="#f0f0f0" stroke-width="1.6"/><path d="M8,175.5 Q12,172 14,175 Q16,177 18,174" fill="none" stroke="#60c0a0" stroke-width="0.7"/><path d="M19,176.5 L19,177.5 L18,177.5Z" fill="#bbb"/><path d="M7.5,182 V192.5 H17" fill="none" stroke="#e8e8e8" stroke-width="0.9"/><path d="M8.5,191.5 V185 A6.5,6.5 0 0 1 15,191.5 Z" fill="#60c0a0"/><path d="M8,205 L11.5,203 L15.5,205 V210.5 L11.5,212.5 L8,210.5 Z M8,205 L11.5,207 L15.5,205 M11.5,207 V212.5" fill="none" stroke="#60c0a0" stroke-width="0.7"/><circle cx="7" cy="202" r="1.2" fill="#80e0c0"/><path d="M19,212.5 L19,213.5 L18,213.5Z" fill="#bbb"/></svg>
<svg width="940" height="490"><line x1="615.2" y1="74.2" x2="615.2" y2="59.6" stroke="#4f8ef0" stroke-width="1"/><line x1="615.2" y1="74.2" x2="631" y2="74.2" stroke="#8fc43a" stroke-width="0.9"/><line x1="615.2" y1="74.2" x2="615.2" y2="80.3" stroke="#f04f6a" stroke-width="0.9"/><circle cx="615.2" cy="68.2" r="3.7" fill="#3a3a3a" fill-opacity="0.3" stroke="#b03848" stroke-width="0.7"/><circle cx="599.8" cy="74.4" r="3.9" fill="#5a7a28" stroke="#78b030" stroke-width="0.8"/><circle cx="615.2" cy="88.8" r="3.9" fill="#34506e" stroke="#3a78c8" stroke-width="0.8"/><circle cx="615.2" cy="59.7" r="4.1" fill="#3d84e6"/><circle cx="631" cy="74.4" r="4.1" fill="#80c020"/><circle cx="615.2" cy="79.9" r="4.2" fill="#ee3a58"/></svg>
<div class="t" style="left:555.20px;width:120px;text-align:center;top:58.05px;font-size:4.6px;color:#222;font-weight:bold;">Z</div>
<div class="t" style="left:571.00px;width:120px;text-align:center;top:72.75px;font-size:4.6px;color:#222;font-weight:bold;">Y</div>
<div class="t" style="left:555.20px;width:120px;text-align:center;top:78.25px;font-size:4.6px;color:#222;font-weight:bold;">X</div>
<svg width="940" height="490"><circle cx="629" cy="101.2" r="6" fill="#2a2a2a" fill-opacity="0.85"/><circle cx="629" cy="116.5" r="6" fill="#2a2a2a" fill-opacity="0.85"/><circle cx="629" cy="130.4" r="6" fill="#2a2a2a" fill-opacity="0.85"/><circle cx="629" cy="145" r="6" fill="#2a2a2a" fill-opacity="0.85"/><circle cx="630" cy="100.3" r="2.2" fill="none" stroke="#e8e8e8" stroke-width="0.9"/><path d="M628.5,101.8 L626.2,104" stroke="#e8e8e8" stroke-width="1.1"/><path d="M629,100.3 H631 M630,99.3 V101.3" stroke="#e8e8e8" stroke-width="0.5"/><path d="M626.8,118 V114.5 M628.2,117 V113 M629.6,117 V112.8 M631,117.5 V113.5 M626.6,118 Q628,121 630.5,120.5 Q632.5,119.5 632.5,116" fill="none" stroke="#f0f0f0" stroke-width="1"/><path d="M626,128.5 H630.5 M626,132.5 H631" stroke="#e8e8e8" stroke-width="0.9"/><circle cx="631.8" cy="128.5" r="1.3" fill="none" stroke="#e8e8e8" stroke-width="0.7"/><circle cx="625.8" cy="132.5" r="1.3" fill="none" stroke="#e8e8e8" stroke-width="0.7"/><path d="M626.2,148 L627,142 H631 L631.8,148 Z M626.6,145 H631.4 M628.3,142 V148 M629.7,142 V148" fill="none" stroke="#e0e0e0" stroke-width="0.6"/></svg>
<div class="b" style="left:645px;top:51px;width:120px;height:189px;background:#3c3c3c;border-radius:3px;"></div>
<div class="b" style="left:765px;top:51px;width:2px;height:189px;background:#333333;border-radius:0px;"></div>
<div class="b" style="left:767px;top:51px;width:10px;height:408px;background:#232323;border-radius:0px;"></div>
<div class="b" style="left:767.6px;top:53px;width:8.6px;height:19.700000000000003px;background:#3d3d3d;border-radius:0px;border-radius:0 2px 2px 0;"></div>
<div class="t" style="left:732px;top:59.55px;width:80px;text-align:center;font-size:5.4px;color:#e8e8e8;transform:rotate(90deg);transform-origin:40px 3.3px;">Item</div>
<div class="b" style="left:767.6px;top:76px;width:8.6px;height:16px;background:#2c2c2c;border-radius:0px;border-radius:0 2px 2px 0;"></div>
<div class="t" style="left:732px;top:80.70px;width:80px;text-align:center;font-size:5.4px;color:#b0b0b0;transform:rotate(90deg);transform-origin:40px 3.3px;">Tool</div>
<div class="b" style="left:767.6px;top:95.5px;width:8.6px;height:18.0px;background:#2c2c2c;border-radius:0px;border-radius:0 2px 2px 0;"></div>
<div class="t" style="left:732px;top:101.20px;width:80px;text-align:center;font-size:5.4px;color:#b0b0b0;transform:rotate(90deg);transform-origin:40px 3.3px;">View</div>
<div class="b" style="left:767.6px;top:118px;width:8.6px;height:51px;background:#2c2c2c;border-radius:0px;border-radius:0 2px 2px 0;"></div>
<div class="t" style="left:732px;top:140.20px;width:80px;text-align:center;font-size:5.4px;color:#b0b0b0;transform:rotate(90deg);transform-origin:40px 3.3px;">Blender Universe</div>
<div class="b" style="left:767.6px;top:174px;width:8.6px;height:31.69999999999999px;background:#2c2c2c;border-radius:0px;border-radius:0 2px 2px 0;"></div>
<div class="t" style="left:732px;top:186.55px;width:80px;text-align:center;font-size:5.4px;color:#b0b0b0;transform:rotate(90deg);transform-origin:40px 3.3px;">BlenderKit</div>
<div class="b" style="left:767.6px;top:208.6px;width:8.6px;height:17.099999999999994px;background:#2c2c2c;border-radius:0px;border-radius:0 2px 2px 0;"></div>
<div class="t" style="left:732px;top:213.85px;width:80px;text-align:center;font-size:5.4px;color:#b0b0b0;transform:rotate(90deg);transform-origin:40px 3.3px;">WD</div>
<div class="b" style="left:767.6px;top:228.6px;width:8.6px;height:17.099999999999994px;background:#2c2c2c;border-radius:0px;border-radius:0 2px 2px 0;"></div>
<div class="t" style="left:732px;top:233.85px;width:80px;text-align:center;font-size:5.4px;color:#b0b0b0;transform:rotate(90deg);transform-origin:40px 3.3px;">Edit</div>
<div class="b" style="left:767.6px;top:248.6px;width:8.6px;height:32.79999999999998px;background:#2c2c2c;border-radius:0px;border-radius:0 2px 2px 0;"></div>
<div class="t" style="left:732px;top:261.70px;width:80px;text-align:center;font-size:5.4px;color:#b0b0b0;transform:rotate(90deg);transform-origin:40px 3.3px;">Animation</div>
<div class="t" style="left:655.50px;top:53.90px;font-size:5.8px;color:#e8e8e8;">Transform</div>
<div class="t" style="left:648.00px;top:68.93px;font-size:5.6px;color:#c8c8c8;">Location:</div>
<div class="b" style="left:648px;top:77.90px;width:86px;height:8.80px;background:#545454;border-radius:2px 2px 0 0;"></div>
<div class="t" style="left:655.50px;top:78.83px;font-size:5.6px;color:#e0e0e0;">X</div>
<div class="t" style="right:211.50px;top:78.83px;font-size:5.6px;color:#e8e8e8;">4.1887 m</div>
<div class="b" style="left:648px;top:87.30px;width:86px;height:8.80px;background:#545454;border-radius:0;"></div>
<div class="t" style="left:655.50px;top:88.23px;font-size:5.6px;color:#e0e0e0;">Y</div>
<div class="t" style="right:211.50px;top:88.23px;font-size:5.6px;color:#e8e8e8;">-0.06064 m</div>
<div class="b" style="left:648px;top:96.70px;width:86px;height:8.80px;background:#545454;border-radius:0 0 2px 2px;"></div>
<div class="t" style="left:655.50px;top:97.63px;font-size:5.6px;color:#e0e0e0;">Z</div>
<div class="t" style="right:211.50px;top:97.63px;font-size:5.6px;color:#e8e8e8;">7.5189 m</div>
<div class="t" style="left:648.00px;top:109.13px;font-size:5.6px;color:#c8c8c8;">Rotation:</div>
<div class="b" style="left:648px;top:117.80px;width:86px;height:8.80px;background:#545454;border-radius:2px 2px 0 0;"></div>
<div class="t" style="left:655.50px;top:118.73px;font-size:5.6px;color:#e0e0e0;">X</div>
<div class="t" style="right:211.50px;top:118.73px;font-size:5.6px;color:#e8e8e8;">90°</div>
<div class="b" style="left:648px;top:127.20px;width:86px;height:8.80px;background:#545454;border-radius:0;"></div>
<div class="t" style="left:655.50px;top:128.13px;font-size:5.6px;color:#e0e0e0;">Y</div>
<div class="t" style="right:211.50px;top:128.13px;font-size:5.6px;color:#e8e8e8;">90°</div>
<div class="b" style="left:648px;top:136.60px;width:86px;height:8.80px;background:#545454;border-radius:0 0 2px 2px;"></div>
<div class="t" style="left:655.50px;top:137.53px;font-size:5.6px;color:#e0e0e0;">Z</div>
<div class="t" style="right:211.50px;top:137.53px;font-size:5.6px;color:#e8e8e8;">0°</div>
<div class="b" style="left:648px;top:148.3px;width:111px;height:8.2px;background:#282828;border-radius:2px;"></div>
<div class="t" style="left:651.50px;top:149.03px;font-size:5.6px;color:#e0e0e0;">XYZ Euler</div>
<div class="t" style="left:648.00px;top:159.73px;font-size:5.6px;color:#c8c8c8;">Scale:</div>
<div class="b" style="left:648px;top:168.90px;width:86px;height:8.80px;background:#545454;border-radius:2px 2px 0 0;"></div>
<div class="t" style="left:655.50px;top:169.83px;font-size:5.6px;color:#e0e0e0;">X</div>
<div class="t" style="right:211.50px;top:169.83px;font-size:5.6px;color:#e8e8e8;">0.179</div>
<div class="b" style="left:648px;top:178.30px;width:86px;height:8.80px;background:#545454;border-radius:0;"></div>
<div class="t" style="left:655.50px;top:179.23px;font-size:5.6px;color:#e0e0e0;">Y</div>
<div class="t" style="right:211.50px;top:179.23px;font-size:5.6px;color:#e8e8e8;">0.168</div>
<div class="b" style="left:648px;top:187.70px;width:86px;height:8.80px;background:#545454;border-radius:0 0 2px 2px;"></div>
<div class="t" style="left:655.50px;top:188.63px;font-size:5.6px;color:#e0e0e0;">Z</div>
<div class="t" style="right:211.50px;top:188.63px;font-size:5.6px;color:#e8e8e8;">3.747</div>
<div class="t" style="left:648.00px;top:200.43px;font-size:5.6px;color:#c8c8c8;">Dimensions:</div>
<div class="b" style="left:648px;top:209.20px;width:111px;height:8.80px;background:#545454;border-radius:2px 2px 0 0;"></div>
<div class="t" style="left:655.50px;top:210.13px;font-size:5.6px;color:#e0e0e0;">X</div>
<div class="t" style="right:186.50px;top:210.13px;font-size:5.6px;color:#e8e8e8;">0.359 m</div>
<div class="b" style="left:648px;top:218.60px;width:111px;height:8.80px;background:#545454;border-radius:0;"></div>
<div class="t" style="left:655.50px;top:219.53px;font-size:5.6px;color:#e0e0e0;">Y</div>
<div class="t" style="right:186.50px;top:219.53px;font-size:5.6px;color:#e8e8e8;">0.335 m</div>
<div class="b" style="left:648px;top:228.00px;width:111px;height:8.80px;background:#545454;border-radius:0 0 2px 2px;"></div>
<div class="t" style="left:655.50px;top:228.93px;font-size:5.6px;color:#e0e0e0;">Z</div>
<div class="t" style="right:186.50px;top:228.93px;font-size:5.6px;color:#e8e8e8;">7.49 m</div>
<div class="b" style="left:28px;top:446px;width:78px;height:11.4px;background:#1d1d1d;border-radius:2px;"></div>
<div class="t" style="left:38.50px;top:449.20px;font-size:5.8px;color:#d8d8d8;">Move</div>
<div class="b" style="left:0px;top:461px;width:777px;height:29px;background:#2a2a2a;border-radius:3px;"></div>
<div class="b" style="left:0px;top:461px;width:777px;height:12px;background:#303030;border-radius:0px;border-radius:3px 3px 0 0;"></div>
<div class="b" style="left:0px;top:473px;width:777px;height:11px;background:#1f1f1f;border-radius:0px;"></div>
<svg width="16" height="10" style="left:3px;top:462.5px"><circle cx="4.6" cy="5" r="3.4" fill="#f0f0f0"/><path d="M5.4,2.4 A2.6,2.6 0 0 0 5.4,7.6 A3.6,3.6 0 0 1 5.4,2.4Z" fill="#303030"/></svg>
<div class="b" style="left:21px;top:464px;width:33px;height:8.4px;background:#282828;border-radius:2px;"></div>
<div class="t" style="left:23.50px;top:465.10px;font-size:5.8px;color:#d8d8d8;">Playback</div>
<div class="b" style="left:55px;top:464px;width:30px;height:8.4px;background:#282828;border-radius:2px;"></div>
<div class="t" style="left:58.30px;top:465.10px;font-size:5.8px;color:#d8d8d8;">Keying</div>
<div class="t" style="left:89.50px;top:465.10px;font-size:5.8px;color:#d8d8d8;">View</div>
<div class="t" style="left:110.00px;top:465.10px;font-size:5.8px;color:#d8d8d8;">Marker</div>
<div class="b" style="left:342px;top:463.8px;width:18px;height:8.4px;background:#282828;border-radius:2px;"></div>
<div class="b" style="left:342px;top:463.8px;width:9.5px;height:8.4px;background:#4a4a4a;border-radius:0px;border-radius:2px 0 0 2px;"></div>
<svg width="10" height="10" style="left:342px;top:463px"><circle cx="4.8" cy="5" r="2.2" fill="none" stroke="#9a9a9a" stroke-width="0.7"/></svg>
<div class="b" style="left:364.6px;top:463.8px;width:58px;height:8.4px;background:#4a4a4a;border-radius:2px;"></div>
<svg width="940" height="490"><path d="M367.5,465.5 V470 M368.3,467.75 L371.3,465.5 V470 Z" stroke="#e8e8e8" stroke-width="0.6" fill="#e8e8e8"/><path d="M376,465.5 L373.5,467.75 L376,470Z M378.5,465.5 L376,467.75 L378.5,470Z" fill="#e8e8e8"/><path d="M379.4,465.5 V470" stroke="#e8e8e8" stroke-width="0.6"/><path d="M386.5,465.2 L382.6,467.75 L386.5,470.3Z" fill="#e8e8e8"/><path d="M394,465.2 L398,467.75 L394,470.3Z" fill="#e8e8e8"/><path d="M403.4,465.5 V470" stroke="#e8e8e8" stroke-width="0.6"/><path d="M404,465.5 L406.5,467.75 L404,470Z M406.5,465.5 L409,467.75 L406.5,470Z" fill="#e8e8e8"/><path d="M414.2,465.5 L417.2,467.75 L414.2,470Z" fill="#e8e8e8"/><path d="M418,465.5 V470" stroke="#e8e8e8" stroke-width="0.6"/></svg>
<div class="b" style="left:639.4px;top:463.6px;width:36px;height:8.6px;background:#545454;border-radius:2px;"></div>
<div class="t" style="left:597.30px;width:120px;text-align:center;top:465.10px;font-size:5.8px;color:#e8e8e8;">1</div>
<div class="b" style="left:678.4px;top:463.6px;width:9px;height:8.6px;background:#4a4a4a;border-radius:0px;border-radius:2px 0 0 2px;"></div>
<svg width="10" height="10" style="left:678.4px;top:462.8px"><circle cx="4.5" cy="5.3" r="2.6" fill="none" stroke="#e0e0e0" stroke-width="0.8"/><path d="M4.5,3.8 V5.3 H5.8 M3.5,2 H5.5" stroke="#e0e0e0" stroke-width="0.6" fill="none"/></svg>
<div class="b" style="left:687.6px;top:463.6px;width:45px;height:8.6px;background:#545454;border-radius:0px;"></div>
<div class="b" style="left:733px;top:463.6px;width:41px;height:8.6px;background:#545454;border-radius:0px;border-radius:0 2px 2px 0;"></div>
<div class="b" style="left:732.6px;top:463.6px;width:0.6px;height:8.6px;background:#3a3a3a;border-radius:0px;"></div>
<div class="t" style="left:696.00px;top:465.23px;font-size:5.6px;color:#e0e0e0;">Start</div>
<div class="t" style="right:214.50px;top:465.23px;font-size:5.6px;color:#e0e0e0;">1</div>
<div class="t" style="left:740.00px;top:465.23px;font-size:5.6px;color:#e0e0e0;">End</div>
<div class="t" style="right:168.50px;top:465.23px;font-size:5.6px;color:#e0e0e0;">250</div>
<div class="b" style="left:0px;top:484.4px;width:20.6px;height:5.6px;background:#242424;border-radius:0px;"></div>
<div class="b" style="left:747px;top:484.4px;width:30px;height:5.6px;background:#242424;border-radius:0px;"></div>
<svg width="940" height="490"><line x1="23.60" y1="484.4" x2="23.60" y2="490" stroke="#1f1f1f" stroke-width="0.7"/><line x1="52.50" y1="484.4" x2="52.50" y2="490" stroke="#1f1f1f" stroke-width="0.7"/><line x1="81.40" y1="484.4" x2="81.40" y2="490" stroke="#1f1f1f" stroke-width="0.7"/><line x1="110.30" y1="484.4" x2="110.30" y2="490" stroke="#1f1f1f" stroke-width="0.7"/><line x1="139.20" y1="484.4" x2="139.20" y2="490" stroke="#1f1f1f" stroke-width="0.7"/><line x1="168.10" y1="484.4" x2="168.10" y2="490" stroke="#1f1f1f" stroke-width="0.7"/><line x1="197.00" y1="484.4" x2="197.00" y2="490" stroke="#1f1f1f" stroke-width="0.7"/><line x1="225.90" y1="484.4" x2="225.90" y2="490" stroke="#1f1f1f" stroke-width="0.7"/><line x1="254.80" y1="484.4" x2="254.80" y2="490" stroke="#1f1f1f" stroke-width="0.7"/><line x1="283.70" y1="484.4" x2="283.70" y2="490" stroke="#1f1f1f" stroke-width="0.7"/><line x1="312.60" y1="484.4" x2="312.60" y2="490" stroke="#1f1f1f" stroke-width="0.7"/><line x1="341.50" y1="484.4" x2="341.50" y2="490" stroke="#1f1f1f" stroke-width="0.7"/><line x1="370.40" y1="484.4" x2="370.40" y2="490" stroke="#1f1f1f" stroke-width="0.7"/><line x1="399.30" y1="484.4" x2="399.30" y2="490" stroke="#1f1f1f" stroke-width="0.7"/><line x1="428.20" y1="484.4" x2="428.20" y2="490" stroke="#1f1f1f" stroke-width="0.7"/><line x1="457.10" y1="484.4" x2="457.10" y2="490" stroke="#1f1f1f" stroke-width="0.7"/><line x1="486.00" y1="484.4" x2="486.00" y2="490" stroke="#1f1f1f" stroke-width="0.7"/><line x1="514.90" y1="484.4" x2="514.90" y2="490" stroke="#1f1f1f" stroke-width="0.7"/><line x1="543.80" y1="484.4" x2="543.80" y2="490" stroke="#1f1f1f" stroke-width="0.7"/><line x1="572.70" y1="484.4" x2="572.70" y2="490" stroke="#1f1f1f" stroke-width="0.7"/><line x1="601.60" y1="484.4" x2="601.60" y2="490" stroke="#1f1f1f" stroke-width="0.7"/><line x1="630.50" y1="484.4" x2="630.50" y2="490" stroke="#1f1f1f" stroke-width="0.7"/><line x1="659.40" y1="484.4" x2="659.40" y2="490" stroke="#1f1f1f" stroke-width="0.7"/><line x1="688.30" y1="484.4" x2="688.30" y2="490" stroke="#1f1f1f" stroke-width="0.7"/><line x1="717.20" y1="484.4" x2="717.20" y2="490" stroke="#1f1f1f" stroke-width="0.7"/><line x1="746.10" y1="484.4" x2="746.10" y2="490" stroke="#1f1f1f" stroke-width="0.7"/><line x1="38.05" y1="484.4" x2="38.05" y2="490" stroke="#262626" stroke-width="0.7"/><line x1="66.95" y1="484.4" x2="66.95" y2="490" stroke="#262626" stroke-width="0.7"/><line x1="95.85" y1="484.4" x2="95.85" y2="490" stroke="#262626" stroke-width="0.7"/><line x1="124.75" y1="484.4" x2="124.75" y2="490" stroke="#262626" stroke-width="0.7"/><line x1="153.65" y1="484.4" x2="153.65" y2="490" stroke="#262626" stroke-width="0.7"/><line x1="182.55" y1="484.4" x2="182.55" y2="490" stroke="#262626" stroke-width="0.7"/><line x1="211.45" y1="484.4" x2="211.45" y2="490" stroke="#262626" stroke-width="0.7"/><line x1="240.35" y1="484.4" x2="240.35" y2="490" stroke="#262626" stroke-width="0.7"/><line x1="269.25" y1="484.4" x2="269.25" y2="490" stroke="#262626" stroke-width="0.7"/><line x1="298.15" y1="484.4" x2="298.15" y2="490" stroke="#262626" stroke-width="0.7"/><line x1="327.05" y1="484.4" x2="327.05" y2="490" stroke="#262626" stroke-width="0.7"/><line x1="355.95" y1="484.4" x2="355.95" y2="490" stroke="#262626" stroke-width="0.7"/><line x1="384.85" y1="484.4" x2="384.85" y2="490" stroke="#262626" stroke-width="0.7"/><line x1="413.75" y1="484.4" x2="413.75" y2="490" stroke="#262626" stroke-width="0.7"/><line x1="442.65" y1="484.4" x2="442.65" y2="490" stroke="#262626" stroke-width="0.7"/><line x1="471.55" y1="484.4" x2="471.55" y2="490" stroke="#262626" stroke-width="0.7"/><line x1="500.45" y1="484.4" x2="500.45" y2="490" stroke="#262626" stroke-width="0.7"/><line x1="529.35" y1="484.4" x2="529.35" y2="490" stroke="#262626" stroke-width="0.7"/><line x1="558.25" y1="484.4" x2="558.25" y2="490" stroke="#262626" stroke-width="0.7"/><line x1="587.15" y1="484.4" x2="587.15" y2="490" stroke="#262626" stroke-width="0.7"/><line x1="616.05" y1="484.4" x2="616.05" y2="490" stroke="#262626" stroke-width="0.7"/><line x1="644.95" y1="484.4" x2="644.95" y2="490" stroke="#262626" stroke-width="0.7"/><line x1="673.85" y1="484.4" x2="673.85" y2="490" stroke="#262626" stroke-width="0.7"/><line x1="702.75" y1="484.4" x2="702.75" y2="490" stroke="#262626" stroke-width="0.7"/><line x1="731.65" y1="484.4" x2="731.65" y2="490" stroke="#262626" stroke-width="0.7"/><line x1="760.55" y1="484.4" x2="760.55" y2="490" stroke="#262626" stroke-width="0.7"/></svg>
<div class="t" style="left:-7.50px;width:120px;text-align:center;top:477.35px;font-size:5.4px;color:#b8b8b8;">10</div>
<div class="t" style="left:21.40px;width:120px;text-align:center;top:477.35px;font-size:5.4px;color:#b8b8b8;">20</div>
<div class="t" style="left:50.30px;width:120px;text-align:center;top:477.35px;font-size:5.4px;color:#b8b8b8;">30</div>
<div class="t" style="left:79.20px;width:120px;text-align:center;top:477.35px;font-size:5.4px;color:#b8b8b8;">40</div>
<div class="t" style="left:108.10px;width:120px;text-align:center;top:477.35px;font-size:5.4px;color:#b8b8b8;">50</div>
<div class="t" style="left:137.00px;width:120px;text-align:center;top:477.35px;font-size:5.4px;color:#b8b8b8;">60</div>
<div class="t" style="left:165.90px;width:120px;text-align:center;top:477.35px;font-size:5.4px;color:#b8b8b8;">70</div>
<div class="t" style="left:194.80px;width:120px;text-align:center;top:477.35px;font-size:5.4px;color:#b8b8b8;">80</div>
<div class="t" style="left:223.70px;width:120px;text-align:center;top:477.35px;font-size:5.4px;color:#b8b8b8;">90</div>
<div class="t" style="left:252.60px;width:120px;text-align:center;top:477.35px;font-size:5.4px;color:#b8b8b8;">100</div>
<div class="t" style="left:281.50px;width:120px;text-align:center;top:477.35px;font-size:5.4px;color:#b8b8b8;">110</div>
<div class="t" style="left:310.40px;width:120px;text-align:center;top:477.35px;font-size:5.4px;color:#b8b8b8;">120</div>
<div class="t" style="left:339.30px;width:120px;text-align:center;top:477.35px;font-size:5.4px;color:#b8b8b8;">130</div>
<div class="t" style="left:368.20px;width:120px;text-align:center;top:477.35px;font-size:5.4px;color:#b8b8b8;">140</div>
<div class="t" style="left:397.10px;width:120px;text-align:center;top:477.35px;font-size:5.4px;color:#b8b8b8;">150</div>
<div class="t" style="left:426.00px;width:120px;text-align:center;top:477.35px;font-size:5.4px;color:#b8b8b8;">160</div>
<div class="t" style="left:454.90px;width:120px;text-align:center;top:477.35px;font-size:5.4px;color:#b8b8b8;">170</div>
<div class="t" style="left:483.80px;width:120px;text-align:center;top:477.35px;font-size:5.4px;color:#b8b8b8;">180</div>
<div class="t" style="left:512.70px;width:120px;text-align:center;top:477.35px;font-size:5.4px;color:#b8b8b8;">190</div>
<div class="t" style="left:541.60px;width:120px;text-align:center;top:477.35px;font-size:5.4px;color:#b8b8b8;">200</div>
<div class="t" style="left:570.50px;width:120px;text-align:center;top:477.35px;font-size:5.4px;color:#b8b8b8;">210</div>
<div class="t" style="left:599.40px;width:120px;text-align:center;top:477.35px;font-size:5.4px;color:#b8b8b8;">220</div>
<div class="t" style="left:628.30px;width:120px;text-align:center;top:477.35px;font-size:5.4px;color:#b8b8b8;">230</div>
<div class="t" style="left:657.20px;width:120px;text-align:center;top:477.35px;font-size:5.4px;color:#b8b8b8;">240</div>
<div class="t" style="left:686.10px;width:120px;text-align:center;top:477.35px;font-size:5.4px;color:#b8b8b8;">250</div>
<div class="b" style="left:20.4px;top:475.3px;width:12px;height:8.2px;background:#4772b3;border-radius:2px;"></div>
<div class="b" style="left:25.7px;top:483px;width:1.6px;height:7px;background:#4772b3;border-radius:0px;"></div>
<div class="t" style="left:-33.60px;width:120px;text-align:center;top:477.15px;font-size:5.4px;color:#ffffff;">1</div>
<div class="b" style="left:779px;top:25px;width:161px;height:151px;background:#282828;border-radius:3px;"></div>
<div class="b" style="left:779px;top:25px;width:161px;height:12px;background:#303030;border-radius:0px;border-radius:3px 3px 0 0;"></div>
<div class="b" style="left:782.5px;top:25.8px;width:15.5px;height:9.6px;background:#282828;border-radius:2px;"></div>
<svg width="12" height="10" style="left:783px;top:26px"><rect x="1" y="1.2" width="1.4" height="1.4" fill="#ddd"/><rect x="1" y="4" width="1.4" height="4.5" fill="#ddd"/><rect x="3.6" y="4.2" width="4.2" height="1.6" fill="#ddd"/><rect x="3.6" y="6.8" width="4.2" height="1.6" fill="#ddd"/></svg>
<div class="b" style="left:801.5px;top:25.8px;width:15px;height:9.6px;background:#282828;border-radius:2px;"></div>
<svg width="10" height="10" style="left:802px;top:26px"><path d="M1.5,3 H6 V8 H1.5Z" fill="#888"/><path d="M3,1.5 H7.5 V6.5" fill="none" stroke="#ccc" stroke-width="0.7"/><circle cx="5" cy="4.5" r="1.6" fill="#ddd"/></svg>
<div class="b" style="left:825.4px;top:26.5px;width:57.6px;height:8.4px;background:#1d1d1d;border-radius:2px;"></div>
<svg width="10" height="10" style="left:826px;top:26px"><circle cx="5.5" cy="4" r="2" fill="none" stroke="#cfcfcf" stroke-width="0.7"/><path d="M4.2,5.4 L2,7.8" stroke="#cfcfcf" stroke-width="0.8"/></svg>
<div class="t" style="left:838.00px;top:27.83px;font-size:5.6px;color:#6e6e6e;">Search</div>
<div class="b" style="left:909.5px;top:25.8px;width:17px;height:9.6px;background:#282828;border-radius:2px;"></div>
<svg width="10" height="10" style="left:910px;top:26px"><path d="M1.5,2 H8 L5.5,5.2 V8.2 L4,7.5 V5.2Z" fill="none" stroke="#d8d8d8" stroke-width="0.7"/></svg>
<div class="b" style="left:928px;top:25.8px;width:10px;height:9.6px;background:#4a4a4a;border-radius:2px;"></div>
<svg width="10" height="10" style="left:928px;top:26px"><rect x="2" y="3.5" width="6" height="4.5" fill="none" stroke="#bbb" stroke-width="0.6"/><path d="M2,3.5 H8 V2.5 H2Z" fill="#bbb"/><circle cx="7.5" cy="2.2" r="1.3" fill="#ddd"/></svg>
<div class="b" style="left:779px;top:47.55px;width:161px;height:9.9px;background:#2b2b2b;border-radius:0px;"></div>
<div class="b" style="left:779px;top:67.14999999999999px;width:161px;height:9.9px;background:#2b2b2b;border-radius:0px;"></div>
<div class="b" style="left:779px;top:86.85px;width:161px;height:9.9px;background:#2b2b2b;border-radius:0px;"></div>
<div class="b" style="left:779px;top:106.64999999999999px;width:161px;height:9.9px;background:#2b2b2b;border-radius:0px;"></div>
<div class="b" style="left:779px;top:126.24999999999999px;width:161px;height:9.9px;background:#2b2b2b;border-radius:0px;"></div>
<div class="b" style="left:779px;top:116.6px;width:161px;height:9.3px;background:#1f3a5f;border-radius:0px;"></div>
<div class="t" style="left:800.00px;top:39.73px;font-size:5.75px;color:#d8d8d8;">Scene Collection</div>
<div class="b" style="left:797.5px;top:48px;width:10px;height:9px;background:#4a4a4a;border-radius:2px;"></div>
<div class="t" style="left:810.00px;top:49.44px;font-size:5.75px;color:#d8d8d8;">Collection</div>
<div class="b" style="left:909.8px;top:50.2px;width:5.2px;height:5px;background:#e0e0e0;border-radius:1px;"></div>
<div class="t" style="left:820.00px;top:59.14px;font-size:5.75px;color:#d8d8d8;">Cube</div>
<div class="t" style="left:820.00px;top:69.03px;font-size:5.75px;color:#d8d8d8;">Cube.001</div>
<div class="t" style="left:820.00px;top:78.94px;font-size:5.75px;color:#d8d8d8;">Cube.002</div>
<div class="t" style="left:820.00px;top:88.73px;font-size:5.75px;color:#d8d8d8;">Cube.003</div>
<div class="t" style="left:820.00px;top:98.64px;font-size:5.75px;color:#d8d8d8;">Cube.004</div>
<div class="b" style="left:808.2px;top:107.0px;width:9.4px;height:9px;background:#4a4a4a;border-radius:2px;"></div>
<div class="t" style="left:820.00px;top:108.53px;font-size:5.75px;color:#d8d8d8;">Cube.005</div>
<div class="t" style="left:820.00px;top:118.23px;font-size:5.75px;color:#e8893a;">Cube.006</div>
<div class="t" style="left:820.00px;top:128.13px;font-size:5.75px;color:#d8d8d8;">Cylinder</div>
<svg width="940" height="490"><rect x="789.70" y="39.50" width="7.2" height="1.8" fill="#e8e8e8"/><rect x="790.30" y="41.80" width="6" height="4.4" fill="none" stroke="#e8e8e8" stroke-width="0.9"/><rect x="792.30" y="42.20" width="2" height="1.2" fill="#e8e8e8"/><rect x="798.80" y="49.20" width="7.2" height="1.8" fill="#e8e8e8"/><rect x="799.40" y="51.50" width="6" height="4.4" fill="none" stroke="#e8e8e8" stroke-width="0.9"/><rect x="801.40" y="51.90" width="2" height="1.2" fill="#e8e8e8"/><path d="M911,52.8 L912.1,53.9 L914,51.4" stroke="#282828" stroke-width="0.7" fill="none"/><path d="M920.30,52.50 Q923.50,49.10 926.70,52.50 Q923.50,55.90 920.30,52.50Z" fill="none" stroke="#d8d8d8" stroke-width="0.8"/><circle cx="923.50" cy="52.50" r="1.2" fill="#d8d8d8"/><rect x="929.20" y="50.60" width="6.6" height="4.8" rx="0.6" fill="#d8d8d8"/><rect x="931.00" y="49.40" width="3" height="1.4" fill="#d8d8d8"/><circle cx="932.50" cy="53.00" r="1.3" fill="#2a2a2a"/><line x1="793.4" y1="57.5" x2="793.4" y2="133.5" stroke="#3e3e3e" stroke-width="0.9"/><path d="M809.60,59.10 H816.40 L813.00,65.80Z" fill="#e8893a" stroke="#e8893a" stroke-width="0.5" stroke-linejoin="round"/><path d="M811.90,60.60 H814.10 L813.00,62.80Z" fill="#2a2a2a"/><path d="M844.70,59.40 L851.30,59.40 L848.00,65.40Z M848.00,61.80 V65.40" stroke="#18a283" stroke-width="0.9" fill="none"/><circle cx="844.70" cy="59.40" r="1.3" fill="#18a283"/><circle cx="851.30" cy="59.40" r="1.3" fill="#18a283"/><circle cx="848.00" cy="65.40" r="1.1" fill="#18a283"/><circle cx="848.00" cy="61.60" r="1" fill="#18a283"/><path d="M920.30,62.20 Q923.50,58.80 926.70,62.20 Q923.50,65.60 920.30,62.20Z" fill="none" stroke="#d8d8d8" stroke-width="0.8"/><circle cx="923.50" cy="62.20" r="1.2" fill="#d8d8d8"/><rect x="929.20" y="60.30" width="6.6" height="4.8" rx="0.6" fill="#d8d8d8"/><rect x="931.00" y="59.10" width="3" height="1.4" fill="#d8d8d8"/><circle cx="932.50" cy="62.70" r="1.3" fill="#2a2a2a"/><path d="M809.60,69.00 H816.40 L813.00,75.70Z" fill="#e8893a" stroke="#e8893a" stroke-width="0.5" stroke-linejoin="round"/><path d="M811.90,70.50 H814.10 L813.00,72.70Z" fill="#2a2a2a"/><path d="M857.00,69.30 L863.60,69.30 L860.30,75.30Z M860.30,71.70 V75.30" stroke="#18a283" stroke-width="0.9" fill="none"/><circle cx="857.00" cy="69.30" r="1.3" fill="#18a283"/><circle cx="863.60" cy="69.30" r="1.3" fill="#18a283"/><circle cx="860.30" cy="75.30" r="1.1" fill="#18a283"/><circle cx="860.30" cy="71.50" r="1" fill="#18a283"/><path d="M920.30,72.10 Q923.50,68.70 926.70,72.10 Q923.50,75.50 920.30,72.10Z" fill="none" stroke="#d8d8d8" stroke-width="0.8"/><circle cx="923.50" cy="72.10" r="1.2" fill="#d8d8d8"/><rect x="929.20" y="70.20" width="6.6" height="4.8" rx="0.6" fill="#d8d8d8"/><rect x="931.00" y="69.00" width="3" height="1.4" fill="#d8d8d8"/><circle cx="932.50" cy="72.60" r="1.3" fill="#2a2a2a"/><path d="M809.60,78.90 H816.40 L813.00,85.60Z" fill="#e8893a" stroke="#e8893a" stroke-width="0.5" stroke-linejoin="round"/><path d="M811.90,80.40 H814.10 L813.00,82.60Z" fill="#2a2a2a"/><path d="M857.00,79.20 L863.60,79.20 L860.30,85.20Z M860.30,81.60 V85.20" stroke="#18a283" stroke-width="0.9" fill="none"/><circle cx="857.00" cy="79.20" r="1.3" fill="#18a283"/><circle cx="863.60" cy="79.20" r="1.3" fill="#18a283"/><circle cx="860.30" cy="85.20" r="1.1" fill="#18a283"/><circle cx="860.30" cy="81.40" r="1" fill="#18a283"/><path d="M920.30,82.00 Q923.50,78.60 926.70,82.00 Q923.50,85.40 920.30,82.00Z" fill="none" stroke="#d8d8d8" stroke-width="0.8"/><circle cx="923.50" cy="82.00" r="1.2" fill="#d8d8d8"/><rect x="929.20" y="80.10" width="6.6" height="4.8" rx="0.6" fill="#d8d8d8"/><rect x="931.00" y="78.90" width="3" height="1.4" fill="#d8d8d8"/><circle cx="932.50" cy="82.50" r="1.3" fill="#2a2a2a"/><path d="M809.60,88.70 H816.40 L813.00,95.40Z" fill="#e8893a" stroke="#e8893a" stroke-width="0.5" stroke-linejoin="round"/><path d="M811.90,90.20 H814.10 L813.00,92.40Z" fill="#2a2a2a"/><path d="M857.00,89.00 L863.60,89.00 L860.30,95.00Z M860.30,91.40 V95.00" stroke="#18a283" stroke-width="0.9" fill="none"/><circle cx="857.00" cy="89.00" r="1.3" fill="#18a283"/><circle cx="863.60" cy="89.00" r="1.3" fill="#18a283"/><circle cx="860.30" cy="95.00" r="1.1" fill="#18a283"/><circle cx="860.30" cy="91.20" r="1" fill="#18a283"/><path d="M920.30,91.80 Q923.50,88.40 926.70,91.80 Q923.50,95.20 920.30,91.80Z" fill="none" stroke="#d8d8d8" stroke-width="0.8"/><circle cx="923.50" cy="91.80" r="1.2" fill="#d8d8d8"/><rect x="929.20" y="89.90" width="6.6" height="4.8" rx="0.6" fill="#d8d8d8"/><rect x="931.00" y="88.70" width="3" height="1.4" fill="#d8d8d8"/><circle cx="932.50" cy="92.30" r="1.3" fill="#2a2a2a"/><path d="M809.60,98.60 H816.40 L813.00,105.30Z" fill="#e8893a" stroke="#e8893a" stroke-width="0.5" stroke-linejoin="round"/><path d="M811.90,100.10 H814.10 L813.00,102.30Z" fill="#2a2a2a"/><path d="M857.00,98.90 L863.60,98.90 L860.30,104.90Z M860.30,101.30 V104.90" stroke="#18a283" stroke-width="0.9" fill="none"/><circle cx="857.00" cy="98.90" r="1.3" fill="#18a283"/><circle cx="863.60" cy="98.90" r="1.3" fill="#18a283"/><circle cx="860.30" cy="104.90" r="1.1" fill="#18a283"/><circle cx="860.30" cy="101.10" r="1" fill="#18a283"/><path d="M920.30,101.70 Q923.50,98.30 926.70,101.70 Q923.50,105.10 920.30,101.70Z" fill="none" stroke="#d8d8d8" stroke-width="0.8"/><circle cx="923.50" cy="101.70" r="1.2" fill="#d8d8d8"/><rect x="929.20" y="99.80" width="6.6" height="4.8" rx="0.6" fill="#d8d8d8"/><rect x="931.00" y="98.60" width="3" height="1.4" fill="#d8d8d8"/><circle cx="932.50" cy="102.20" r="1.3" fill="#2a2a2a"/><path d="M809.60,108.50 H816.40 L813.00,115.20Z" fill="#e8893a" stroke="#e8893a" stroke-width="0.5" stroke-linejoin="round"/><path d="M811.90,110.00 H814.10 L813.00,112.20Z" fill="#2a2a2a"/><path d="M857.00,108.80 L863.60,108.80 L860.30,114.80Z M860.30,111.20 V114.80" stroke="#18a283" stroke-width="0.9" fill="none"/><circle cx="857.00" cy="108.80" r="1.3" fill="#18a283"/><circle cx="863.60" cy="108.80" r="1.3" fill="#18a283"/><circle cx="860.30" cy="114.80" r="1.1" fill="#18a283"/><circle cx="860.30" cy="111.00" r="1" fill="#18a283"/><path d="M920.30,111.60 Q923.50,108.20 926.70,111.60 Q923.50,115.00 920.30,111.60Z" fill="none" stroke="#d8d8d8" stroke-width="0.8"/><circle cx="923.50" cy="111.60" r="1.2" fill="#d8d8d8"/><rect x="929.20" y="109.70" width="6.6" height="4.8" rx="0.6" fill="#d8d8d8"/><rect x="931.00" y="108.50" width="3" height="1.4" fill="#d8d8d8"/><circle cx="932.50" cy="112.10" r="1.3" fill="#2a2a2a"/><path d="M809.60,118.20 H816.40 L813.00,124.90Z" fill="#e8893a" stroke="#e8893a" stroke-width="0.5" stroke-linejoin="round"/><path d="M811.90,119.70 H814.10 L813.00,121.90Z" fill="#2a2a2a"/><path d="M857.00,118.50 L863.60,118.50 L860.30,124.50Z M860.30,120.90 V124.50" stroke="#18a283" stroke-width="0.9" fill="none"/><circle cx="857.00" cy="118.50" r="1.3" fill="#18a283"/><circle cx="863.60" cy="118.50" r="1.3" fill="#18a283"/><circle cx="860.30" cy="124.50" r="1.1" fill="#18a283"/><circle cx="860.30" cy="120.70" r="1" fill="#18a283"/><path d="M920.30,121.30 Q923.50,117.90 926.70,121.30 Q923.50,124.70 920.30,121.30Z" fill="none" stroke="#d8d8d8" stroke-width="0.8"/><circle cx="923.50" cy="121.30" r="1.2" fill="#d8d8d8"/><rect x="929.20" y="119.40" width="6.6" height="4.8" rx="0.6" fill="#d8d8d8"/><rect x="931.00" y="118.20" width="3" height="1.4" fill="#d8d8d8"/><circle cx="932.50" cy="121.80" r="1.3" fill="#2a2a2a"/><path d="M809.60,128.10 H816.40 L813.00,134.80Z" fill="#e8893a" stroke="#e8893a" stroke-width="0.5" stroke-linejoin="round"/><path d="M811.90,129.60 H814.10 L813.00,131.80Z" fill="#2a2a2a"/><path d="M853.20,128.40 L859.80,128.40 L856.50,134.40Z M856.50,130.80 V134.40" stroke="#18a283" stroke-width="0.9" fill="none"/><circle cx="853.20" cy="128.40" r="1.3" fill="#18a283"/><circle cx="859.80" cy="128.40" r="1.3" fill="#18a283"/><circle cx="856.50" cy="134.40" r="1.1" fill="#18a283"/><circle cx="856.50" cy="130.60" r="1" fill="#18a283"/><path d="M920.30,131.20 Q923.50,127.80 926.70,131.20 Q923.50,134.60 920.30,131.20Z" fill="none" stroke="#d8d8d8" stroke-width="0.8"/><circle cx="923.50" cy="131.20" r="1.2" fill="#d8d8d8"/><rect x="929.20" y="129.30" width="6.6" height="4.8" rx="0.6" fill="#d8d8d8"/><rect x="931.00" y="128.10" width="3" height="1.4" fill="#d8d8d8"/><circle cx="932.50" cy="131.70" r="1.3" fill="#2a2a2a"/></svg>
<div class="b" style="left:779px;top:177px;width:161px;height:313px;background:#303030;border-radius:3px;"></div>
<div class="b" style="left:779px;top:189px;width:14px;height:301px;background:#1f1f1f;border-radius:0px;"></div>
<div class="b" style="left:782.5px;top:178.8px;width:15.5px;height:9.4px;background:#282828;border-radius:2px;"></div>
<svg width="12" height="10" style="left:783px;top:178.5px"><rect x="1" y="1.5" width="6" height="3" rx="1.5" fill="#e8e8e8"/><rect x="1" y="5.5" width="6" height="3" rx="1.5" fill="#e8e8e8"/><circle cx="2.5" cy="3" r="1" fill="#333"/><circle cx="5.5" cy="7" r="1" fill="#333"/></svg>
<div class="b" style="left:832px;top:179px;width:57px;height:8px;background:#1d1d1d;border-radius:2px;"></div>
<svg width="10" height="10" style="left:832.5px;top:178.5px"><circle cx="5.5" cy="4" r="2" fill="none" stroke="#cfcfcf" stroke-width="0.7"/><path d="M4.2,5.4 L2,7.8" stroke="#cfcfcf" stroke-width="0.8"/></svg>
<div class="t" style="left:844.50px;top:180.33px;font-size:5.6px;color:#6e6e6e;">Search</div>
<div class="b" style="left:929.5px;top:178.8px;width:9px;height:9px;background:#282828;border-radius:2px;"></div>
<svg width="940" height="490"><rect x="780" y="302.00" width="12" height="12" rx="2" fill="#3a3a3a"/><path d="M782.5,194.5 V199.5 M784,196 V199.5" stroke="#f0f0f0" stroke-width="0.9"/><path d="M786,194.5 L787.8,197 L789.6,194.5 M787.8,197 V200" stroke="#e8e8e8" stroke-width="0.9" fill="none"/><circle cx="782.5" cy="200" r="0.8" fill="#e0a030"/><rect x="782.2" y="214.2" width="7.5" height="5" rx="0.8" fill="#d8d8d8"/><rect x="784" y="213" width="3" height="1.5" fill="#d8d8d8"/><circle cx="786" cy="216.7" r="1.4" fill="#2a2a2a"/><rect x="782" y="227" width="8" height="6" fill="none" stroke="#d8d8d8" stroke-width="0.9"/><rect x="782" y="227" width="8" height="1.8" fill="#d8d8d8"/><path d="M784,235 L786,233 L788,235" stroke="#d8d8d8" stroke-width="0.6" fill="none"/><rect x="782" y="239.5" width="8" height="7" fill="none" stroke="#cfcfcf" stroke-width="0.8"/><path d="M782.5,246 L785.5,242 L789.5,246Z" fill="#cfcfcf"/><circle cx="785" cy="257" r="2.6" fill="#d8d8d8"/><circle cx="788.5" cy="254.5" r="1.3" fill="#d8d8d8"/><path d="M783,258.5 L790,258.5" stroke="#888" stroke-width="0.6"/><rect x="782.2" y="269" width="7.6" height="7.6" rx="1.2" fill="#c84050"/><circle cx="786" cy="272.8" r="2" fill="#e8e8e8"/><circle cx="786" cy="272.8" r="1" fill="#c84050"/><rect x="782" y="287" width="8" height="6.5" fill="none" stroke="#d8d8d8" stroke-width="0.9"/><rect x="782" y="286" width="8" height="2" fill="#d8d8d8"/><rect x="785" y="289" width="2" height="1.3" fill="#d8d8d8"/><rect x="783.2" y="305.2" width="5.6" height="5.6" fill="#e8893a"/><path d="M781.8,303.8 L783.2,305.2 M790.2,303.8 L788.8,305.2 M781.8,312.2 L783.2,310.8 M790.2,312.2 L788.8,310.8" stroke="#e8893a" stroke-width="0.9"/><path d="M782.5,325.5 L787,321" stroke="#5b9ae8" stroke-width="1.4"/><circle cx="788" cy="320" r="2" fill="none" stroke="#5b9ae8" stroke-width="1.1"/><circle cx="783" cy="333.5" r="1.2" fill="#5b9ae8"/><circle cx="789" cy="333.5" r="1.2" fill="#5b9ae8"/><circle cx="786" cy="336.5" r="1" fill="#5b9ae8"/><circle cx="783" cy="339.5" r="1.2" fill="#5b9ae8"/><circle cx="789" cy="339.5" r="1.2" fill="#5b9ae8"/><path d="M783,333.5 L789,339.5 M789,333.5 L783,339.5" stroke="#5b9ae8" stroke-width="0.6"/><circle cx="786" cy="350" r="3.4" fill="none" stroke="#5b9ae8" stroke-width="0.9"/><circle cx="786" cy="350" r="1.4" fill="#5b9ae8"/><circle cx="783.5" cy="347.5" r="0.9" fill="#dde"/><circle cx="786" cy="363.6" r="3.2" fill="#5b7ad0"/><path d="M783.5,363.6 H788.5 M786,361 V366" stroke="#2a3a70" stroke-width="0.8"/><path d="M782.6,373.5 L786,379.5 L789.4,373.5 Z" fill="none" stroke="#1fbf90" stroke-width="1.1"/><circle cx="782.6" cy="373.5" r="1" fill="#1fbf90"/><circle cx="789.4" cy="373.5" r="1" fill="#1fbf90"/><circle cx="786" cy="390" r="3.4" fill="#d04050"/><path d="M783.5,388.5 A2.6,2.6 0 0 1 788,387.6" stroke="#f0c0c0" stroke-width="0.9" fill="none"/></svg>
<svg width="10" height="10" style="left:796.5px;top:193.5px"><rect x="2.5" y="2.5" width="5" height="5" fill="#e8e8e8"/><path d="M1,1 L2.5,2.5 M9,1 L7.5,2.5 M1,9 L2.5,7.5 M9,9 L7.5,7.5" stroke="#e8e8e8" stroke-width="0.9"/></svg>
<div class="t" style="left:809.00px;top:195.24px;font-size:5.9px;color:#e0e0e0;">Cube.005</div>
<svg width="10" height="10" style="left:927px;top:193.5px"><path d="M3,7 L5,5 M4.5,2.5 L7.5,5.5 M5.5,1.5 L8.5,4.5 L7,6 L4,3Z" stroke="#bbb" stroke-width="0.8" fill="none"/></svg>
<svg width="16" height="10" style="left:796.5px;top:211px"><rect x="2.5" y="2.5" width="5" height="5" fill="#e8e8e8"/><path d="M1,1 L2.5,2.5 M9,1 L7.5,2.5 M1,9 L2.5,7.5 M9,9 L7.5,7.5" stroke="#e8e8e8" stroke-width="0.9"/></svg>
<div class="b" style="left:813px;top:211.9px;width:124px;height:8.2px;background:#1d1d1d;border-radius:2px;"></div>
<div class="t" style="left:815.50px;top:212.84px;font-size:5.9px;color:#e0e0e0;">Cube.005</div>
<div class="b" style="left:796.4px;top:226px;width:141.6px;height:137.3px;background:#3d3d3d;border-radius:3px;"></div>
<div class="t" style="left:807.00px;top:229.24px;font-size:5.9px;color:#e8e8e8;">Transform</div>
<div class="b" style="left:852.4px;top:242.90px;width:61.3px;height:9.00px;background:#545454;border-radius:2px 2px 0 0;"></div>
<div class="t" style="right:92.50px;top:243.94px;font-size:5.75px;color:#d8d8d8;">Location X</div>
<div class="t" style="left:823.00px;width:120px;text-align:center;top:243.94px;font-size:5.75px;color:#e8e8e8;">4.1887 m</div>
<div class="b" style="left:852.4px;top:252.60px;width:61.3px;height:9.00px;background:#545454;border-radius:0;"></div>
<div class="t" style="right:92.50px;top:253.63px;font-size:5.75px;color:#d8d8d8;">Y</div>
<div class="t" style="left:823.00px;width:120px;text-align:center;top:253.63px;font-size:5.75px;color:#e8e8e8;">-0.06064 m</div>
<div class="b" style="left:852.4px;top:262.30px;width:61.3px;height:9.00px;background:#545454;border-radius:0 0 2px 2px;"></div>
<div class="t" style="right:92.50px;top:263.33px;font-size:5.75px;color:#d8d8d8;">Z</div>
<div class="t" style="left:823.00px;width:120px;text-align:center;top:263.33px;font-size:5.75px;color:#e8e8e8;">7.5189 m</div>
<div class="b" style="left:852.4px;top:274.80px;width:61.3px;height:9.00px;background:#545454;border-radius:2px 2px 0 0;"></div>
<div class="t" style="right:92.50px;top:275.83px;font-size:5.75px;color:#d8d8d8;">Rotation X</div>
<div class="t" style="left:823.00px;width:120px;text-align:center;top:275.83px;font-size:5.75px;color:#e8e8e8;">90°</div>
<div class="b" style="left:852.4px;top:284.50px;width:61.3px;height:9.00px;background:#545454;border-radius:0;"></div>
<div class="t" style="right:92.50px;top:285.53px;font-size:5.75px;color:#d8d8d8;">Y</div>
<div class="t" style="left:823.00px;width:120px;text-align:center;top:285.53px;font-size:5.75px;color:#e8e8e8;">90°</div>
<div class="b" style="left:852.4px;top:294.20px;width:61.3px;height:9.00px;background:#545454;border-radius:0 0 2px 2px;"></div>
<div class="t" style="right:92.50px;top:295.23px;font-size:5.75px;color:#d8d8d8;">Z</div>
<div class="t" style="left:823.00px;width:120px;text-align:center;top:295.23px;font-size:5.75px;color:#e8e8e8;">0°</div>
<div class="t" style="right:92.50px;top:307.53px;font-size:5.75px;color:#d8d8d8;">Mode</div>
<div class="b" style="left:852.4px;top:306.6px;width:61.3px;height:8.4px;background:#282828;border-radius:2px;"></div>
<div class="t" style="left:855.50px;top:307.63px;font-size:5.75px;color:#e0e0e0;">XYZ Euler</div>
<div class="b" style="left:852.4px;top:318.80px;width:61.3px;height:9.00px;background:#545454;border-radius:2px 2px 0 0;"></div>
<div class="t" style="right:92.50px;top:319.83px;font-size:5.75px;color:#d8d8d8;">Scale X</div>
<div class="t" style="left:823.00px;width:120px;text-align:center;top:319.83px;font-size:5.75px;color:#e8e8e8;">0.179</div>
<div class="b" style="left:852.4px;top:328.50px;width:61.3px;height:9.00px;background:#545454;border-radius:0;"></div>
<div class="t" style="right:92.50px;top:329.53px;font-size:5.75px;color:#d8d8d8;">Y</div>
<div class="t" style="left:823.00px;width:120px;text-align:center;top:329.53px;font-size:5.75px;color:#e8e8e8;">0.168</div>
<div class="b" style="left:852.4px;top:338.20px;width:61.3px;height:9.00px;background:#545454;border-radius:0 0 2px 2px;"></div>
<div class="t" style="right:92.50px;top:339.23px;font-size:5.75px;color:#d8d8d8;">Z</div>
<div class="t" style="left:823.00px;width:120px;text-align:center;top:339.23px;font-size:5.75px;color:#e8e8e8;">3.747</div>
<div class="t" style="left:814.00px;top:354.93px;font-size:5.75px;color:#e0e0e0;">Delta Transform</div>
<div class="b" style="left:795.7px;top:365.2px;width:142.3px;height:12.4px;background:#3d3d3d;border-radius:3px;"></div>
<div class="t" style="left:806.60px;top:368.33px;font-size:5.75px;color:#e0e0e0;">Relations</div>
<div class="b" style="left:795.7px;top:378.47999999999996px;width:142.3px;height:12.4px;background:#3d3d3d;border-radius:3px;"></div>
<div class="t" style="left:806.60px;top:381.61px;font-size:5.75px;color:#e0e0e0;">Collections</div>
<div class="b" style="left:795.7px;top:391.76px;width:142.3px;height:12.4px;background:#3d3d3d;border-radius:3px;"></div>
<div class="t" style="left:806.60px;top:394.89px;font-size:5.75px;color:#e0e0e0;">Instancing</div>
<div class="b" style="left:795.7px;top:405.03999999999996px;width:142.3px;height:12.4px;background:#3d3d3d;border-radius:3px;"></div>
<div class="t" style="left:806.60px;top:408.17px;font-size:5.75px;color:#e0e0e0;">Motion Paths</div>
<div class="b" style="left:795.7px;top:418.32px;width:142.3px;height:12.4px;background:#3d3d3d;border-radius:3px;"></div>
<div class="t" style="left:806.60px;top:421.45px;font-size:5.75px;color:#e0e0e0;">Shading</div>
<div class="b" style="left:795.7px;top:431.59999999999997px;width:142.3px;height:12.4px;background:#3d3d3d;border-radius:3px;"></div>
<div class="t" style="left:806.60px;top:434.73px;font-size:5.75px;color:#e0e0e0;">Visibility</div>
<div class="b" style="left:795.7px;top:444.88px;width:142.3px;height:12.4px;background:#3d3d3d;border-radius:3px;"></div>
<div class="t" style="left:806.60px;top:448.01px;font-size:5.75px;color:#e0e0e0;">Viewport Display</div>
<div class="b" style="left:795.7px;top:458.15999999999997px;width:142.3px;height:12.4px;background:#3d3d3d;border-radius:3px;"></div>
<div class="t" style="left:806.60px;top:461.29px;font-size:5.75px;color:#e0e0e0;">Line Art</div>
<div class="b" style="left:795.7px;top:471.44px;width:142.3px;height:12.4px;background:#3d3d3d;border-radius:3px;"></div>
<div class="t" style="left:806.60px;top:474.57px;font-size:5.75px;color:#e0e0e0;">Animation</div>
<div class="b" style="left:795.7px;top:484.71999999999997px;width:142.3px;height:12.4px;background:#3d3d3d;border-radius:3px;"></div>
<div class="t" style="left:806.60px;top:487.85px;font-size:5.75px;color:#e0e0e0;">Custom Properties</div>
<svg width="940" height="490"><path d="M11.92,29.96 L13.60,31.64 L15.28,29.96" fill="none" stroke="#c8c8c8" stroke-width="0.85"/><path d="M68.82,29.96 L70.50,31.64 L72.18,29.96" fill="none" stroke="#c8c8c8" stroke-width="0.85"/><path d="M358.32,29.96 L360.00,31.64 L361.68,29.96" fill="none" stroke="#c8c8c8" stroke-width="0.85"/><path d="M377.94,30.02 L379.50,31.58 L381.06,30.02" fill="none" stroke="#c8c8c8" stroke-width="0.85"/><path d="M405.94,30.02 L407.50,31.58 L409.06,30.02" fill="none" stroke="#c8c8c8" stroke-width="0.85"/><path d="M430.56,30.08 L432.00,31.52 L433.44,30.08" fill="none" stroke="#555" stroke-width="0.85"/><path d="M661.44,30.02 L663.00,31.58 L664.56,30.02" fill="none" stroke="#c8c8c8" stroke-width="0.85"/><path d="M682.94,30.02 L684.50,31.58 L686.06,30.02" fill="none" stroke="#c8c8c8" stroke-width="0.85"/><path d="M704.94,30.02 L706.50,31.58 L708.06,30.02" fill="none" stroke="#c8c8c8" stroke-width="0.85"/><path d="M767.94,30.02 L769.50,31.58 L771.06,30.02" fill="none" stroke="#c8c8c8" stroke-width="0.85"/><path d="M78.94,42.42 L80.50,43.98 L82.06,42.42" fill="none" stroke="#c8c8c8" stroke-width="0.85"/><path d="M140.94,42.42 L142.50,43.98 L144.06,42.42" fill="none" stroke="#c8c8c8" stroke-width="0.85"/><path d="M377.06,41.25 L378.94,43.20 L377.06,45.15" fill="none" stroke="#c8c8c8" stroke-width="0.85"/><path d="M767.94,42.72 L769.50,44.28 L771.06,42.72" fill="none" stroke="#c8c8c8" stroke-width="0.85"/><path d="M648.82,56.66 L650.50,58.34 L652.18,56.66" fill="none" stroke="#cfcfcf" stroke-width="0.85"/><rect x="753.55" y="55.55" width="0.9" height="0.9" fill="#6a6a6a"/><rect x="755.05" y="55.55" width="0.9" height="0.9" fill="#6a6a6a"/><rect x="756.55" y="55.55" width="0.9" height="0.9" fill="#6a6a6a"/><rect x="758.05" y="55.55" width="0.9" height="0.9" fill="#6a6a6a"/><rect x="759.55" y="55.55" width="0.9" height="0.9" fill="#6a6a6a"/><path d="M753.44,151.72 L755.00,153.28 L756.56,151.72" fill="none" stroke="#c8c8c8" stroke-width="0.85"/><path d="M33.06,449.75 L34.94,451.70 L33.06,453.65" fill="none" stroke="#bbbbbb" stroke-width="0.85"/><path d="M12.24,466.82 L13.80,468.38 L15.36,466.82" fill="none" stroke="#c8c8c8" stroke-width="0.85"/><path d="M48.94,466.82 L50.50,468.38 L52.06,466.82" fill="none" stroke="#c8c8c8" stroke-width="0.85"/><path d="M79.74,466.82 L81.30,468.38 L82.86,466.82" fill="none" stroke="#c8c8c8" stroke-width="0.85"/><path d="M354.36,466.88 L355.80,468.32 L357.24,466.88" fill="none" stroke="#6a6a6a" stroke-width="0.85"/><path d="M775.14,485.50 L776.86,487.30 L775.14,489.10" fill="none" stroke="#8a8a8a" stroke-width="0.85"/><path d="M793.56,29.88 L795.00,31.32 L796.44,29.88" fill="none" stroke="#c8c8c8" stroke-width="0.85"/><path d="M812.06,29.88 L813.50,31.32 L814.94,29.88" fill="none" stroke="#c8c8c8" stroke-width="0.85"/><path d="M921.56,29.88 L923.00,31.32 L924.44,29.88" fill="none" stroke="#c8c8c8" stroke-width="0.85"/><path d="M789.52,51.66 L791.20,53.34 L792.88,51.66" fill="none" stroke="#bdbdbd" stroke-width="0.85"/><path d="M802.56,60.25 L804.44,62.20 L802.56,64.15" fill="none" stroke="#bdbdbd" stroke-width="0.85"/><path d="M802.56,70.15 L804.44,72.10 L802.56,74.05" fill="none" stroke="#bdbdbd" stroke-width="0.85"/><path d="M802.56,80.05 L804.44,82.00 L802.56,83.95" fill="none" stroke="#bdbdbd" stroke-width="0.85"/><path d="M802.56,89.85 L804.44,91.80 L802.56,93.75" fill="none" stroke="#bdbdbd" stroke-width="0.85"/><path d="M802.56,99.75 L804.44,101.70 L802.56,103.65" fill="none" stroke="#bdbdbd" stroke-width="0.85"/><path d="M802.56,109.65 L804.44,111.60 L802.56,113.55" fill="none" stroke="#bdbdbd" stroke-width="0.85"/><path d="M802.56,119.35 L804.44,121.30 L802.56,123.25" fill="none" stroke="#bdbdbd" stroke-width="0.85"/><path d="M802.56,129.25 L804.44,131.20 L802.56,133.15" fill="none" stroke="#bdbdbd" stroke-width="0.85"/><path d="M794.06,182.48 L795.50,183.92 L796.94,182.48" fill="none" stroke="#c8c8c8" stroke-width="0.85"/><path d="M932.44,182.42 L934.00,183.98 L935.56,182.42" fill="none" stroke="#c8c8c8" stroke-width="0.85"/><path d="M808.06,215.28 L809.50,216.72 L810.94,215.28" fill="none" stroke="#c8c8c8" stroke-width="0.85"/><path d="M800.82,231.76 L802.50,233.44 L804.18,231.76" fill="none" stroke="#cfcfcf" stroke-width="0.85"/><rect x="927.55" y="231.05" width="0.9" height="0.9" fill="#6a6a6a"/><rect x="929.05" y="231.05" width="0.9" height="0.9" fill="#6a6a6a"/><rect x="930.55" y="231.05" width="0.9" height="0.9" fill="#6a6a6a"/><rect x="932.05" y="231.05" width="0.9" height="0.9" fill="#6a6a6a"/><rect x="933.55" y="231.05" width="0.9" height="0.9" fill="#6a6a6a"/><path d="M908.44,310.02 L910.00,311.58 L911.56,310.02" fill="none" stroke="#c8c8c8" stroke-width="0.85"/><path d="M809.56,356.05 L811.44,358.00 L809.56,359.95" fill="none" stroke="#cfcfcf" stroke-width="0.85"/><path d="M801.36,369.45 L803.24,371.40 L801.36,373.35" fill="none" stroke="#cfcfcf" stroke-width="0.85"/><rect x="927.55" y="370.15" width="0.9" height="0.9" fill="#6a6a6a"/><rect x="929.05" y="370.15" width="0.9" height="0.9" fill="#6a6a6a"/><rect x="930.55" y="370.15" width="0.9" height="0.9" fill="#6a6a6a"/><rect x="932.05" y="370.15" width="0.9" height="0.9" fill="#6a6a6a"/><rect x="933.55" y="370.15" width="0.9" height="0.9" fill="#6a6a6a"/><path d="M801.36,382.73 L803.24,384.68 L801.36,386.63" fill="none" stroke="#cfcfcf" stroke-width="0.85"/><rect x="927.55" y="383.43" width="0.9" height="0.9" fill="#6a6a6a"/><rect x="929.05" y="383.43" width="0.9" height="0.9" fill="#6a6a6a"/><rect x="930.55" y="383.43" width="0.9" height="0.9" fill="#6a6a6a"/><rect x="932.05" y="383.43" width="0.9" height="0.9" fill="#6a6a6a"/><rect x="933.55" y="383.43" width="0.9" height="0.9" fill="#6a6a6a"/><path d="M801.36,396.01 L803.24,397.96 L801.36,399.91" fill="none" stroke="#cfcfcf" stroke-width="0.85"/><rect x="927.55" y="396.71" width="0.9" height="0.9" fill="#6a6a6a"/><rect x="929.05" y="396.71" width="0.9" height="0.9" fill="#6a6a6a"/><rect x="930.55" y="396.71" width="0.9" height="0.9" fill="#6a6a6a"/><rect x="932.05" y="396.71" width="0.9" height="0.9" fill="#6a6a6a"/><rect x="933.55" y="396.71" width="0.9" height="0.9" fill="#6a6a6a"/><path d="M801.36,409.29 L803.24,411.24 L801.36,413.19" fill="none" stroke="#cfcfcf" stroke-width="0.85"/><rect x="927.55" y="409.99" width="0.9" height="0.9" fill="#6a6a6a"/><rect x="929.05" y="409.99" width="0.9" height="0.9" fill="#6a6a6a"/><rect x="930.55" y="409.99" width="0.9" height="0.9" fill="#6a6a6a"/><rect x="932.05" y="409.99" width="0.9" height="0.9" fill="#6a6a6a"/><rect x="933.55" y="409.99" width="0.9" height="0.9" fill="#6a6a6a"/><path d="M801.36,422.57 L803.24,424.52 L801.36,426.47" fill="none" stroke="#cfcfcf" stroke-width="0.85"/><rect x="927.55" y="423.27" width="0.9" height="0.9" fill="#6a6a6a"/><rect x="929.05" y="423.27" width="0.9" height="0.9" fill="#6a6a6a"/><rect x="930.55" y="423.27" width="0.9" height="0.9" fill="#6a6a6a"/><rect x="932.05" y="423.27" width="0.9" height="0.9" fill="#6a6a6a"/><rect x="933.55" y="423.27" width="0.9" height="0.9" fill="#6a6a6a"/><path d="M801.36,435.85 L803.24,437.80 L801.36,439.75" fill="none" stroke="#cfcfcf" stroke-width="0.85"/><rect x="927.55" y="436.55" width="0.9" height="0.9" fill="#6a6a6a"/><rect x="929.05" y="436.55" width="0.9" height="0.9" fill="#6a6a6a"/><rect x="930.55" y="436.55" width="0.9" height="0.9" fill="#6a6a6a"/><rect x="932.05" y="436.55" width="0.9" height="0.9" fill="#6a6a6a"/><rect x="933.55" y="436.55" width="0.9" height="0.9" fill="#6a6a6a"/><path d="M801.36,449.13 L803.24,451.08 L801.36,453.03" fill="none" stroke="#cfcfcf" stroke-width="0.85"/><rect x="927.55" y="449.83" width="0.9" height="0.9" fill="#6a6a6a"/><rect x="929.05" y="449.83" width="0.9" height="0.9" fill="#6a6a6a"/><rect x="930.55" y="449.83" width="0.9" height="0.9" fill="#6a6a6a"/><rect x="932.05" y="449.83" width="0.9" height="0.9" fill="#6a6a6a"/><rect x="933.55" y="449.83" width="0.9" height="0.9" fill="#6a6a6a"/><path d="M801.36,462.41 L803.24,464.36 L801.36,466.31" fill="none" stroke="#cfcfcf" stroke-width="0.85"/><rect x="927.55" y="463.11" width="0.9" height="0.9" fill="#6a6a6a"/><rect x="929.05" y="463.11" width="0.9" height="0.9" fill="#6a6a6a"/><rect x="930.55" y="463.11" width="0.9" height="0.9" fill="#6a6a6a"/><rect x="932.05" y="463.11" width="0.9" height="0.9" fill="#6a6a6a"/><rect x="933.55" y="463.11" width="0.9" height="0.9" fill="#6a6a6a"/><path d="M801.36,475.69 L803.24,477.64 L801.36,479.59" fill="none" stroke="#cfcfcf" stroke-width="0.85"/><rect x="927.55" y="476.39" width="0.9" height="0.9" fill="#6a6a6a"/><rect x="929.05" y="476.39" width="0.9" height="0.9" fill="#6a6a6a"/><rect x="930.55" y="476.39" width="0.9" height="0.9" fill="#6a6a6a"/><rect x="932.05" y="476.39" width="0.9" height="0.9" fill="#6a6a6a"/><rect x="933.55" y="476.39" width="0.9" height="0.9" fill="#6a6a6a"/><path d="M801.36,488.97 L803.24,490.92 L801.36,492.87" fill="none" stroke="#cfcfcf" stroke-width="0.85"/><rect x="927.55" y="489.67" width="0.9" height="0.9" fill="#6a6a6a"/><rect x="929.05" y="489.67" width="0.9" height="0.9" fill="#6a6a6a"/><rect x="930.55" y="489.67" width="0.9" height="0.9" fill="#6a6a6a"/><rect x="932.05" y="489.67" width="0.9" height="0.9" fill="#6a6a6a"/><rect x="933.55" y="489.67" width="0.9" height="0.9" fill="#6a6a6a"/><path d="M747.90,81.60 A1.8,1.8 0 0 1 751.30,80.60" fill="none" stroke="#c0c0c0" stroke-width="0.6"/><rect x="749.90" y="81.80" width="3.4" height="2.8" fill="none" stroke="#c0c0c0" stroke-width="0.6"/><path d="M747.90,91.00 A1.8,1.8 0 0 1 751.30,90.00" fill="none" stroke="#c0c0c0" stroke-width="0.6"/><rect x="749.90" y="91.20" width="3.4" height="2.8" fill="none" stroke="#c0c0c0" stroke-width="0.6"/><path d="M747.90,100.40 A1.8,1.8 0 0 1 751.30,99.40" fill="none" stroke="#c0c0c0" stroke-width="0.6"/><rect x="749.90" y="100.60" width="3.4" height="2.8" fill="none" stroke="#c0c0c0" stroke-width="0.6"/><path d="M747.90,121.50 A1.8,1.8 0 0 1 751.30,120.50" fill="none" stroke="#c0c0c0" stroke-width="0.6"/><rect x="749.90" y="121.70" width="3.4" height="2.8" fill="none" stroke="#c0c0c0" stroke-width="0.6"/><path d="M747.90,130.90 A1.8,1.8 0 0 1 751.30,129.90" fill="none" stroke="#c0c0c0" stroke-width="0.6"/><rect x="749.90" y="131.10" width="3.4" height="2.8" fill="none" stroke="#c0c0c0" stroke-width="0.6"/><path d="M747.90,140.30 A1.8,1.8 0 0 1 751.30,139.30" fill="none" stroke="#c0c0c0" stroke-width="0.6"/><rect x="749.90" y="140.50" width="3.4" height="2.8" fill="none" stroke="#c0c0c0" stroke-width="0.6"/><path d="M747.90,172.60 A1.8,1.8 0 0 1 751.30,171.60" fill="none" stroke="#c0c0c0" stroke-width="0.6"/><rect x="749.90" y="172.80" width="3.4" height="2.8" fill="none" stroke="#c0c0c0" stroke-width="0.6"/><path d="M747.90,182.00 A1.8,1.8 0 0 1 751.30,181.00" fill="none" stroke="#c0c0c0" stroke-width="0.6"/><rect x="749.90" y="182.20" width="3.4" height="2.8" fill="none" stroke="#c0c0c0" stroke-width="0.6"/><path d="M747.90,191.40 A1.8,1.8 0 0 1 751.30,190.40" fill="none" stroke="#c0c0c0" stroke-width="0.6"/><rect x="749.90" y="191.60" width="3.4" height="2.8" fill="none" stroke="#c0c0c0" stroke-width="0.6"/><path d="M917.20,246.60 A1.8,1.8 0 0 1 920.60,245.60" fill="none" stroke="#c0c0c0" stroke-width="0.6"/><rect x="919.20" y="246.80" width="3.4" height="2.8" fill="none" stroke="#c0c0c0" stroke-width="0.6"/><rect x="928.6" y="246.20" width="2" height="2" fill="#d8d8d8"/><path d="M917.20,256.30 A1.8,1.8 0 0 1 920.60,255.30" fill="none" stroke="#c0c0c0" stroke-width="0.6"/><rect x="919.20" y="256.50" width="3.4" height="2.8" fill="none" stroke="#c0c0c0" stroke-width="0.6"/><rect x="928.6" y="255.90" width="2" height="2" fill="#d8d8d8"/><path d="M917.20,266.00 A1.8,1.8 0 0 1 920.60,265.00" fill="none" stroke="#c0c0c0" stroke-width="0.6"/><rect x="919.20" y="266.20" width="3.4" height="2.8" fill="none" stroke="#c0c0c0" stroke-width="0.6"/><rect x="928.6" y="265.60" width="2" height="2" fill="#d8d8d8"/><path d="M917.20,278.50 A1.8,1.8 0 0 1 920.60,277.50" fill="none" stroke="#c0c0c0" stroke-width="0.6"/><rect x="919.20" y="278.70" width="3.4" height="2.8" fill="none" stroke="#c0c0c0" stroke-width="0.6"/><rect x="928.6" y="278.10" width="2" height="2" fill="#d8d8d8"/><path d="M917.20,288.20 A1.8,1.8 0 0 1 920.60,287.20" fill="none" stroke="#c0c0c0" stroke-width="0.6"/><rect x="919.20" y="288.40" width="3.4" height="2.8" fill="none" stroke="#c0c0c0" stroke-width="0.6"/><rect x="928.6" y="287.80" width="2" height="2" fill="#d8d8d8"/><path d="M917.20,297.90 A1.8,1.8 0 0 1 920.60,296.90" fill="none" stroke="#c0c0c0" stroke-width="0.6"/><rect x="919.20" y="298.10" width="3.4" height="2.8" fill="none" stroke="#c0c0c0" stroke-width="0.6"/><rect x="928.6" y="297.50" width="2" height="2" fill="#d8d8d8"/><rect x="928.6" y="309.8" width="2" height="2" fill="#d8d8d8"/><path d="M917.20,322.50 A1.8,1.8 0 0 1 920.60,321.50" fill="none" stroke="#c0c0c0" stroke-width="0.6"/><rect x="919.20" y="322.70" width="3.4" height="2.8" fill="none" stroke="#c0c0c0" stroke-width="0.6"/><rect x="928.6" y="322.10" width="2" height="2" fill="#d8d8d8"/><path d="M917.20,332.20 A1.8,1.8 0 0 1 920.60,331.20" fill="none" stroke="#c0c0c0" stroke-width="0.6"/><rect x="919.20" y="332.40" width="3.4" height="2.8" fill="none" stroke="#c0c0c0" stroke-width="0.6"/><rect x="928.6" y="331.80" width="2" height="2" fill="#d8d8d8"/><path d="M917.20,341.90 A1.8,1.8 0 0 1 920.60,340.90" fill="none" stroke="#c0c0c0" stroke-width="0.6"/><rect x="919.20" y="342.10" width="3.4" height="2.8" fill="none" stroke="#c0c0c0" stroke-width="0.6"/><rect x="928.6" y="341.50" width="2" height="2" fill="#d8d8d8"/></svg>
</body></html>
